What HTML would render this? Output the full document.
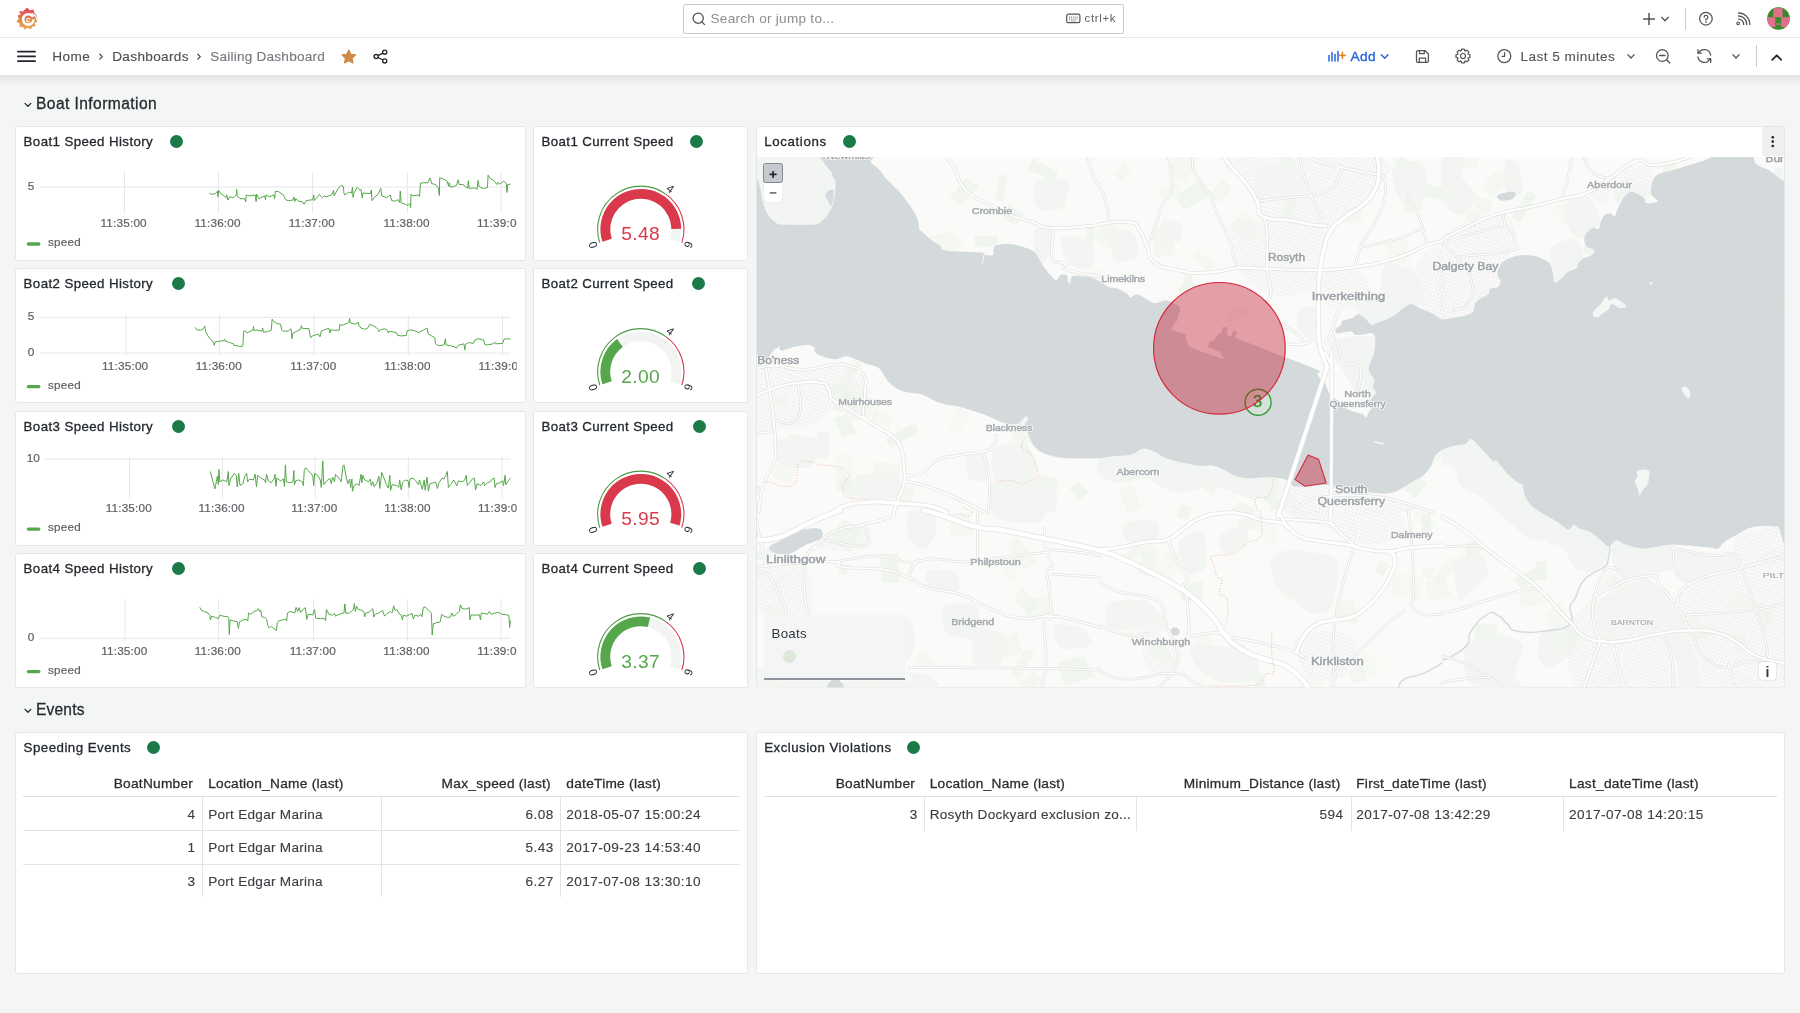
<!DOCTYPE html>
<html lang="en"><head><meta charset="utf-8"><title>Sailing Dashboard - Dashboards - Grafana</title>
<style>
*{box-sizing:border-box}
html,body{margin:0;padding:0}
body{width:1800px;height:1013px;overflow:hidden;background:#f4f5f5;font-family:"Liberation Sans",sans-serif;color:#24292e;font-size:13.5px}
#app{position:relative;width:1800px;height:1013px;overflow:hidden;will-change:transform;transform:translateZ(0)}
.abs{position:absolute}
.t{position:absolute;white-space:nowrap;line-height:1}
.topbar{position:absolute;left:0;top:0;width:1800px;height:37px;background:#fff}
.topline{position:absolute;left:0;top:36.5px;width:1800px;height:1.3px;background:#e6e7e8}
.subbar{position:absolute;left:0;top:38px;width:1800px;height:37px;background:#fff;}
.subshadow{position:absolute;left:0;top:75px;width:1800px;height:12px;background:linear-gradient(to bottom,rgba(20,20,20,.078),rgba(20,20,20,.05) 25%,rgba(20,20,20,.03) 45%,rgba(20,20,20,.012) 70%,rgba(20,20,20,0))}
.sec{color:#5d6165}
.panel{position:absolute;background:#fff;border:1px solid #e5e6e7;border-radius:2.5px}
.ptitle{position:absolute;left:7.6px;top:8.4px;font-size:13.3px;line-height:14px;white-space:nowrap;color:#24292e;letter-spacing:.4px;-webkit-text-stroke:.3px #24292e}
.dot{position:absolute;width:13px;height:13px;border-radius:50%;background:#1c7a49}
.rowt{position:absolute;font-size:15.6px;line-height:18px;white-space:nowrap;color:#24292e;-webkit-text-stroke:.28px #24292e;letter-spacing:.42px}
svg{position:absolute;overflow:visible}
svg text{font-family:"Liberation Sans",sans-serif}

</style></head>
<body>
<div id="app">
<div class="topbar"></div><div class="subbar"></div><div class="subshadow"></div><div class="topline"></div>
<svg style="left:15.5px;top:7px" width="22" height="23.5" viewBox="0 0 22 23.5">
<defs><linearGradient id="glg" x1="0" y1="0" x2="0" y2="1"><stop offset="0" stop-color="#e2405c"/><stop offset=".38" stop-color="#e0704f"/><stop offset=".6" stop-color="#dd9046"/><stop offset="1" stop-color="#eaa553"/></linearGradient></defs>
<path fill="url(#glg)" d="M11.2 0.4 L13.6 3.2 L17.4 2.6 L18.2 5.6 C20 7.4 21.2 9.4 21.4 11.6 L19.6 10 L21.2 14.6 L18.6 16.2 L19.6 19.2 L16.2 19.4 L15 22.6 L11.8 20.8 L8.6 22.8 L7 19.8 L3.4 20.2 L3.8 16.6 L0.4 14.8 L2.8 11.8 L1.6 8.4 L4.6 7.4 L3 4 L7 4.4 L8.2 3.2 Z"/>
<circle cx="12.3" cy="12.4" r="5.15" fill="none" stroke="#fff" stroke-width="2.7"/>
<path fill="none" stroke="url(#glg)" stroke-width="2.3" d="M15.6 11.9 L20.6 10.2"/>
<path fill="none" stroke="#fff" stroke-width="1.3" stroke-linecap="round" d="M15.9 6.6 C18.4 7.6 20 9.3 20.6 11.2"/>
<path fill="none" stroke="#fff" stroke-width="1.05" stroke-linecap="round" d="M13.9 12.2 A1.75 1.75 0 1 0 13.4 14.6"/>
</svg>
<div class="abs" style="left:683px;top:4px;width:441px;height:29.5px;border:1px solid #c5c7ca;border-radius:2.5px;background:#fff"></div>
<svg style="left:691px;top:11px" width="16" height="16" viewBox="0 0 16 16"><circle cx="7.2" cy="7.2" r="5.1" fill="none" stroke="#505459" stroke-width="1.3"/><path d="M10.9 10.9 L13.6 13.6" stroke="#505459" stroke-width="1.3" stroke-linecap="round"/></svg>
<div class="t" style="left:710.5px;top:11.5px;font-size:13.6px;color:#8a8d91;letter-spacing:.26px">Search or jump to...</div>
<svg style="left:1066px;top:13px" width="15" height="11" viewBox="0 0 15 11"><rect x=".7" y="1.2" width="13.2" height="8.4" rx="1.6" fill="none" stroke="#505459" stroke-width="1.2"/><path d="M3 4.1h9M3 6h9M4.6 7.9h5.8" stroke="#505459" stroke-width=".9" stroke-dasharray="1 .9"/></svg>
<div class="t" style="left:1084.5px;top:12.5px;font-size:11.4px;color:#5d6165;letter-spacing:.68px">ctrl+k</div>
<svg style="left:1642px;top:12px" width="14" height="14" viewBox="0 0 14 14"><path d="M7 1.6v10.8M1.6 7h10.8" stroke="#505459" stroke-width="1.5" stroke-linecap="round"/></svg>
<svg style="left:0;top:0" width="1800" height="80"><polyline points="1661.8,17.3 1665,20.7 1668.2,17.3" fill="none" stroke="#505459" stroke-width="1.3" stroke-linecap="round" stroke-linejoin="round"/></svg>
<div class="abs" style="left:1684.6px;top:7.5px;width:1px;height:22.5px;background:#c9ccd0"></div>
<svg style="left:1698px;top:11px" width="16" height="16" viewBox="0 0 16 16"><circle cx="7.9" cy="7.7" r="6.3" fill="none" stroke="#505459" stroke-width="1.25"/><path d="M6.1 6.2 A1.9 1.9 0 1 1 8 8.2 V9.2" fill="none" stroke="#505459" stroke-width="1.25" stroke-linecap="round"/><circle cx="8" cy="11.1" r=".85" fill="#505459"/></svg>
<svg style="left:1735px;top:11px" width="16" height="16" viewBox="0 0 16 16"><g fill="none" stroke="#505459" stroke-width="1.3" stroke-linecap="round"><path d="M3.6 8.1 A5.2 5.2 0 0 1 8.7 13.4"/><path d="M3.6 5 A8.3 8.3 0 0 1 11.8 13.4"/><path d="M3.6 2 A11.3 11.3 0 0 1 14.8 13.4"/><circle cx="3.1" cy="12.3" r="1.3" stroke-width="1.1"/></g></svg>
<svg style="left:1767px;top:7.2px" width="23" height="23" viewBox="0 0 23 23"><defs><clipPath id="avc"><circle cx="11.5" cy="11.5" r="11.3"/></clipPath><pattern id="avd" width="1.6" height="1.6" patternUnits="userSpaceOnUse"><rect width=".7" height=".7" fill="#2c6f22"/></pattern></defs><g clip-path="url(#avc)"><rect width="23" height="23" fill="#3c8f2e"/><rect width="23" height="10.2" fill="url(#avd)"/><rect x="6.3" y="1.2" width="9.3" height="9" fill="#e0708b"/><rect x="0" y="10.2" width="8.4" height="9.8" fill="#e0708b"/><rect x="14.2" y="10.2" width="9" height="9.8" fill="#e0708b"/><rect x="8.4" y="10.2" width="5.8" height="13" fill="url(#avd)"/><rect x="9.2" y="16.4" width="4.3" height="1.4" fill="#e0708b"/></g></svg>
<svg style="left:17px;top:50px" width="19" height="13" viewBox="0 0 19 13"><path d="M.9 1.5h17.2M.9 6.3h17.2M.9 11.1h17.2" stroke="#24222e" stroke-width="1.75" stroke-linecap="round"/></svg>
<div class="t sec" style="left:52.3px;top:50px;font-size:13.6px;letter-spacing:.38px;color:#4d5156;-webkit-text-stroke:.15px #4d5156">Home</div>
<svg style="left:97px;top:51px" width="8" height="10" viewBox="0 0 8 10"><polyline points="2.8,3.2 5.3,5.6 2.8,8" fill="none" stroke="#505459" stroke-width="1.3" stroke-linecap="round" stroke-linejoin="round"/></svg>
<div class="t sec" style="left:112.2px;top:50px;font-size:13.6px;letter-spacing:.34px;color:#4d5156;-webkit-text-stroke:.15px #4d5156">Dashboards</div>
<svg style="left:195px;top:51px" width="8" height="10" viewBox="0 0 8 10"><polyline points="2.8,3.2 5.3,5.6 2.8,8" fill="none" stroke="#505459" stroke-width="1.3" stroke-linecap="round" stroke-linejoin="round"/></svg>
<div class="t" style="left:210.2px;top:50px;font-size:13.6px;letter-spacing:.22px;color:#777b80;-webkit-text-stroke:.15px #777b80">Sailing Dashboard</div>
<svg style="left:0;top:0" width="400" height="76"><polygon points="348.80,49.90 350.86,54.27 355.65,54.88 352.13,58.18 353.03,62.92 348.80,60.60 344.57,62.92 345.47,58.18 341.95,54.88 346.74,54.27" fill="#cf8a49" stroke="#cf8a49" stroke-width="1.2" stroke-linejoin="round"/></svg>
<svg style="left:372px;top:48px" width="18" height="18" viewBox="0 0 18 18"><g fill="none" stroke="#24222e" stroke-width="1.35"><circle cx="12.7" cy="4.2" r="2.05"/><circle cx="4.1" cy="8.5" r="2.05"/><circle cx="12.7" cy="12.9" r="2.05"/><path d="M6 7.6 L10.8 5.1M6 9.5 L10.8 12"/></g></svg>
<svg style="left:1328px;top:50px" width="19" height="12" viewBox="0 0 19 12"><path d="M1 5.4v5.6M4 2.6v8.4M7 4.6v6.4M10 1.6v9.4" stroke="#2563d6" stroke-width="1.5" stroke-linecap="round"/><path d="M14.4 2.4v6M11.6 5.4h5.6" stroke="#e08a2c" stroke-width="1.6" stroke-linecap="round"/></svg>
<div class="t" style="left:1350.6px;top:49.9px;font-size:13.7px;color:#2563d6;letter-spacing:.3px;-webkit-text-stroke:.35px #2563d6">Add</div>
<svg style="left:0;top:0" width="1800" height="80"><polyline points="1381.4,54.7 1384.7,58.3 1388.0,54.7" fill="none" stroke="#2563d6" stroke-width="1.4" stroke-linecap="round" stroke-linejoin="round"/></svg>
<svg style="left:1415px;top:49px" width="15" height="15" viewBox="0 0 15 15"><g fill="none" stroke="#505459" stroke-width="1.25" stroke-linejoin="round"><path d="M2.9 1.5 H9.9 L13.4 5 V12 A1.4 1.4 0 0 1 12 13.4 H2.9 A1.4 1.4 0 0 1 1.5 12 V2.9 A1.4 1.4 0 0 1 2.9 1.5 Z"/><path d="M4.5 1.7 V4.6 H9.3 V1.7"/><path d="M4.3 13.2 V9.2 H10.6 V13.2"/></g></svg>
<svg style="left:1455px;top:48px" width="16" height="16" viewBox="0 0 16 16"><polygon points="14.96,6.59 14.96,9.41 13.22,9.73 12.92,10.47 13.92,11.92 11.92,13.92 10.47,12.92 9.73,13.22 9.41,14.96 6.59,14.96 6.27,13.22 5.53,12.92 4.08,13.92 2.08,11.92 3.08,10.47 2.78,9.73 1.04,9.41 1.04,6.59 2.78,6.27 3.08,5.53 2.08,4.08 4.08,2.08 5.53,3.08 6.27,2.78 6.59,1.04 9.41,1.04 9.73,2.78 10.47,3.08 11.92,2.08 13.92,4.08 12.92,5.53 13.22,6.27" fill="none" stroke="#505459" stroke-width="1.2" stroke-linejoin="round"/><circle cx="8" cy="8" r="2.5" fill="none" stroke="#505459" stroke-width="1.2"/></svg>
<svg style="left:1496px;top:48px" width="16" height="16" viewBox="0 0 16 16"><circle cx="8.3" cy="8.1" r="6.5" fill="none" stroke="#505459" stroke-width="1.25"/><path d="M8.6 4.7V8.3H6" fill="none" stroke="#505459" stroke-width="1.25" stroke-linecap="round" stroke-linejoin="round"/></svg>
<div class="t" style="left:1520.6px;top:50px;font-size:13.6px;letter-spacing:.44px;color:#55595e;-webkit-text-stroke:.15px #55595e">Last 5 minutes</div>
<svg style="left:0;top:0" width="1800" height="80"><polyline points="1627.8,54.599999999999994 1631,58.0 1634.2,54.599999999999994" fill="none" stroke="#505459" stroke-width="1.3" stroke-linecap="round" stroke-linejoin="round"/></svg>
<svg style="left:1654px;top:47px" width="18" height="18" viewBox="0 0 18 18"><circle cx="8.3" cy="8.5" r="5.8" fill="none" stroke="#505459" stroke-width="1.3"/><path d="M5.6 8.5h5.4M12.6 12.8 L15.8 16" stroke="#505459" stroke-width="1.3" stroke-linecap="round"/></svg>
<svg style="left:1696px;top:48px" width="17" height="17" viewBox="0 0 17 17"><g fill="none" stroke="#505459" stroke-width="1.3" stroke-linecap="round" stroke-linejoin="round"><path d="M2.50 5.30 A6.4 6.4 0 0 1 14.64 7.11"/><path d="M14.10 10.70 A6.4 6.4 0 0 1 1.96 8.89"/><path d="M2 1.7V5.2H5.4"/><path d="M14.7 14.4V10.9H11.3"/></g></svg>
<svg style="left:0;top:0" width="1800" height="80"><polyline points="1732.8,54.599999999999994 1736,58.0 1739.2,54.599999999999994" fill="none" stroke="#505459" stroke-width="1.3" stroke-linecap="round" stroke-linejoin="round"/></svg>
<div class="abs" style="left:1755.8px;top:45px;width:1px;height:22.2px;background:#c9ccd0"></div>
<svg style="left:0;top:0" width="1800" height="76"><polyline points="1772.2,59.8 1776.7,55.3 1781.2,59.8" fill="none" stroke="#24222e" stroke-width="1.8" stroke-linecap="round" stroke-linejoin="round"/></svg>
<svg style="left:0;top:0" width="60" height="1013"><polyline points="25,103.4 27.9,106.2 30.8,103.4" fill="none" stroke="#24292e" stroke-width="1.3" stroke-linecap="round" stroke-linejoin="round"/></svg><div class="rowt" style="left:36px;top:94.8px;letter-spacing:0.42px">Boat Information</div>
<svg style="left:0;top:0" width="60" height="1013"><polyline points="25,709.4000000000001 27.9,712.2 30.8,709.4000000000001" fill="none" stroke="#24292e" stroke-width="1.3" stroke-linecap="round" stroke-linejoin="round"/></svg><div class="rowt" style="left:36px;top:700.8000000000001px;letter-spacing:0.16px">Events</div>
<div class="panel" style="left:15px;top:125.6px;width:511px;height:135px"><div class="ptitle" style="letter-spacing:0.4px">Boat1 Speed History</div><div class="dot" style="left:153.5px;top:8.4px"></div></div>
<div class="panel" style="left:15px;top:268.1px;width:511px;height:135px"><div class="ptitle" style="letter-spacing:0.4px">Boat2 Speed History</div><div class="dot" style="left:155.5px;top:8.4px"></div></div>
<div class="panel" style="left:15px;top:410.6px;width:511px;height:135px"><div class="ptitle" style="letter-spacing:0.4px">Boat3 Speed History</div><div class="dot" style="left:155.5px;top:8.4px"></div></div>
<div class="panel" style="left:15px;top:553.1px;width:511px;height:135px"><div class="ptitle" style="letter-spacing:0.4px">Boat4 Speed History</div><div class="dot" style="left:155.5px;top:8.4px"></div></div>
<div class="panel" style="left:533px;top:125.6px;width:214.7px;height:135px"><div class="ptitle" style="letter-spacing:0.37px">Boat1 Current Speed</div><div class="dot" style="left:156.0px;top:8.4px"></div></div>
<div class="panel" style="left:533px;top:268.1px;width:214.7px;height:135px"><div class="ptitle" style="letter-spacing:0.37px">Boat2 Current Speed</div><div class="dot" style="left:158.0px;top:8.4px"></div></div>
<div class="panel" style="left:533px;top:410.6px;width:214.7px;height:135px"><div class="ptitle" style="letter-spacing:0.37px">Boat3 Current Speed</div><div class="dot" style="left:159.0px;top:8.4px"></div></div>
<div class="panel" style="left:533px;top:553.1px;width:214.7px;height:135px"><div class="ptitle" style="letter-spacing:0.37px">Boat4 Current Speed</div><div class="dot" style="left:159.0px;top:8.4px"></div></div>
<svg style="left:0;top:0" width="1800" height="1013" viewBox="0 0 1800 1013"><path d="M39.5 187H510.4" stroke="#e6e7e8" stroke-width="1"/><path d="M124.5 172V213.4" stroke="#e6e7e8" stroke-width="1"/><path d="M218.4 172V213.4" stroke="#e6e7e8" stroke-width="1"/><path d="M312.6 172V213.4" stroke="#e6e7e8" stroke-width="1"/><path d="M407.4 172V213.4" stroke="#e6e7e8" stroke-width="1"/><path d="M501 172V213.4" stroke="#e6e7e8" stroke-width="1"/><text x="34.2" y="190.1" text-anchor="end" font-size="11.8" fill="#5d6165" stroke="#5d6165" stroke-width=".2">5</text><clipPath id="cl1"><rect x="16" y="125.6" width="500.8" height="135"/></clipPath><g clip-path="url(#cl1)"><text x="123.7" y="227.29999999999998" text-anchor="middle" font-size="11.75" letter-spacing=".18" fill="#5d6165" stroke="#5d6165" stroke-width=".2">11:35:00</text><text x="217.6" y="227.29999999999998" text-anchor="middle" font-size="11.75" letter-spacing=".18" fill="#5d6165" stroke="#5d6165" stroke-width=".2">11:36:00</text><text x="311.8" y="227.29999999999998" text-anchor="middle" font-size="11.75" letter-spacing=".18" fill="#5d6165" stroke="#5d6165" stroke-width=".2">11:37:00</text><text x="406.59999999999997" y="227.29999999999998" text-anchor="middle" font-size="11.75" letter-spacing=".18" fill="#5d6165" stroke="#5d6165" stroke-width=".2">11:38:00</text><text x="500.2" y="227.29999999999998" text-anchor="middle" font-size="11.75" letter-spacing=".18" fill="#5d6165" stroke="#5d6165" stroke-width=".2">11:39:00</text></g><polyline points="209.46,193.06 211.72,194.38 215.5,193.62 217.39,191.17 217.96,196.83 218.71,190.22 220.22,193.06 223.06,194.95 225.89,197.78 226.83,194.95 227.78,200.05 229.67,196.83 233.45,197.78 236.28,194.95 236.66,189.28 237.22,195.89 240.06,198.72 244.78,198.72 245.72,201.93 246.29,194.95 249.5,195.89 255.17,194.95 256.11,201.56 256.49,194.0 258.95,198.72 264.61,195.89 265.56,199.67 266.12,194.95 269.34,196.83 274.06,194.95 274.62,198.72 275.38,191.17 278.78,191.73 283.5,194.95 285.39,199.67 288.22,200.61 292.95,200.05 293.89,196.83 294.84,201.56 295.78,198.72 298.61,201.18 302.39,201.93 304.28,204.39 306.17,200.61 312.78,199.67 313.72,194.95 314.29,200.61 318.45,195.89 319.39,194.38 322.23,197.78 324.11,195.89 326.0,196.83 331.67,194.95 333.56,190.22 334.13,195.89 338.28,188.33 341.11,185.5 343.38,186.45 343.95,193.06 344.89,194.95 348.67,192.11 351.5,193.06 352.45,187.39 353.01,197.4 353.96,193.06 357.17,187.39 360.0,190.22 360.95,189.28 362.27,197.78 362.84,193.06 370.39,193.62 371.34,189.85 371.9,200.61 374.17,197.78 377.95,194.0 380.78,188.33 381.73,195.89 384.56,196.83 386.45,197.78 390.23,194.95 391.74,200.61 394.95,201.18 397.78,199.67 399.67,202.5 400.24,191.17 401.18,202.5 405.34,204.39 408.17,205.33 410.06,203.45 410.63,207.6 411.0,194.0 412.89,195.89 418.56,194.95 419.51,196.83 420.45,183.04 428.01,182.67 429.89,177.94 431.78,183.61 435.56,184.56 438.39,188.33 439.34,195.51 439.72,177.94 443.12,178.89 446.89,180.78 448.78,186.45 449.16,182.67 450.67,187.39 456.34,185.5 458.23,179.83 459.17,184.56 462.95,184.56 467.67,188.33 468.24,180.78 469.18,188.33 475.23,187.96 477.12,189.28 478.06,180.4 479.01,186.45 483.73,188.71 487.51,187.39 488.07,175.11 490.34,178.89 493.17,179.83 496.95,184.56 497.9,182.29 499.78,184.18 503.56,181.16 506.4,183.61 506.96,192.49 507.72,184.56 510.55,184.18" fill="none" stroke="#56a64b" stroke-width="1" stroke-linejoin="round"/><path d="M28.4 244.0H38.8" stroke="#56a64b" stroke-width="3.4" stroke-linecap="round"/><text x="48" y="246.3" font-size="11.6" letter-spacing=".25" fill="#5d6165" stroke="#5d6165" stroke-width=".2">speed</text><path d="M39.5 317.3H510.4" stroke="#e6e7e8" stroke-width="1"/><path d="M39.5 353.1H510.4" stroke="#e6e7e8" stroke-width="1"/><path d="M126 314.5V355.5" stroke="#e6e7e8" stroke-width="1"/><path d="M219.6 314.5V355.5" stroke="#e6e7e8" stroke-width="1"/><path d="M314.1 314.5V355.5" stroke="#e6e7e8" stroke-width="1"/><path d="M408.3 314.5V355.5" stroke="#e6e7e8" stroke-width="1"/><path d="M502.5 314.5V355.5" stroke="#e6e7e8" stroke-width="1"/><text x="34.2" y="320.3" text-anchor="end" font-size="11.8" fill="#5d6165" stroke="#5d6165" stroke-width=".2">5</text><text x="34.2" y="356.3" text-anchor="end" font-size="11.8" fill="#5d6165" stroke="#5d6165" stroke-width=".2">0</text><clipPath id="cl2"><rect x="16" y="268.1" width="500.8" height="135"/></clipPath><g clip-path="url(#cl2)"><text x="125.2" y="369.8" text-anchor="middle" font-size="11.75" letter-spacing=".18" fill="#5d6165" stroke="#5d6165" stroke-width=".2">11:35:00</text><text x="218.79999999999998" y="369.8" text-anchor="middle" font-size="11.75" letter-spacing=".18" fill="#5d6165" stroke="#5d6165" stroke-width=".2">11:36:00</text><text x="313.3" y="369.8" text-anchor="middle" font-size="11.75" letter-spacing=".18" fill="#5d6165" stroke="#5d6165" stroke-width=".2">11:37:00</text><text x="407.5" y="369.8" text-anchor="middle" font-size="11.75" letter-spacing=".18" fill="#5d6165" stroke="#5d6165" stroke-width=".2">11:38:00</text><text x="501.7" y="369.8" text-anchor="middle" font-size="11.75" letter-spacing=".18" fill="#5d6165" stroke="#5d6165" stroke-width=".2">11:39:00</text></g><polyline points="195.1,327.39 196.61,329.85 200.39,330.22 203.6,328.71 204.73,326.07 205.49,331.17 207.94,335.89 210.78,339.67 213.61,341.93 214.18,345.33 215.5,341.56 220.22,341.18 224.0,340.61 224.57,339.29 225.13,341.18 229.67,342.5 233.45,343.82 234.01,345.71 235.33,345.33 240.06,346.47 242.89,346.09 243.65,331.17 244.78,330.6 246.67,333.06 250.45,331.17 252.9,330.22 253.47,326.45 254.03,330.6 256.11,329.85 261.78,331.17 262.72,327.96 263.29,332.11 267.45,331.73 271.22,330.22 272.17,319.27 274.06,321.72 276.89,323.61 280.67,324.18 281.61,330.22 283.5,331.17 288.22,331.17 291.06,328.71 292.0,338.72 292.95,333.06 295.78,331.73 300.5,329.28 301.45,325.5 302.2,328.33 309.0,328.71 309.95,334.95 310.89,337.78 312.78,335.51 315.61,334.95 318.45,334.0 319.96,336.83 321.28,331.17 324.11,329.85 328.84,328.33 330.16,333.06 330.73,329.85 333.56,330.22 339.23,330.22 339.79,324.18 341.11,325.5 343.95,324.56 348.67,322.67 349.61,318.51 350.56,323.04 355.28,324.18 358.11,322.29 359.06,325.5 360.95,327.96 364.73,329.28 367.56,328.33 369.45,324.56 372.28,325.12 376.06,327.39 377.95,329.28 378.89,331.73 380.78,329.85 384.56,328.71 387.39,330.22 388.34,333.06 389.28,331.17 394.0,332.11 396.84,333.06 397.78,335.51 401.56,335.89 406.28,335.51 407.23,330.6 411.0,329.85 415.73,331.17 418.56,332.49 423.28,330.22 427.06,327.96 428.01,333.62 430.84,335.51 434.62,337.4 435.56,343.82 438.39,345.71 444.06,344.96 445.38,338.72 446.14,344.96 450.67,345.71 454.45,346.85 456.34,348.17 458.23,345.33 463.89,343.82 464.84,350.06 465.41,344.39 468.62,342.5 473.34,343.45 475.23,339.67 479.01,338.72 483.73,340.05 484.67,344.39 487.51,344.96 493.17,343.82 494.5,341.93 495.63,343.82 502.62,343.45 503.94,339.29 507.34,338.72 510.55,339.1" fill="none" stroke="#56a64b" stroke-width="1" stroke-linejoin="round"/><path d="M28.4 386.6H38.8" stroke="#56a64b" stroke-width="3.4" stroke-linecap="round"/><text x="48" y="388.9" font-size="11.6" letter-spacing=".25" fill="#5d6165" stroke="#5d6165" stroke-width=".2">speed</text><path d="M45.6 459.1H510.4" stroke="#e6e7e8" stroke-width="1"/><path d="M129.6 457V498.4" stroke="#e6e7e8" stroke-width="1"/><path d="M222.4 457V498.4" stroke="#e6e7e8" stroke-width="1"/><path d="M315.2 457V498.4" stroke="#e6e7e8" stroke-width="1"/><path d="M408.3 457V498.4" stroke="#e6e7e8" stroke-width="1"/><path d="M501.9 457V498.4" stroke="#e6e7e8" stroke-width="1"/><text x="39.8" y="462.2" text-anchor="end" font-size="11.8" fill="#5d6165" stroke="#5d6165" stroke-width=".2">10</text><clipPath id="cl3"><rect x="16" y="410.6" width="500.8" height="135"/></clipPath><g clip-path="url(#cl3)"><text x="128.79999999999998" y="512.3000000000001" text-anchor="middle" font-size="11.75" letter-spacing=".18" fill="#5d6165" stroke="#5d6165" stroke-width=".2">11:35:00</text><text x="221.6" y="512.3000000000001" text-anchor="middle" font-size="11.75" letter-spacing=".18" fill="#5d6165" stroke="#5d6165" stroke-width=".2">11:36:00</text><text x="314.4" y="512.3000000000001" text-anchor="middle" font-size="11.75" letter-spacing=".18" fill="#5d6165" stroke="#5d6165" stroke-width=".2">11:37:00</text><text x="407.5" y="512.3000000000001" text-anchor="middle" font-size="11.75" letter-spacing=".18" fill="#5d6165" stroke="#5d6165" stroke-width=".2">11:38:00</text><text x="501.09999999999997" y="512.3000000000001" text-anchor="middle" font-size="11.75" letter-spacing=".18" fill="#5d6165" stroke="#5d6165" stroke-width=".2">11:39:00</text></g><polyline points="210.4,471.45 212.67,480.89 214.93,488.82 217.39,476.17 218.33,484.67 218.9,469.56 219.85,481.83 223.06,479.95 226.83,481.83 228.35,471.45 228.91,485.61 230.61,479.0 234.39,473.33 236.28,475.22 237.22,486.93 238.73,473.33 240.06,485.61 242.89,483.72 244.78,476.17 246.67,473.33 247.61,481.83 249.5,479.0 253.28,479.95 255.17,474.28 256.49,486.93 257.62,475.22 260.83,478.06 264.61,479.95 265.56,482.78 266.5,474.28 268.39,480.89 271.22,482.78 274.06,479.0 275.0,474.28 275.95,486.18 276.89,478.06 280.67,480.89 283.5,479.0 284.45,486.56 285.39,464.83 286.34,481.83 290.11,482.78 292.95,481.83 293.89,470.5 294.46,484.67 295.78,480.89 298.61,479.95 302.39,481.83 303.34,485.61 304.28,470.5 305.6,467.67 308.06,470.5 310.89,473.33 312.78,476.17 313.72,485.61 314.67,473.33 317.5,475.22 320.34,479.95 321.28,487.5 322.79,461.06 323.74,484.67 326.0,481.83 329.78,478.06 331.29,483.72 332.61,477.11 334.5,481.83 335.45,474.28 337.34,476.17 340.17,479.95 341.11,481.83 343.0,465.78 343.95,464.83 345.84,475.22 347.73,483.72 349.61,479.0 350.56,487.5 351.88,479.0 352.45,491.28 353.96,485.61 357.17,483.72 359.06,485.61 360.95,474.28 361.89,482.78 362.84,475.22 364.73,479.95 368.5,481.83 370.39,479.0 371.34,485.61 372.85,481.83 374.17,486.56 377.0,482.78 378.89,476.17 379.84,488.45 381.73,472.39 383.62,477.11 386.45,484.67 388.34,488.07 389.85,475.22 390.6,490.33 392.12,484.67 396.84,485.61 398.73,487.5 399.67,479.95 401.18,489.96 402.5,482.78 405.34,479.95 408.17,480.89 409.12,487.5 410.06,479.0 412.89,478.06 415.73,480.89 418.56,484.67 419.51,479.95 422.34,489.39 424.23,479.95 425.17,490.33 427.06,477.11 428.38,491.28 429.89,483.72 433.67,482.78 435.56,481.83 437.45,488.45 438.96,482.78 442.17,478.06 444.06,479.0 445.95,475.22 447.27,471.45 448.41,487.5 450.67,484.67 453.51,479.95 455.39,482.78 456.72,485.61 458.23,480.89 462.01,481.83 464.84,479.95 466.16,475.22 467.3,485.61 469.56,482.78 472.4,479.0 474.28,478.06 475.61,489.96 477.12,483.72 480.9,485.61 483.73,481.83 484.67,485.61 487.51,482.78 490.34,481.83 492.23,479.0 494.12,478.06 495.06,487.5 496.38,483.72 499.78,482.78 502.62,480.89 503.56,485.61 505.07,475.22 505.83,484.67 508.28,480.89 510.55,478.06" fill="none" stroke="#56a64b" stroke-width="1" stroke-linejoin="round"/><path d="M28.4 529.1H38.8" stroke="#56a64b" stroke-width="3.4" stroke-linecap="round"/><text x="48" y="531.4" font-size="11.6" letter-spacing=".25" fill="#5d6165" stroke="#5d6165" stroke-width=".2">speed</text><path d="M39.5 638.3H510.4" stroke="#e6e7e8" stroke-width="1"/><path d="M125.1 599.5V640.5" stroke="#e6e7e8" stroke-width="1"/><path d="M218.6 599.5V640.5" stroke="#e6e7e8" stroke-width="1"/><path d="M313.6 599.5V640.5" stroke="#e6e7e8" stroke-width="1"/><path d="M407.3 599.5V640.5" stroke="#e6e7e8" stroke-width="1"/><path d="M501.1 599.5V640.5" stroke="#e6e7e8" stroke-width="1"/><text x="34.2" y="641.3000000000001" text-anchor="end" font-size="11.8" fill="#5d6165" stroke="#5d6165" stroke-width=".2">0</text><clipPath id="cl4"><rect x="16" y="553.1" width="500.8" height="135"/></clipPath><g clip-path="url(#cl4)"><text x="124.3" y="654.8000000000001" text-anchor="middle" font-size="11.75" letter-spacing=".18" fill="#5d6165" stroke="#5d6165" stroke-width=".2">11:35:00</text><text x="217.79999999999998" y="654.8000000000001" text-anchor="middle" font-size="11.75" letter-spacing=".18" fill="#5d6165" stroke="#5d6165" stroke-width=".2">11:36:00</text><text x="312.8" y="654.8000000000001" text-anchor="middle" font-size="11.75" letter-spacing=".18" fill="#5d6165" stroke="#5d6165" stroke-width=".2">11:37:00</text><text x="406.5" y="654.8000000000001" text-anchor="middle" font-size="11.75" letter-spacing=".18" fill="#5d6165" stroke="#5d6165" stroke-width=".2">11:38:00</text><text x="500.3" y="654.8000000000001" text-anchor="middle" font-size="11.75" letter-spacing=".18" fill="#5d6165" stroke="#5d6165" stroke-width=".2">11:39:00</text></g><polyline points="199.82,607.29 200.96,609.93 204.17,611.45 207.94,612.96 209.83,615.22 210.4,619.95 211.72,616.17 215.5,617.49 218.33,618.62 219.85,615.22 223.06,616.17 227.78,616.73 228.72,618.62 229.29,634.49 230.05,619.95 233.45,620.89 237.22,621.83 238.36,628.45 239.49,621.83 242.89,619.95 246.67,619.38 247.8,620.89 248.56,612.96 250.45,614.28 254.22,611.45 257.06,610.5 258.38,608.61 259.51,611.45 260.83,610.5 261.78,616.73 264.61,617.49 266.5,619.0 267.82,625.61 269.34,628.07 271.22,626.18 274.06,628.82 276.51,630.33 277.27,622.78 278.78,620.89 282.56,619.95 285.39,619.0 286.71,620.89 287.47,612.96 290.11,611.45 294.84,612.96 296.16,607.29 297.67,611.45 299.18,607.67 300.5,612.39 303.34,609.18 305.22,607.67 306.17,613.33 306.74,619.38 308.06,614.28 312.78,614.85 314.67,609.56 315.61,618.06 320.34,618.62 324.49,618.62 325.63,620.51 326.38,609.56 328.84,614.28 332.61,615.22 334.5,613.33 335.45,616.17 339.23,614.28 343.95,612.96 344.89,603.89 345.84,613.33 349.61,612.96 353.39,609.56 354.34,603.51 355.28,611.45 356.6,606.16 358.11,609.18 361.89,610.5 363.78,611.45 364.73,616.73 365.67,613.33 369.45,611.82 372.85,608.61 373.79,617.11 375.12,614.28 378.89,612.96 382.67,610.5 384.56,616.17 386.45,614.28 390.23,611.45 392.12,612.96 393.63,605.78 394.95,610.5 396.84,609.56 399.67,614.28 401.56,615.22 402.32,619.95 403.45,615.22 406.28,616.17 409.12,614.85 411.95,613.33 413.27,619.0 414.78,615.22 418.56,616.17 420.83,614.28 421.96,616.73 423.28,607.67 425.17,606.72 427.63,609.56 429.89,611.45 431.41,613.33 432.16,635.06 433.29,623.72 436.51,622.78 440.28,621.83 441.61,614.28 444.06,616.17 447.84,617.49 450.67,616.73 451.81,612.96 453.51,616.17 456.34,614.28 459.17,611.45 460.49,604.83 462.01,608.61 465.78,609.18 469.18,607.67 469.94,619.95 471.07,614.85 475.23,615.22 479.38,614.85 480.52,619.95 481.27,612.96 484.67,613.71 487.51,614.28 489.4,611.45 491.28,614.28 495.06,612.96 498.84,612.39 501.67,614.28 506.4,614.85 508.85,615.22 509.61,627.5 510.55,620.51" fill="none" stroke="#56a64b" stroke-width="1" stroke-linejoin="round"/><path d="M28.4 671.6H38.8" stroke="#56a64b" stroke-width="3.4" stroke-linecap="round"/><text x="48" y="673.9" font-size="11.6" letter-spacing=".25" fill="#5d6165" stroke="#5d6165" stroke-width=".2">speed</text><path d="M602.38 241.78A40.4 40.4 0 1 1 679.22 241.78L669.90 238.76A30.6 30.6 0 1 0 611.70 238.76Z" fill="#f2f3f3"/><path d="M602.38 241.78A40.4 40.4 0 1 1 681.20 228.79L671.40 228.92A30.6 30.6 0 1 0 611.70 238.76Z" fill="#d9394b"/><path d="M599.24 242.80A43.7 43.7 0 0 1 666.49 193.95L665.84 194.84A42.6 42.6 0 0 0 600.28 242.46Z" fill="#4c9a42"/><path d="M666.49 193.95A43.7 43.7 0 0 1 682.36 242.80L681.32 242.46A42.6 42.6 0 0 0 665.84 194.84Z" fill="#d9394b"/><text x="592.96" y="244.84" font-size="11.4" fill="#24292e" text-anchor="middle" dominant-baseline="central" transform="rotate(252.0 592.96 244.84)">0</text><text x="670.37" y="188.61" font-size="11.4" fill="#24292e" text-anchor="middle" dominant-baseline="central" transform="rotate(396.0 670.37 188.61)">4</text><text x="688.64" y="244.84" font-size="11.4" fill="#24292e" text-anchor="middle" dominant-baseline="central" transform="rotate(468.0 688.64 244.84)">6</text><text x="640.5999999999999" y="240.0" font-size="19.2" letter-spacing=".35" fill="#d9394b" text-anchor="middle">5.48</text><path d="M602.38 384.28A40.4 40.4 0 1 1 679.22 384.28L669.90 381.26A30.6 30.6 0 1 0 611.70 381.26Z" fill="#f2f3f3"/><path d="M602.38 384.28A40.4 40.4 0 0 1 617.05 339.12L622.81 347.04A30.6 30.6 0 0 0 611.70 381.26Z" fill="#56a64b"/><path d="M599.24 385.30A43.7 43.7 0 0 1 666.49 336.45L665.84 337.34A42.6 42.6 0 0 0 600.28 384.96Z" fill="#4c9a42"/><path d="M666.49 336.45A43.7 43.7 0 0 1 682.36 385.30L681.32 384.96A42.6 42.6 0 0 0 665.84 337.34Z" fill="#d9394b"/><text x="592.96" y="387.34" font-size="11.4" fill="#24292e" text-anchor="middle" dominant-baseline="central" transform="rotate(252.0 592.96 387.34)">0</text><text x="670.37" y="331.11" font-size="11.4" fill="#24292e" text-anchor="middle" dominant-baseline="central" transform="rotate(396.0 670.37 331.11)">4</text><text x="688.64" y="387.34" font-size="11.4" fill="#24292e" text-anchor="middle" dominant-baseline="central" transform="rotate(468.0 688.64 387.34)">6</text><text x="640.5999999999999" y="382.5" font-size="19.2" letter-spacing=".35" fill="#56a64b" text-anchor="middle">2.00</text><path d="M602.38 526.78A40.4 40.4 0 1 1 679.22 526.78L669.90 523.76A30.6 30.6 0 1 0 611.70 523.76Z" fill="#f2f3f3"/><path d="M602.38 526.78A40.4 40.4 0 1 1 679.60 525.57L670.18 522.84A30.6 30.6 0 1 0 611.70 523.76Z" fill="#d9394b"/><path d="M599.24 527.80A43.7 43.7 0 0 1 666.49 478.95L665.84 479.84A42.6 42.6 0 0 0 600.28 527.46Z" fill="#4c9a42"/><path d="M666.49 478.95A43.7 43.7 0 0 1 682.36 527.80L681.32 527.46A42.6 42.6 0 0 0 665.84 479.84Z" fill="#d9394b"/><text x="592.96" y="529.84" font-size="11.4" fill="#24292e" text-anchor="middle" dominant-baseline="central" transform="rotate(252.0 592.96 529.84)">0</text><text x="670.37" y="473.61" font-size="11.4" fill="#24292e" text-anchor="middle" dominant-baseline="central" transform="rotate(396.0 670.37 473.61)">4</text><text x="688.64" y="529.84" font-size="11.4" fill="#24292e" text-anchor="middle" dominant-baseline="central" transform="rotate(468.0 688.64 529.84)">6</text><text x="640.5999999999999" y="525.0000000000001" font-size="19.2" letter-spacing=".35" fill="#d9394b" text-anchor="middle">5.95</text><path d="M602.38 669.28A40.4 40.4 0 1 1 679.22 669.28L669.90 666.26A30.6 30.6 0 1 0 611.70 666.26Z" fill="#f2f3f3"/><path d="M602.38 669.28A40.4 40.4 0 0 1 650.11 617.49L647.85 627.02A30.6 30.6 0 0 0 611.70 666.26Z" fill="#56a64b"/><path d="M599.24 670.30A43.7 43.7 0 0 1 666.49 621.45L665.84 622.34A42.6 42.6 0 0 0 600.28 669.96Z" fill="#4c9a42"/><path d="M666.49 621.45A43.7 43.7 0 0 1 682.36 670.30L681.32 669.96A42.6 42.6 0 0 0 665.84 622.34Z" fill="#d9394b"/><text x="592.96" y="672.34" font-size="11.4" fill="#24292e" text-anchor="middle" dominant-baseline="central" transform="rotate(252.0 592.96 672.34)">0</text><text x="670.37" y="616.11" font-size="11.4" fill="#24292e" text-anchor="middle" dominant-baseline="central" transform="rotate(396.0 670.37 616.11)">4</text><text x="688.64" y="672.34" font-size="11.4" fill="#24292e" text-anchor="middle" dominant-baseline="central" transform="rotate(468.0 688.64 672.34)">6</text><text x="640.5999999999999" y="667.5000000000001" font-size="19.2" letter-spacing=".35" fill="#56a64b" text-anchor="middle">3.37</text></svg>
<div class="panel" style="left:755.6px;top:125.6px;width:1029.4px;height:562.5px"><div class="ptitle" style="letter-spacing:.62px">Locations</div><div class="dot" style="left:86.2px;top:8.3px"></div></div>
<svg style="left:756.6px;top:156.6px" width="1027.3" height="530.6" viewBox="756.6 156.6 1027.3 530.6"><defs><clipPath id="mapc"><rect x="756.6" y="156.6" width="1027.3" height="530.6"/></clipPath><pattern id="urb" width="3.6" height="3.6" patternUnits="userSpaceOnUse" patternTransform="rotate(18)"><path d="M0 .5H3.6M.5 0V3.6" stroke="#eaebeb" stroke-width=".6"/></pattern></defs><g clip-path="url(#mapc)"><rect x="756.6" y="156.6" width="1027.3" height="530.6" fill="#fafaf8"/><path d="M756.0 362.6C765.1 351.2 785.7 367.9 801.7 368.3C817.7 368.7 823.8 363.4 836.0 364.5C848.2 365.6 857.0 363.3 862.7 374.0C868.4 384.7 870.7 410.6 864.6 417.8C858.5 425.0 842.5 409.0 832.2 410.2C821.9 411.4 824.6 419.8 813.2 423.6C801.8 427.4 786.5 428.9 775.1 429.3C763.7 429.7 759.8 438.8 756.0 425.5C752.2 412.2 746.9 374.0 756.0 362.6Z" fill="url(#urb)" opacity=".9"/><path d="M1230.5 221.8C1236.6 217.2 1244.6 218.8 1262.9 219.9C1281.2 221.0 1310.5 217.2 1321.9 227.5C1333.3 237.8 1322.7 258.7 1320.0 271.3C1317.3 283.9 1318.5 285.8 1308.6 290.4C1298.7 295.0 1285.0 298.8 1270.5 294.2C1256.0 289.6 1243.8 277.8 1236.2 267.5C1228.6 257.2 1233.5 251.8 1232.4 242.7C1231.3 233.6 1224.4 226.4 1230.5 221.8Z" fill="url(#urb)" opacity=".9"/><path d="M1232.4 157.0C1258.3 151.3 1349.0 150.1 1377.2 157.0C1405.4 163.9 1380.3 179.1 1373.4 191.3C1366.5 203.5 1352.4 211.1 1342.9 218.0C1333.4 224.9 1336.5 225.2 1325.8 225.6C1315.1 226.0 1302.1 221.8 1289.5 219.9C1276.9 218.0 1271.3 223.0 1262.9 216.1C1254.5 209.2 1253.7 197.4 1247.6 185.6C1241.5 173.8 1206.5 162.7 1232.4 157.0Z" fill="url(#urb)" opacity=".9"/><path d="M1321.9 271.3C1328.0 264.8 1344.8 265.6 1354.3 269.4C1363.8 273.2 1370.0 282.4 1369.6 290.4C1369.2 298.4 1361.6 307.1 1352.4 309.4C1343.2 311.7 1329.9 309.4 1323.8 301.8C1317.7 294.2 1315.8 277.8 1321.9 271.3Z" fill="url(#urb)" opacity=".9"/><path d="M1442.0 238.9C1454.2 217.9 1488.5 213.4 1503.0 214.2C1517.5 215.0 1514.0 233.6 1514.4 242.7C1514.8 251.8 1508.1 254.9 1504.9 259.9C1501.7 264.9 1499.2 263.3 1498.2 267.5C1497.2 271.7 1501.8 276.7 1500.1 280.9C1498.4 285.1 1493.6 285.1 1489.6 288.5C1485.6 291.9 1483.5 293.4 1480.1 298.0C1476.7 302.6 1480.1 307.1 1472.5 311.3C1464.9 315.5 1448.1 333.5 1442.0 319.0C1435.9 304.5 1429.8 259.9 1442.0 238.9Z" fill="url(#urb)" opacity=".9"/><path d="M1419.1 259.9C1424.4 253.0 1437.4 237.5 1442.0 252.3C1446.6 267.1 1445.8 322.6 1442.0 334.0C1438.2 345.4 1428.2 318.9 1422.9 309.4C1417.6 299.9 1416.1 296.5 1415.3 286.6C1414.5 276.7 1413.8 266.8 1419.1 259.9Z" fill="url(#urb)" opacity=".9"/><path d="M756.0 566.3C765.5 557.5 792.9 552.9 803.6 562.4C814.3 571.9 813.2 603.3 809.4 613.9C805.6 624.5 795.3 616.9 784.6 615.4C773.9 613.9 761.7 616.1 756.0 606.3C750.3 596.5 746.5 575.1 756.0 566.3Z" fill="url(#urb)" opacity=".9"/><path d="M820.8 539.6C828.4 534.6 853.2 523.9 862.7 524.3C872.2 524.7 868.4 536.5 868.4 541.5C868.4 546.5 871.5 547.6 862.7 549.1C853.9 550.6 833.0 551.0 824.6 549.1C816.2 547.2 813.2 544.6 820.8 539.6Z" fill="url(#urb)" opacity=".9"/><path d="M1291.5 486.4C1299.7 481.2 1314.9 485.2 1330.5 486.4C1346.1 487.6 1354.9 489.1 1369.6 492.2C1384.3 495.3 1397.0 497.7 1403.9 501.7C1410.8 505.7 1426.8 510.1 1403.9 512.2C1381.0 514.3 1312.0 517.4 1289.5 512.2C1267.0 507.0 1283.3 491.6 1291.5 486.4Z" fill="url(#urb)" opacity=".9"/><path d="M1299.1 634.9C1309.0 630.3 1335.7 628.8 1346.7 633.0C1357.7 637.2 1356.2 646.7 1354.3 655.8C1352.4 664.9 1346.3 674.9 1337.2 678.7C1328.1 682.5 1316.6 679.5 1308.6 674.9C1300.6 670.3 1299.1 663.8 1297.2 655.8C1295.3 647.8 1289.2 639.5 1299.1 634.9Z" fill="url(#urb)" opacity=".9"/><path d="M1287.6 511.0C1293.7 509.1 1316.3 508.7 1329.6 511.0C1342.9 513.3 1349.7 515.5 1354.3 522.4C1358.9 529.3 1356.6 543.8 1352.4 545.3C1348.2 546.8 1344.1 535.1 1333.4 530.1C1322.7 525.1 1308.3 524.3 1299.1 520.5C1289.9 516.7 1281.5 512.9 1287.6 511.0Z" fill="url(#urb)" opacity=".9"/><path d="M1352.4 511.0C1360.8 505.3 1386.0 507.2 1396.3 511.0C1406.6 514.8 1406.2 524.0 1403.9 530.1C1401.6 536.2 1394.7 539.6 1384.8 541.5C1374.9 543.4 1360.8 545.7 1354.3 539.6C1347.8 533.5 1344.0 516.7 1352.4 511.0Z" fill="url(#urb)" opacity=".9"/><path d="M1135.2 617.7C1138.3 612.4 1151.2 607.0 1156.2 610.1C1161.2 613.2 1163.1 627.7 1160.0 633.0C1156.9 638.3 1145.9 639.9 1140.9 636.8C1135.9 633.7 1132.1 623.0 1135.2 617.7Z" fill="url(#urb)" opacity=".9"/><path d="M1142.8 648.2C1145.8 642.1 1164.9 640.2 1171.4 644.4C1177.9 648.6 1178.2 663.1 1175.2 669.2C1172.2 675.3 1162.7 679.1 1156.2 674.9C1149.7 670.7 1139.8 654.3 1142.8 648.2Z" fill="url(#urb)" opacity=".9"/><path d="M1564.0 629.1C1569.7 616.9 1584.9 607.2 1594.4 594.8C1603.9 582.4 1604.7 570.2 1611.6 567.2C1618.5 564.2 1632.1 573.7 1628.7 579.6C1625.3 585.5 1600.1 584.5 1594.4 596.7C1588.7 608.9 1602.5 622.1 1600.2 640.6C1597.9 659.1 1588.0 679.5 1583.0 689.2C1578.0 698.9 1578.8 695.9 1575.4 689.2C1572.0 682.5 1568.2 667.8 1565.9 655.8C1563.6 643.8 1558.3 641.3 1564.0 629.1Z" fill="url(#urb)" opacity=".9"/><path d="M1600.2 640.6C1613.9 634.9 1647.0 630.0 1661.1 633.0C1675.2 636.0 1668.4 644.6 1670.7 655.8C1673.0 667.0 1690.1 682.5 1672.6 689.2C1655.1 695.9 1599.0 694.7 1583.0 689.2C1567.0 683.7 1589.1 671.2 1592.5 661.5C1595.9 651.8 1586.5 646.3 1600.2 640.6Z" fill="url(#urb)" opacity=".9"/><path d="M1676.4 606.3C1677.9 596.4 1677.1 591.0 1689.7 583.4C1702.3 575.8 1719.9 573.5 1739.3 568.2C1758.7 562.9 1777.4 532.5 1786.9 556.7C1796.4 580.9 1804.4 662.7 1786.9 689.2C1769.4 715.7 1717.5 695.9 1699.2 689.2C1680.9 682.5 1698.8 667.0 1695.4 655.8C1692.0 644.6 1685.9 642.9 1682.1 633.0C1678.3 623.1 1674.9 616.2 1676.4 606.3Z" fill="url(#urb)" opacity=".9"/><path d="M1739.3 533.9C1745.8 528.7 1756.4 529.8 1765.9 528.1C1775.4 526.4 1782.7 519.6 1786.9 525.3C1791.1 531.0 1796.0 548.1 1786.9 556.7C1777.8 565.3 1751.9 568.8 1741.2 568.2C1730.5 567.6 1733.9 560.8 1733.5 553.9C1733.1 547.0 1732.8 539.1 1739.3 533.9Z" fill="url(#urb)" opacity=".9"/><path d="M1590.6 193.2C1591.7 188.3 1602.8 183.3 1609.7 178.0C1616.6 172.7 1616.5 168.4 1624.9 166.5C1633.3 164.6 1646.6 164.2 1651.6 168.4C1656.6 172.6 1653.5 185.6 1649.7 187.5C1645.9 189.4 1639.7 179.1 1632.5 178.0C1625.3 176.9 1619.2 176.9 1613.5 181.8C1607.8 186.7 1608.6 200.4 1604.0 202.7C1599.4 205.0 1589.5 198.1 1590.6 193.2Z" fill="url(#urb)" opacity=".9"/><g fill="#eff4ee"><polygon points="1095.3,224.4 1091.5,249.8 1083.6,245.3 1087.3,224.8" opacity="0.9"/><polygon points="1193.0,273.9 1188.6,296.7 1179.5,294.2 1185.2,273.0" opacity="0.9"/><polygon points="809.6,261.3 814.9,284.1 805.2,285.7 799.9,264.7" opacity="0.35"/><polygon points="1346.5,485.0 1364.5,491.9 1359.6,505.8 1343.5,501.4" opacity="0.7"/><polygon points="1230.4,636.3 1246.1,646.4 1237.4,655.5 1225.4,647.2" opacity="0.7"/><polygon points="1506.6,291.9 1515.0,324.3 1504.3,323.0 1498.6,295.8" opacity="0.35"/><polygon points="1556.6,451.9 1538.1,476.9 1528.1,468.5 1544.1,445.4" opacity="0.7"/><polygon points="1255.4,508.5 1251.2,519.2 1231.8,509.7 1237.8,500.9" opacity="0.7"/><polygon points="773.8,395.3 787.6,398.0 784.0,407.5 773.5,404.8" opacity="0.9"/><polygon points="855.6,398.8 836.2,411.6 825.0,389.9 842.4,381.0" opacity="0.9"/><polygon points="1739.3,227.4 1749.2,237.6 1741.4,245.7 1733.4,236.0" opacity="0.9"/><polygon points="1316.0,481.0 1300.2,488.9 1295.9,479.2 1311.8,472.3" opacity="0.9"/><polygon points="1160.9,353.4 1179.1,364.9 1169.1,377.3 1154.9,367.1" opacity="0.35"/><polygon points="751.2,229.1 763.6,229.8 762.1,244.6 751.7,242.3" opacity="0.7"/><polygon points="1382.3,416.1 1369.4,415.7 1369.5,400.2 1379.6,399.5" opacity="0.7"/><polygon points="1260.2,527.9 1237.9,530.0 1236.6,519.7 1259.2,516.2" opacity="0.7"/><polygon points="1762.2,599.9 1771.2,625.1 1761.5,629.6 1751.0,606.2" opacity="0.7"/><polygon points="1404.8,464.8 1426.7,483.9 1414.4,498.0 1393.5,480.4" opacity="0.9"/><polygon points="1122.9,163.6 1130.0,171.6 1121.1,180.6 1113.6,173.4" opacity="0.7"/><polygon points="1734.9,340.7 1746.4,351.0 1740.1,359.2 1727.4,350.5" opacity="0.9"/><polygon points="1683.0,323.7 1705.8,335.3 1698.0,354.4 1676.9,346.8" opacity="0.9"/><polygon points="1574.7,315.1 1581.6,343.6 1560.3,352.1 1553.4,322.5" opacity="0.5"/><polygon points="797.8,463.5 789.6,483.1 772.4,475.5 781.7,456.8" opacity="0.5"/><polygon points="791.8,574.5 771.2,592.8 764.5,587.9 782.5,569.5" opacity="0.35"/><polygon points="1016.7,299.9 1026.2,312.6 1012.6,322.7 1003.9,311.3" opacity="0.9"/><polygon points="1451.8,595.5 1429.6,600.3 1425.0,581.6 1442.1,574.1" opacity="0.5"/><polygon points="1389.2,564.0 1382.5,576.0 1375.1,571.0 1379.7,560.5" opacity="0.9"/><polygon points="1559.5,199.9 1574.5,217.9 1564.3,225.0 1550.5,208.7" opacity="0.35"/><polygon points="1225.3,477.4 1211.5,494.8 1199.1,485.0 1209.9,468.2" opacity="0.7"/><polygon points="1710.4,621.0 1712.7,635.8 1698.4,638.3 1696.0,625.2" opacity="0.5"/><polygon points="1458.4,563.7 1438.4,588.0 1432.7,578.5 1450.2,556.0" opacity="0.5"/><polygon points="1536.2,195.8 1519.2,222.0 1511.2,217.1 1528.2,189.4" opacity="0.9"/><polygon points="964.1,312.8 958.8,339.7 951.9,334.4 955.7,313.7" opacity="0.35"/><polygon points="868.2,630.5 882.3,637.6 877.4,657.6 863.6,653.9" opacity="0.9"/><polygon points="1638.9,499.9 1634.0,532.3 1620.1,529.0 1624.8,501.1" opacity="0.5"/><polygon points="1212.4,193.4 1184.0,209.6 1174.1,197.0 1197.2,179.9" opacity="0.9"/><polygon points="783.6,679.5 771.8,696.3 753.4,688.8 760.1,669.2" opacity="0.7"/><polygon points="819.3,262.6 805.4,273.3 798.0,264.1 809.4,254.9" opacity="0.35"/><polygon points="1784.0,184.4 1773.5,183.9 1773.5,168.0 1782.3,167.7" opacity="0.9"/><polygon points="1432.6,426.1 1447.3,454.0 1427.6,463.7 1413.1,443.8" opacity="0.5"/><polygon points="1168.0,334.7 1179.0,337.4 1175.6,347.1 1167.3,343.8" opacity="0.9"/><polygon points="1650.7,502.0 1660.1,516.0 1649.9,521.2 1642.5,509.5" opacity="0.7"/><polygon points="1761.8,433.2 1768.4,447.9 1748.4,458.6 1742.6,447.6" opacity="0.5"/><polygon points="1011.0,555.6 1021.5,562.0 1011.3,581.0 1002.3,576.0" opacity="0.35"/><polygon points="1374.7,432.7 1357.4,454.8 1342.9,440.5 1357.0,421.5" opacity="0.5"/><polygon points="1061.7,486.8 1052.0,496.3 1035.9,482.3 1044.6,473.3" opacity="0.35"/><polygon points="1622.9,459.4 1602.6,483.5 1590.8,469.9 1605.3,451.9" opacity="0.35"/><polygon points="1148.2,390.9 1145.9,402.0 1138.9,400.2 1141.0,390.9" opacity="0.35"/><polygon points="1421.9,182.3 1448.4,190.4 1445.8,200.9 1421.9,195.2" opacity="0.9"/><polygon points="1278.8,360.0 1262.2,373.6 1249.6,358.9 1264.7,348.6" opacity="0.7"/><polygon points="1430.4,511.5 1431.0,536.4 1421.5,538.1 1421.3,515.3" opacity="0.9"/><polygon points="1048.5,419.2 1068.4,426.5 1060.1,441.3 1041.4,434.7" opacity="0.35"/><polygon points="1065.4,209.9 1043.2,207.7 1042.0,184.4 1065.8,187.5" opacity="0.35"/><polygon points="918.9,430.3 890.7,447.2 884.8,439.6 913.6,422.6" opacity="0.9"/><polygon points="1166.3,222.4 1175.6,253.8 1155.9,257.6 1150.1,229.9" opacity="0.7"/><polygon points="774.2,556.4 744.8,563.1 741.7,553.7 769.4,547.9" opacity="0.9"/><polygon points="1170.2,623.0 1161.9,631.4 1145.4,612.7 1152.2,606.7" opacity="0.5"/><polygon points="1013.7,285.1 1022.7,305.5 1012.0,310.6 1003.3,289.2" opacity="0.5"/><polygon points="1511.3,178.9 1491.2,197.8 1482.2,185.0 1496.8,169.7" opacity="0.5"/><polygon points="942.3,374.9 930.6,386.8 922.5,377.7 932.5,368.0" opacity="0.9"/><polygon points="889.3,501.7 878.9,507.4 870.6,493.7 878.9,488.1" opacity="0.9"/><polygon points="896.2,250.2 907.3,255.5 902.7,266.9 892.5,264.3" opacity="0.9"/><polygon points="1159.8,551.6 1148.4,561.5 1140.4,552.7 1150.0,543.4" opacity="0.5"/><polygon points="859.3,621.0 861.0,640.3 844.2,644.2 842.3,623.8" opacity="0.9"/><polygon points="1474.8,622.6 1496.2,624.5 1496.9,641.1 1474.5,641.5" opacity="0.9"/><polygon points="1022.9,213.4 1016.0,225.3 1000.9,215.4 1008.0,204.2" opacity="0.9"/><polygon points="850.0,565.0 845.9,574.4 837.8,572.5 840.3,562.4" opacity="0.9"/><polygon points="1484.2,212.7 1479.4,223.5 1464.6,218.3 1469.7,209.2" opacity="0.7"/><polygon points="1781.8,290.0 1793.4,303.3 1778.1,318.4 1768.7,307.3" opacity="0.7"/><polygon points="800.8,246.2 830.3,256.7 824.1,272.5 798.4,264.8" opacity="0.7"/><polygon points="1491.8,338.6 1503.8,354.1 1495.6,356.9 1486.7,343.8" opacity="0.5"/><polygon points="1008.7,278.6 980.6,281.8 981.9,269.2 1003.9,266.7" opacity="0.35"/><polygon points="1741.4,239.4 1721.9,239.0 1723.8,228.9 1737.9,228.6" opacity="0.7"/><polygon points="1499.7,671.2 1526.9,688.6 1519.0,700.6 1496.0,685.2" opacity="0.9"/><polygon points="1609.8,671.9 1629.4,678.6 1626.1,686.2 1607.0,681.1" opacity="0.5"/><polygon points="1141.8,551.3 1158.4,556.6 1150.6,577.1 1136.7,571.8" opacity="0.7"/><polygon points="1139.5,635.9 1130.6,641.8 1123.3,628.3 1130.9,625.8" opacity="0.35"/><polygon points="1015.6,536.6 1036.7,560.0 1025.1,569.0 1007.0,548.1" opacity="0.7"/><polygon points="1722.6,314.2 1700.6,330.5 1692.6,312.4 1713.6,300.6" opacity="0.9"/><polygon points="1744.3,353.5 1745.1,369.5 1728.8,368.0 1728.6,353.7" opacity="0.5"/><polygon points="1391.9,330.6 1376.5,339.7 1370.5,329.3 1383.6,320.4" opacity="0.35"/><polygon points="1426.5,399.7 1430.0,422.6 1420.5,421.6 1417.2,402.5" opacity="0.9"/><polygon points="1271.9,521.6 1276.7,541.8 1265.4,544.5 1259.9,524.8" opacity="0.35"/><polygon points="1556.4,302.1 1566.8,315.3 1558.2,322.3 1549.5,311.5" opacity="0.7"/><polygon points="1674.0,470.8 1656.1,470.1 1657.7,456.0 1673.9,455.9" opacity="0.35"/><polygon points="879.1,415.7 849.3,419.4 847.0,400.6 870.0,396.9" opacity="0.5"/><polygon points="1707.5,337.4 1728.5,359.9 1717.7,371.7 1698.8,350.9" opacity="0.7"/><polygon points="979.7,343.4 988.6,353.4 980.5,360.9 973.6,351.3" opacity="0.7"/><polygon points="1164.8,348.0 1189.5,351.1 1187.4,359.7 1165.6,357.6" opacity="0.5"/><polygon points="1421.1,195.4 1422.5,209.5 1405.0,213.3 1403.0,200.1" opacity="0.7"/><polygon points="1198.3,158.4 1183.8,182.9 1166.5,172.3 1179.9,148.2" opacity="0.5"/><polygon points="1202.6,580.6 1201.2,600.7 1180.9,600.3 1179.5,584.3" opacity="0.9"/><polygon points="843.4,474.9 859.3,485.2 852.0,498.2 836.2,488.0" opacity="0.9"/><polygon points="1546.8,575.6 1520.0,587.7 1513.8,578.7 1538.2,565.5" opacity="0.9"/><polygon points="861.8,527.7 850.8,551.8 829.0,540.8 842.1,519.2" opacity="0.9"/><polygon points="949.1,260.1 953.4,279.4 939.3,282.7 932.5,266.6" opacity="0.35"/><polygon points="1666.3,587.2 1678.2,610.6 1662.1,618.7 1648.8,597.4" opacity="0.9"/><polygon points="1080.6,279.3 1078.2,298.6 1065.8,295.6 1066.9,278.2" opacity="0.9"/><polygon points="1545.7,559.5 1545.6,580.6 1536.1,578.8 1536.1,561.7" opacity="0.9"/><polygon points="1281.3,508.9 1270.3,510.4 1268.2,501.6 1277.4,499.3" opacity="0.9"/><polygon points="1433.3,569.4 1429.4,579.2 1421.5,574.8 1424.0,567.3" opacity="0.7"/><polygon points="1748.6,652.0 1734.1,651.0 1731.2,633.1 1744.4,632.9" opacity="0.7"/><polygon points="1698.5,389.9 1698.2,406.1 1674.2,407.2 1675.2,393.1" opacity="0.5"/><polygon points="962.3,246.5 930.5,253.9 924.8,237.9 952.2,229.5" opacity="0.7"/><polygon points="1763.1,403.0 1740.8,407.6 1736.1,390.6 1757.0,383.6" opacity="0.7"/><polygon points="1042.3,679.5 1023.8,694.6 1016.9,683.0 1033.9,670.3" opacity="0.7"/><polygon points="1093.7,675.9 1064.4,685.4 1056.6,662.4 1083.4,655.7" opacity="0.9"/><polygon points="1195.5,347.5 1188.7,356.8 1176.4,350.7 1181.0,342.6" opacity="0.7"/><polygon points="1306.5,365.9 1313.6,381.6 1303.2,384.0 1298.0,372.5" opacity="0.5"/><polygon points="1222.8,178.7 1231.8,188.8 1217.1,202.5 1208.8,193.5" opacity="0.7"/><polygon points="1375.9,451.1 1373.7,475.6 1359.1,472.3 1361.2,454.8" opacity="0.5"/><polygon points="1007.1,174.1 1002.8,202.4 995.0,197.6 998.7,175.9" opacity="0.9"/><polygon points="1584.6,241.3 1601.9,243.7 1599.9,257.2 1583.0,252.6" opacity="0.9"/><polygon points="1516.8,388.3 1536.1,408.5 1525.2,416.8 1510.2,402.1" opacity="0.7"/><polygon points="1501.8,296.8 1482.8,310.3 1475.4,297.3 1491.2,284.1" opacity="0.5"/><polygon points="856.3,433.2 842.2,436.7 833.8,417.7 846.4,414.0" opacity="0.9"/><polygon points="1111.1,275.9 1092.5,301.7 1076.3,292.3 1093.9,266.2" opacity="0.35"/><polygon points="1637.3,372.1 1650.6,396.2 1637.4,404.5 1623.8,385.9" opacity="0.5"/><polygon points="803.2,220.5 778.3,222.0 781.2,211.2 799.4,210.1" opacity="0.35"/><polygon points="1478.7,538.4 1483.6,548.9 1466.6,556.8 1463.9,544.8" opacity="0.9"/><polygon points="874.3,266.7 863.0,272.5 859.3,264.7 870.6,259.1" opacity="0.7"/><polygon points="1245.9,209.5 1261.5,234.0 1245.9,242.2 1231.0,223.6" opacity="0.35"/><polygon points="1504.7,343.2 1504.8,360.9 1479.1,360.1 1481.0,345.4" opacity="0.9"/><polygon points="1295.9,199.3 1291.3,220.0 1282.8,218.6 1287.9,198.3" opacity="0.9"/><polygon points="744.0,250.8 772.2,253.2 770.4,276.8 743.4,273.5" opacity="0.9"/><polygon points="1359.9,651.1 1379.6,661.7 1371.5,678.3 1354.2,666.4" opacity="0.35"/><polygon points="1258.4,669.9 1269.1,690.9 1262.6,695.8 1249.6,674.4" opacity="0.9"/><polygon points="1678.4,173.7 1663.8,177.4 1661.3,165.8 1675.3,162.7" opacity="0.9"/><polygon points="874.8,461.0 901.0,464.9 897.9,482.5 872.2,478.6" opacity="0.7"/><polygon points="921.2,375.4 946.9,387.9 941.1,403.7 917.5,391.6" opacity="0.7"/><polygon points="1545.1,604.6 1520.4,606.2 1519.5,585.6 1541.7,586.0" opacity="0.5"/><polygon points="1035.2,651.0 1017.7,680.0 1011.4,672.0 1024.5,649.9" opacity="0.7"/><polygon points="1196.3,249.1 1215.9,265.2 1207.6,270.1 1191.7,258.1" opacity="0.5"/><polygon points="1279.1,483.8 1271.4,503.5 1262.4,500.4 1270.0,480.0" opacity="0.9"/><polygon points="1642.0,504.5 1629.7,527.1 1610.6,515.0 1621.9,498.2" opacity="0.9"/><polygon points="1087.9,492.1 1078.1,499.6 1068.7,487.6 1077.7,481.6" opacity="0.9"/><polygon points="791.0,616.9 770.5,626.1 764.3,606.6 780.1,599.6" opacity="0.35"/><polygon points="804.6,454.5 790.7,455.5 788.7,435.0 800.2,433.8" opacity="0.9"/><polygon points="1287.0,479.0 1295.9,507.6 1277.7,509.5 1271.6,483.9" opacity="0.35"/><polygon points="1506.9,468.3 1513.9,492.7 1503.1,493.3 1495.2,472.0" opacity="0.7"/><polygon points="1362.3,220.8 1345.3,224.0 1342.1,208.4 1360.9,206.6" opacity="0.5"/><polygon points="897.7,553.1 899.4,582.5 880.9,581.2 879.8,553.6" opacity="0.9"/><polygon points="1250.1,311.4 1229.4,322.0 1224.5,314.3 1243.4,304.3" opacity="0.7"/><polygon points="1781.7,519.5 1762.8,530.2 1751.3,513.8 1767.6,503.4" opacity="0.35"/><polygon points="1420.1,334.5 1451.9,340.1 1448.7,363.5 1416.2,354.7" opacity="0.7"/><polygon points="1420.6,165.9 1412.7,173.4 1394.2,162.0 1400.1,156.4" opacity="0.9"/><polygon points="1104.4,220.0 1132.1,235.5 1119.8,254.7 1093.2,238.8" opacity="0.7"/><polygon points="967.7,511.0 972.5,533.2 950.9,536.5 949.3,516.8" opacity="0.5"/><polygon points="1258.9,450.7 1243.5,466.2 1228.1,451.8 1239.0,436.9" opacity="0.5"/><polygon points="1635.4,408.0 1613.8,417.4 1606.6,401.0 1628.0,392.4" opacity="0.7"/><polygon points="1424.3,179.0 1399.7,182.0 1394.8,164.7 1419.0,160.5" opacity="0.5"/><polygon points="805.7,538.8 782.4,547.9 778.4,536.0 798.8,526.4" opacity="0.5"/><polygon points="1047.1,329.0 1056.2,342.2 1049.4,346.5 1040.5,335.8" opacity="0.7"/><polygon points="1756.2,487.9 1770.5,513.2 1759.7,519.1 1744.8,496.1" opacity="0.35"/><polygon points="1172.0,438.5 1175.2,458.2 1159.9,460.3 1155.4,443.6" opacity="0.35"/><polygon points="1580.8,631.7 1570.7,654.2 1553.9,646.3 1564.9,625.4" opacity="0.9"/><polygon points="1407.3,233.4 1409.6,259.6 1390.9,265.2 1384.7,243.0" opacity="0.5"/><polygon points="1569.2,445.4 1571.5,461.5 1559.8,463.3 1555.7,449.1" opacity="0.35"/><polygon points="1274.9,416.5 1281.7,445.5 1260.5,448.8 1255.0,425.8" opacity="0.5"/><polygon points="1246.2,363.9 1254.0,374.1 1242.4,385.8 1235.7,380.2" opacity="0.35"/><polygon points="1774.6,604.1 1774.6,619.4 1765.7,619.6 1764.5,605.9" opacity="0.35"/><polygon points="1145.8,547.8 1125.5,565.1 1119.9,557.7 1137.7,541.1" opacity="0.7"/><polygon points="1701.7,186.9 1691.6,190.5 1688.7,182.1 1698.0,179.4" opacity="0.5"/><polygon points="1753.7,604.4 1729.4,608.1 1728.6,594.6 1748.6,590.8" opacity="0.35"/><polygon points="1132.6,484.3 1141.4,507.8 1127.3,514.2 1118.6,489.4" opacity="0.7"/><polygon points="1058.8,477.8 1051.2,502.3 1029.6,495.2 1038.8,475.3" opacity="0.7"/><polygon points="1361.1,664.5 1367.1,679.2 1352.7,683.4 1347.8,671.0" opacity="0.7"/><polygon points="1042.0,387.3 1018.0,391.6 1011.2,374.4 1034.3,365.4" opacity="0.5"/><polygon points="1054.8,614.1 1025.9,619.7 1024.8,601.3 1048.2,594.6" opacity="0.5"/><polygon points="1550.5,530.1 1583.3,537.5 1580.8,549.4 1547.0,542.8" opacity="0.35"/><polygon points="1581.8,405.1 1570.6,410.6 1558.2,395.7 1566.9,387.4" opacity="0.7"/><polygon points="1243.1,460.6 1255.3,468.6 1248.3,477.4 1237.9,469.8" opacity="0.5"/><polygon points="1016.2,631.5 1022.9,652.3 1001.9,658.1 998.4,641.1" opacity="0.7"/><polygon points="1300.4,177.1 1289.8,179.7 1280.4,157.8 1288.9,153.8" opacity="0.9"/><polygon points="849.0,380.2 871.3,389.7 861.9,406.4 840.9,395.8" opacity="0.35"/><polygon points="825.6,457.8 795.2,463.3 796.6,446.2 822.1,443.1" opacity="0.35"/><polygon points="1475.5,196.0 1492.5,200.6 1488.2,212.4 1473.9,208.5" opacity="0.7"/><polygon points="1746.5,674.3 1756.5,686.0 1751.2,691.7 1739.8,680.1" opacity="0.35"/><polygon points="1031.7,414.6 1029.3,442.5 1011.3,441.0 1012.6,419.7" opacity="0.7"/><polygon points="1365.0,375.7 1373.5,400.0 1359.2,404.0 1351.6,383.5" opacity="0.5"/><polygon points="1711.6,633.6 1692.2,642.9 1679.8,626.6 1695.3,616.1" opacity="0.7"/><polygon points="1680.8,233.2 1660.6,237.9 1658.9,228.2 1677.6,224.8" opacity="0.5"/><polygon points="1241.6,482.8 1254.8,485.5 1252.2,496.9 1241.1,495.2" opacity="0.7"/><polygon points="1190.5,277.8 1196.8,286.3 1181.5,296.4 1177.5,289.2" opacity="0.9"/><polygon points="887.2,677.0 878.4,685.1 860.9,674.1 867.9,667.0" opacity="0.5"/><polygon points="1752.0,375.8 1763.1,387.8 1754.8,395.2 1744.9,386.3" opacity="0.7"/><polygon points="913.8,486.1 911.6,506.6 896.0,506.3 898.3,484.7" opacity="0.7"/><polygon points="1200.7,629.0 1213.3,638.0 1206.9,652.0 1193.9,643.8" opacity="0.35"/><polygon points="1602.1,612.0 1623.7,629.5 1613.9,644.7 1592.6,628.8" opacity="0.7"/><polygon points="979.1,185.8 959.3,205.1 949.5,197.4 965.7,177.5" opacity="0.9"/><polygon points="860.9,364.2 845.6,388.0 838.4,382.7 853.9,358.6" opacity="0.7"/><polygon points="1357.7,623.3 1338.8,620.6 1338.2,600.3 1353.3,598.4" opacity="0.7"/><polygon points="1559.3,600.4 1570.5,621.8 1554.6,633.9 1543.8,614.1" opacity="0.5"/><polygon points="772.4,662.1 786.4,668.5 783.5,677.8 771.3,672.1" opacity="0.5"/><polygon points="1021.5,586.3 1039.0,604.6 1027.4,614.1 1014.0,599.2" opacity="0.7"/><polygon points="875.2,408.3 895.2,417.8 888.3,427.7 870.9,421.0" opacity="0.5"/><polygon points="1434.6,388.7 1454.0,390.9 1452.4,414.8 1433.8,413.0" opacity="0.35"/><polygon points="1157.4,641.1 1177.2,661.9 1167.3,669.8 1146.7,650.6" opacity="0.7"/><polygon points="1600.6,614.2 1589.5,616.3 1588.3,598.4 1597.7,597.5" opacity="0.7"/><polygon points="878.1,251.4 867.7,265.8 859.7,259.8 867.0,246.3" opacity="0.9"/><polygon points="1392.9,572.4 1423.8,576.7 1418.3,599.2 1391.0,594.0" opacity="0.35"/><polygon points="1407.1,295.6 1384.6,297.1 1384.5,283.2 1404.6,282.1" opacity="0.7"/><polygon points="851.9,453.9 851.1,486.3 834.8,486.7 837.5,454.5" opacity="0.35"/><polygon points="1515.8,294.4 1530.5,309.4 1518.0,323.0 1503.5,311.6" opacity="0.7"/><polygon points="1383.4,395.1 1396.2,407.0 1387.9,414.9 1377.1,403.5" opacity="0.7"/><polygon points="922.6,650.5 934.6,663.7 922.8,671.6 915.4,660.2" opacity="0.35"/><polygon points="1394.6,342.3 1371.2,353.5 1363.5,340.2 1384.5,327.2" opacity="0.5"/><polygon points="1192.5,506.9 1186.5,518.9 1176.9,515.7 1180.7,504.5" opacity="0.9"/><polygon points="1039.2,476.3 1042.5,501.5 1025.6,504.5 1022.1,482.2" opacity="0.9"/><polygon points="1759.2,466.4 1740.3,473.2 1733.5,453.2 1750.0,447.7" opacity="0.7"/><polygon points="1057.7,350.1 1070.0,369.9 1057.6,378.1 1046.4,358.5" opacity="0.5"/><polygon points="1305.4,570.3 1320.7,583.9 1309.6,593.8 1295.2,580.4" opacity="0.5"/><polygon points="1731.8,252.5 1751.9,257.7 1750.5,277.5 1732.0,277.7" opacity="0.7"/><polygon points="1323.2,681.7 1309.4,699.5 1297.4,689.5 1309.5,673.5" opacity="0.35"/><polygon points="1456.7,427.1 1459.6,439.2 1446.3,443.0 1441.9,431.6" opacity="0.9"/><polygon points="1185.8,556.0 1167.7,581.9 1155.0,568.1 1170.3,548.3" opacity="0.35"/><polygon points="1618.7,430.1 1611.7,440.7 1591.3,427.5 1600.3,417.2" opacity="0.5"/><polygon points="1304.5,579.2 1304.3,594.8 1285.3,599.6 1282.7,587.3" opacity="0.35"/><polygon points="1478.3,159.1 1477.2,169.1 1456.3,164.8 1460.6,157.4" opacity="0.35"/><polygon points="969.5,413.2 958.4,433.7 947.2,429.4 958.5,408.6" opacity="0.35"/><polygon points="896.1,424.9 917.8,429.9 914.6,438.2 895.5,433.0" opacity="0.35"/><polygon points="1419.3,507.8 1435.9,525.1 1427.1,529.5 1412.4,516.1" opacity="0.35"/><polygon points="1125.6,396.3 1107.3,402.3 1103.7,394.6 1121.5,388.4" opacity="0.5"/><polygon points="973.7,235.4 997.7,235.7 996.1,246.9 975.1,245.4" opacity="0.9"/><polygon points="1776.1,182.4 1767.3,207.2 1750.2,200.7 1759.4,178.1" opacity="0.5"/><polygon points="856.8,247.1 838.7,253.2 837.5,245.9 852.3,239.9" opacity="0.7"/><polygon points="1178.1,180.4 1181.1,193.4 1162.9,201.0 1160.3,190.7" opacity="0.35"/><polygon points="1032.3,158.5 1058.5,171.9 1053.3,181.0 1027.4,169.3" opacity="0.9"/><polygon points="1625.7,583.0 1615.6,592.6 1605.4,584.8 1613.3,574.6" opacity="0.5"/><polygon points="993.2,384.9 1002.5,394.2 986.7,408.4 980.2,398.4" opacity="0.5"/></g><path d="M756 668C756.9 665.5 763.1 666.6 764 668C764.9 669.4 747.5 678.6 764 680C780.5 681.4 888.5 680.9 905 680C921.5 679.1 902.1 672.5 905 672C907.9 671.5 927.3 674.0 930 676C932.7 678.0 948.3 687.5 928 689C907.7 690.5 776.1 691.5 756 689C735.9 686.5 755.1 670.5 756 668Z" fill="#f2f5f1"/><path d="M756.0 157.0C763.8 154.6 815.2 156.4 823.1 157.0C831.0 157.6 823.2 160.7 823.6 161.8C824.0 162.9 825.6 165.3 826.5 166.5C827.4 167.7 830.6 171.1 831.3 172.2C832.0 173.3 831.8 175.0 832.2 176.1C832.6 177.2 834.8 179.8 835.1 181.8C835.4 183.8 834.8 190.5 834.5 193.2C834.2 195.9 833.0 202.2 832.2 204.6C831.4 207.0 828.8 212.3 827.5 214.2C826.2 216.1 822.5 219.6 820.8 220.8C819.1 222.0 817.6 223.7 813.2 224.1C808.8 224.5 787.1 224.4 782.7 224.1C778.3 223.8 776.9 223.0 775.1 221.8C773.3 220.6 768.8 216.4 767.4 214.2C766.0 212.0 763.6 205.8 762.7 202.7C761.8 199.6 760.6 190.4 759.8 187.5C759.0 184.6 756.4 181.6 756.0 178.0C755.6 174.4 748.2 159.4 756.0 157.0Z" fill="#f2f5f1"/><path d="M1442.0 449.3C1443.3 447.2 1450.7 446.2 1453.4 445.5C1456.1 444.8 1462.9 444.4 1464.9 443.6C1466.9 442.8 1468.8 438.4 1470.6 438.8C1472.4 439.2 1477.5 444.8 1480.1 447.4C1482.7 450.0 1490.6 459.1 1492.5 460.7C1494.4 462.3 1494.6 459.3 1496.3 460.7C1498.0 462.1 1504.2 470.5 1506.8 473.1C1509.4 475.7 1516.4 481.3 1518.2 482.6C1520.0 483.9 1521.2 482.9 1522.0 484.5C1522.8 486.1 1523.8 493.6 1524.9 496.0C1526.0 498.4 1529.9 503.8 1531.6 505.5C1533.3 507.2 1543.0 510.4 1539.2 511.0C1535.4 511.6 1506.1 512.8 1499.2 511.0C1492.3 509.2 1484.5 498.9 1480.1 496.0C1475.7 493.1 1464.2 489.7 1461.1 486.4C1458.0 483.1 1455.6 470.1 1453.4 467.4C1451.2 464.7 1443.3 465.7 1442.0 463.6C1440.7 461.5 1440.7 451.4 1442.0 449.3Z" fill="#f2f5f1"/><path d="M1499.2 511.0C1502.1 509.2 1533.4 510.3 1539.2 511.0C1545.0 511.7 1546.5 515.4 1548.7 516.7C1550.9 518.0 1556.0 521.0 1558.2 522.4C1560.4 523.8 1566.0 528.9 1567.8 529.1C1569.6 529.3 1572.2 524.4 1573.5 524.3C1574.8 524.2 1577.2 527.2 1579.2 528.1C1581.2 529.0 1588.1 530.7 1590.6 532.0C1593.0 533.3 1598.2 537.9 1600.2 539.6C1602.2 541.3 1607.1 543.9 1607.8 546.3C1608.5 548.7 1607.9 557.5 1605.9 560.5C1603.9 563.5 1594.2 571.1 1590.6 572.0C1587.0 572.9 1578.5 570.9 1575.4 568.2C1572.3 565.5 1567.1 552.2 1564.0 549.1C1560.9 546.0 1552.9 542.8 1548.7 541.5C1544.5 540.2 1531.7 539.5 1527.7 537.7C1523.7 535.9 1517.7 529.3 1514.4 526.2C1511.1 523.1 1496.3 512.8 1499.2 511.0Z" fill="#f2f5f1"/><path d="M1614.4 591.0C1619.5 588.5 1638.8 577.9 1644.0 577.7C1649.2 577.5 1655.4 585.5 1659.2 589.1C1663.0 592.7 1673.5 604.0 1676.4 608.2C1679.3 612.4 1686.2 622.6 1684.0 625.3C1681.8 628.0 1664.4 629.7 1657.3 631.0C1650.2 632.3 1629.7 636.1 1623.0 636.8C1616.3 637.5 1603.3 639.0 1600.2 636.8C1597.1 634.6 1596.3 622.1 1596.3 617.7C1596.3 613.3 1598.1 601.8 1600.2 598.7C1602.3 595.6 1609.3 593.5 1614.4 591.0Z" fill="#f2f5f1"/><path d="M1676.4 549.1C1680.0 547.2 1702.4 555.1 1708.8 555.8C1715.2 556.5 1728.0 553.6 1731.6 554.8C1735.2 556.0 1744.2 563.2 1739.3 566.3C1734.4 569.4 1696.8 580.8 1689.7 581.5C1682.6 582.2 1679.9 575.8 1678.3 572.0C1676.7 568.2 1672.8 551.0 1676.4 549.1Z" fill="#f2f5f1"/><path d="M1611.6 543.4C1611.9 540.3 1615.1 539.6 1616.4 539.6C1617.7 539.6 1621.1 542.6 1623.0 543.4C1624.9 544.2 1630.0 545.7 1632.5 546.3C1635.0 546.9 1641.3 548.2 1644.0 548.2C1646.7 548.2 1652.3 546.8 1655.4 546.3C1658.5 545.8 1668.7 541.7 1670.7 544.3C1672.7 546.9 1675.7 564.7 1672.6 568.2C1669.5 571.7 1649.1 572.8 1644.0 573.9C1638.9 575.0 1632.3 578.6 1628.7 577.7C1625.1 576.8 1615.5 570.3 1613.5 566.3C1611.5 562.3 1611.3 546.5 1611.6 543.4Z" fill="#f2f5f1"/><path d="M1453.4 560.5C1456.3 556.9 1476.1 551.3 1480.1 552.9C1484.1 554.5 1488.8 569.5 1487.7 573.9C1486.6 578.3 1473.9 587.9 1470.6 591.0C1467.3 594.1 1460.9 601.5 1459.1 600.6C1457.3 599.7 1456.0 588.1 1455.3 583.4C1454.6 578.7 1450.5 564.1 1453.4 560.5Z" fill="#f2f5f1"/><path d="M1541.1 633.0C1543.8 629.9 1557.2 626.4 1560.1 629.1C1563.0 631.8 1567.2 651.4 1565.9 655.8C1564.6 660.2 1552.0 667.2 1548.7 667.2C1545.4 667.2 1538.2 659.8 1537.3 655.8C1536.4 651.8 1538.4 636.1 1541.1 633.0Z" fill="#f2f5f1"/><path d="M1666.8 634.9C1667.5 631.4 1678.8 630.6 1682.1 633.0C1685.4 635.4 1693.4 649.2 1695.4 655.8C1697.4 662.4 1701.0 685.3 1699.2 689.2C1697.4 693.1 1682.9 692.2 1680.2 689.2C1677.5 686.2 1678.0 669.7 1676.4 663.4C1674.8 657.1 1666.1 638.4 1666.8 634.9Z" fill="#f2f5f1"/><path d="M1466.8 644.4C1470.8 640.0 1492.8 634.9 1499.2 634.9C1505.6 634.9 1520.2 640.0 1522.0 644.4C1523.8 648.8 1514.4 667.8 1514.4 673.0C1514.4 678.2 1526.0 687.3 1522.0 689.2C1518.0 691.1 1486.8 691.1 1480.1 689.2C1473.4 687.3 1466.5 678.2 1464.9 673.0C1463.3 667.8 1462.8 648.8 1466.8 644.4Z" fill="#f2f5f1"/><path d="M1270.5 558.6C1272.3 554.6 1283.9 549.8 1289.5 549.1C1295.1 548.4 1312.5 551.6 1318.1 552.9C1323.7 554.2 1335.2 556.1 1337.2 560.5C1339.2 564.9 1336.4 585.2 1335.3 591.0C1334.2 596.8 1330.8 607.6 1327.7 610.1C1324.6 612.6 1313.1 613.6 1308.6 612.0C1304.1 610.4 1293.5 600.0 1289.5 596.7C1285.5 593.4 1276.5 587.8 1274.3 583.4C1272.1 579.0 1268.7 562.6 1270.5 558.6Z" fill="#f2f5f1"/><path d="M1221.0 533.9C1223.7 531.2 1240.7 525.3 1243.8 526.2C1246.9 527.1 1248.9 538.4 1247.6 541.5C1246.3 544.6 1235.5 552.0 1232.4 552.9C1229.3 553.8 1222.3 551.3 1221.0 549.1C1219.7 546.9 1218.3 536.6 1221.0 533.9Z" fill="#f2f5f1"/><path d="M1179.0 541.5C1181.5 538.0 1198.8 527.4 1201.9 530.1C1205.0 532.8 1207.0 559.3 1205.7 564.4C1204.4 569.5 1193.4 574.4 1190.5 573.9C1187.6 573.4 1182.2 564.3 1180.9 560.5C1179.6 556.7 1176.5 545.0 1179.0 541.5Z" fill="#f2f5f1"/><path d="M1123.8 522.4C1127.6 520.6 1152.4 518.5 1156.2 520.5C1160.0 522.5 1158.9 536.7 1156.2 539.6C1153.5 542.5 1137.1 545.7 1133.3 545.3C1129.5 544.9 1124.9 538.5 1123.8 535.8C1122.7 533.1 1120.0 524.2 1123.8 522.4Z" fill="#f2f5f1"/><path d="M1190.5 644.4C1194.5 641.9 1224.9 646.9 1232.4 648.2C1239.9 649.5 1252.3 652.2 1255.2 655.8C1258.1 659.4 1261.0 675.6 1257.2 678.7C1253.4 681.8 1229.8 683.6 1222.9 682.5C1216.0 681.4 1201.9 673.6 1198.1 669.2C1194.3 664.8 1186.5 646.9 1190.5 644.4Z" fill="#f2f5f1"/><path d="M1108.5 602.5C1113.2 599.6 1141.0 598.8 1146.6 600.6C1152.2 602.4 1158.4 614.4 1156.2 617.7C1154.0 621.0 1133.4 628.2 1127.6 629.1C1121.8 630.0 1108.8 628.4 1106.6 625.3C1104.4 622.2 1103.8 605.4 1108.5 602.5Z" fill="#f2f5f1"/><path d="M927.5 570.1C930.7 568.3 952.7 569.6 956.1 572.0C959.5 574.4 960.2 589.2 957.0 591.0C953.8 592.8 931.8 589.6 928.4 587.2C925.0 584.8 924.3 571.9 927.5 570.1Z" fill="#f2f5f1"/><path d="M942.7 606.3C946.0 603.0 970.7 602.2 975.1 604.4C979.5 606.6 977.5 621.7 980.8 625.3C984.1 628.9 1001.5 630.5 1003.7 634.9C1005.9 639.3 1003.5 660.1 999.9 663.4C996.3 666.7 976.5 666.1 973.2 663.4C969.9 660.7 974.4 644.1 971.3 640.6C968.2 637.1 949.8 637.0 946.5 633.0C943.2 629.0 939.4 609.6 942.7 606.3Z" fill="#f2f5f1"/><path d="M908.4 511.0C911.3 507.9 930.1 508.3 933.2 511.0C936.3 513.7 936.2 529.5 935.1 533.9C934.0 538.3 926.8 548.7 923.7 549.1C920.6 549.5 910.2 542.1 908.4 537.7C906.6 533.3 905.5 514.1 908.4 511.0Z" fill="#f2f5f1"/><path d="M992.3 511.0C996.7 509.9 1036.5 509.7 1041.8 511.0C1047.1 512.3 1042.4 521.3 1038.0 522.4C1033.6 523.5 1009.0 521.8 1003.7 520.5C998.4 519.2 987.9 512.1 992.3 511.0Z" fill="#f2f5f1"/><path d="M1053.3 625.3C1055.5 622.8 1075.5 625.0 1079.9 627.2C1084.3 629.4 1093.6 641.9 1091.4 644.4C1089.2 646.9 1065.3 650.4 1060.9 648.2C1056.5 646.0 1051.1 627.8 1053.3 625.3Z" fill="#f2f5f1"/><path d="M870.3 621.5C873.8 617.9 903.3 615.0 908.4 617.7C913.5 620.4 914.6 639.3 914.2 644.4C913.8 649.5 908.8 661.1 904.6 661.5C900.4 661.9 882.0 652.9 878.0 648.2C874.0 643.5 866.8 625.1 870.3 621.5Z" fill="#f2f5f1"/><path d="M775.1 440.7C779.1 437.6 808.3 435.1 813.2 436.9C818.1 438.7 817.9 452.4 817.0 456.0C816.1 459.6 809.9 466.5 805.5 467.4C801.1 468.3 782.4 466.7 778.9 463.6C775.4 460.5 771.1 443.8 775.1 440.7Z" fill="#f2f5f1"/><path d="M857.0 475.0C861.4 472.6 892.3 472.3 897.0 475.0C901.7 477.7 901.4 495.4 897.0 497.9C892.6 500.3 863.6 498.7 858.9 496.0C854.2 493.3 852.6 477.4 857.0 475.0Z" fill="#f2f5f1"/><path d="M965.6 456.0C967.4 452.9 982.0 449.4 984.7 452.1C987.4 454.8 990.3 475.7 988.5 478.8C986.7 481.9 972.1 481.5 969.4 478.8C966.7 476.1 963.8 459.1 965.6 456.0Z" fill="#f2f5f1"/><path d="M992.3 484.5C997.6 480.7 1030.9 478.6 1038.0 478.8C1045.1 479.0 1051.5 482.6 1053.3 486.4C1055.1 490.2 1060.4 508.1 1053.3 511.0C1046.2 513.9 999.4 514.1 992.3 511.0C985.2 507.9 987.0 488.3 992.3 484.5Z" fill="#f2f5f1"/><path d="M817.0 433.1C818.3 430.4 827.1 430.4 828.4 433.1C829.7 435.8 829.7 453.3 828.4 456.0C827.1 458.7 818.3 458.7 817.0 456.0C815.7 453.3 815.7 435.8 817.0 433.1Z" fill="#f2f5f1"/><path d="M994.2 448.3C997.5 444.1 1018.1 441.5 1022.8 442.6C1027.5 443.7 1032.6 454.1 1034.2 457.9C1035.8 461.7 1037.9 472.1 1036.1 475.0C1034.3 477.9 1023.9 482.2 1019.0 482.6C1014.1 483.0 997.1 482.8 994.2 478.8C991.3 474.8 990.9 452.5 994.2 448.3Z" fill="#f2f5f1"/><path d="M1099.0 457.9C1102.8 455.4 1126.3 455.1 1131.4 454.0C1136.5 452.9 1139.9 448.5 1142.8 448.3C1145.7 448.1 1152.4 450.7 1156.2 452.1C1160.0 453.5 1169.9 459.1 1175.2 460.7C1180.5 462.3 1196.1 464.4 1201.9 465.5C1207.7 466.6 1219.0 468.8 1224.8 470.2C1230.6 471.6 1245.2 477.0 1251.4 477.9C1257.6 478.8 1275.2 476.2 1278.1 477.9C1281.0 479.6 1279.3 489.9 1276.2 492.2C1273.1 494.5 1258.7 498.6 1251.4 497.9C1244.1 497.2 1222.2 487.1 1213.3 486.4C1204.4 485.7 1183.0 493.1 1175.2 492.2C1167.4 491.3 1153.3 479.9 1146.6 478.8C1139.9 477.7 1123.7 483.0 1118.1 482.6C1112.5 482.2 1101.2 477.9 1099.0 475.0C1096.8 472.1 1095.2 460.3 1099.0 457.9Z" fill="#f2f5f1"/><path d="M1255.2 168.4C1259.6 164.4 1291.9 161.5 1297.2 164.6C1302.5 167.7 1305.4 191.1 1301.0 195.1C1296.6 199.1 1264.4 202.0 1259.1 198.9C1253.8 195.8 1250.8 172.4 1255.2 168.4Z" fill="#f2f5f1"/><path d="M1384.8 263.7C1388.6 261.5 1409.0 266.9 1413.4 271.3C1417.8 275.7 1424.9 297.4 1422.9 301.8C1420.9 306.2 1401.2 310.7 1396.3 309.4C1391.4 308.1 1382.3 295.7 1381.0 290.4C1379.7 285.1 1381.0 265.9 1384.8 263.7Z" fill="#f2f5f1"/><path d="M1110.4 229.4C1112.6 226.3 1130.2 230.1 1133.3 233.2C1136.4 236.3 1139.3 253.0 1137.1 256.1C1134.9 259.2 1117.3 263.0 1114.2 259.9C1111.1 256.8 1108.2 232.5 1110.4 229.4Z" fill="#f2f5f1"/><path d="M1161.9 219.9C1163.9 218.1 1178.9 221.3 1180.9 223.7C1182.9 226.1 1181.0 239.0 1179.0 240.8C1177.0 242.6 1165.8 241.3 1163.8 238.9C1161.8 236.5 1159.9 221.7 1161.9 219.9Z" fill="#f2f5f1"/><path d="M1392.4 168.4C1395.5 165.3 1418.9 161.5 1422.9 164.6C1426.9 167.7 1428.5 190.2 1426.7 195.1C1424.9 200.0 1411.2 206.9 1407.7 206.5C1404.2 206.1 1398.1 195.7 1396.3 191.3C1394.5 186.9 1389.3 171.5 1392.4 168.4Z" fill="#f2f5f1"/><path d="M1036.1 179.9C1040.1 177.7 1065.6 178.7 1068.5 181.8C1071.4 184.9 1064.0 203.2 1060.9 206.5C1057.8 209.8 1044.9 211.1 1041.8 210.4C1038.7 209.7 1034.9 204.4 1034.2 200.8C1033.5 197.2 1032.1 182.1 1036.1 179.9Z" fill="#f2f5f1"/><path d="M1034.2 229.4C1036.4 227.2 1051.3 227.2 1053.3 229.4C1055.3 231.6 1052.7 244.5 1051.4 248.5C1050.1 252.5 1043.8 263.7 1041.8 263.7C1039.8 263.7 1035.1 252.5 1034.2 248.5C1033.3 244.5 1032.0 231.6 1034.2 229.4Z" fill="#f2f5f1"/><path d="M1060.9 237.0C1063.6 234.3 1087.8 237.2 1091.4 240.8C1095.0 244.4 1094.1 264.8 1091.4 267.5C1088.7 270.2 1072.1 267.3 1068.5 263.7C1064.9 260.1 1058.2 239.7 1060.9 237.0Z" fill="#f2f5f1"/><path d="M1442.0 157.0C1444.7 152.6 1462.7 154.8 1464.9 157.0C1467.1 159.2 1459.8 171.7 1461.1 176.1C1462.4 180.5 1475.9 190.7 1476.3 195.1C1476.7 199.5 1468.0 212.4 1464.9 214.2C1461.8 216.0 1452.3 212.6 1449.6 210.4C1446.9 208.2 1442.9 201.3 1442.0 195.1C1441.1 188.9 1439.3 161.4 1442.0 157.0Z" fill="#f2f5f1"/><path d="M1504.9 160.8C1506.2 157.2 1516.2 161.0 1518.2 164.6C1520.2 168.2 1523.3 187.7 1522.0 191.3C1520.7 194.9 1508.8 198.7 1506.8 195.1C1504.8 191.5 1503.6 164.4 1504.9 160.8Z" fill="#f2f5f1"/><path d="M1564.0 204.6C1565.8 200.2 1582.6 193.3 1586.8 195.1C1591.0 196.9 1600.2 215.0 1600.2 219.9C1600.2 224.8 1590.1 235.4 1586.8 237.0C1583.5 238.6 1574.3 237.0 1571.6 233.2C1568.9 229.4 1562.2 209.0 1564.0 204.6Z" fill="#f2f5f1"/><path d="M1550.6 246.6C1553.4 243.7 1571.6 237.6 1575.4 238.9C1579.2 240.2 1583.9 254.2 1583.0 258.0C1582.1 261.8 1571.1 268.6 1567.8 271.3C1564.5 274.0 1556.3 281.8 1554.4 280.9C1552.5 280.0 1552.0 267.7 1551.6 263.7C1551.2 259.7 1547.8 249.5 1550.6 246.6Z" fill="#f2f5f1"/><path d="M1613.5 181.8C1615.7 179.8 1628.3 177.3 1632.5 178.0C1636.7 178.7 1647.5 185.5 1649.7 187.5C1651.9 189.5 1652.3 193.9 1651.6 195.1C1650.9 196.3 1646.5 198.4 1644.0 198.0C1641.5 197.6 1633.5 190.5 1630.6 191.3C1627.7 192.1 1621.2 204.2 1619.2 204.6C1617.2 205.0 1614.2 197.8 1613.5 195.1C1612.8 192.4 1611.3 183.8 1613.5 181.8Z" fill="#f2f5f1"/><path d="M1328.4 342.5C1330.0 340.2 1341.0 337.6 1346.3 337.0C1351.6 336.4 1371.1 335.1 1374.0 337.7C1376.9 340.3 1371.9 355.6 1371.2 359.1C1370.5 362.6 1368.1 365.0 1368.4 367.4C1368.7 369.8 1373.2 376.9 1374.0 379.8C1374.8 382.7 1375.9 389.9 1375.4 392.3C1374.9 394.7 1371.9 400.3 1369.8 400.6C1367.7 400.9 1360.8 398.9 1357.4 395.0C1354.0 391.1 1343.7 371.9 1340.8 367.4C1337.9 362.9 1333.9 359.2 1332.5 356.3C1331.1 353.4 1326.8 344.8 1328.4 342.5Z" fill="#f2f5f1"/><path d="M1298.0 310.7C1300.1 308.4 1312.4 304.2 1314.5 306.6C1316.6 309.0 1317.0 328.0 1315.9 331.5C1314.8 335.0 1307.2 337.7 1304.9 337.0C1302.6 336.3 1297.4 329.0 1296.6 325.9C1295.8 322.8 1295.9 313.0 1298.0 310.7Z" fill="#f2f5f1"/><path d="M1357.4 302.4C1360.3 300.5 1379.5 298.1 1385.0 298.3C1390.5 298.5 1402.9 302.2 1404.4 303.8C1405.9 305.4 1400.1 310.2 1397.5 312.1C1394.9 314.0 1385.4 319.0 1382.3 320.4C1379.2 321.8 1373.8 325.1 1371.2 324.5C1368.6 323.9 1361.8 317.5 1360.2 314.9C1358.6 312.3 1354.5 304.3 1357.4 302.4Z" fill="#f2f5f1"/><path d="M756.0 178.0C757.8 179.7 758.6 183.0 759.8 187.5C761.0 192.0 761.3 197.8 762.7 202.7C764.1 207.6 765.1 210.7 767.4 214.2C769.7 217.7 772.3 220.0 775.1 221.8C777.9 223.6 775.7 223.7 782.7 224.1C789.7 224.5 806.2 224.7 813.2 224.1C820.2 223.5 818.2 222.6 820.8 220.8C823.4 219.0 825.4 217.2 827.5 214.2C829.6 211.2 830.9 208.4 832.2 204.6C833.5 200.8 834.0 197.4 834.5 193.2C835.0 189.0 835.5 184.9 835.1 181.8C834.7 178.7 832.9 177.9 832.2 176.1C831.5 174.3 832.3 174.0 831.3 172.2C830.3 170.4 827.9 168.4 826.5 166.5C825.1 164.6 824.2 163.8 823.6 161.8C823.0 159.8 814.8 156.7 823.1 155.5C831.4 154.3 860.1 154.3 868.8 155.5C877.5 156.7 868.6 159.4 870.3 161.8C872.0 164.2 875.2 165.4 878.0 168.4C880.8 171.4 882.1 174.2 885.6 178.0C889.1 181.8 893.2 185.2 897.0 189.4C900.8 193.6 903.3 196.6 906.5 200.8C909.7 205.0 912.1 208.5 914.2 212.3C916.3 216.2 917.1 218.8 918.0 221.8C918.9 224.8 917.9 226.4 918.9 228.5C919.9 230.6 921.4 231.1 923.7 233.2C926.0 235.3 928.3 237.6 931.3 239.9C934.3 242.2 937.6 243.7 939.9 245.6C942.2 247.5 939.0 249.0 943.7 250.0C948.4 251.0 958.4 250.9 965.6 251.3C972.8 251.7 979.5 251.8 982.8 252.3C986.1 252.8 982.0 253.8 983.7 254.2C985.4 254.6 990.6 255.6 992.3 254.6C994.0 253.6 992.3 250.3 993.2 248.5C994.1 246.7 994.0 245.6 997.0 244.7C1000.0 243.8 1004.7 243.4 1009.4 243.7C1014.1 244.0 1018.6 245.4 1022.8 246.6C1027.0 247.8 1029.9 249.0 1032.3 250.4C1034.7 251.8 1034.7 252.3 1036.1 254.2C1037.5 256.1 1038.2 258.0 1039.9 260.8C1041.6 263.6 1043.3 266.4 1045.6 269.4C1047.9 272.4 1050.4 275.1 1052.3 277.0C1054.2 278.9 1054.9 280.1 1056.1 279.9C1057.3 279.7 1058.1 277.1 1059.0 276.1C1059.9 275.1 1059.5 274.4 1060.9 274.2C1062.3 274.0 1065.4 273.7 1066.6 275.1C1067.8 276.5 1066.8 280.4 1067.5 281.8C1068.2 283.2 1069.7 283.8 1070.4 282.8C1071.1 281.8 1069.7 277.4 1071.4 276.1C1073.1 274.8 1076.2 275.3 1079.9 275.5C1083.6 275.7 1087.9 276.0 1091.4 277.0C1094.9 278.0 1095.9 279.1 1099.0 280.9C1102.1 282.7 1105.0 285.2 1108.5 286.6C1112.0 288.0 1114.6 287.1 1118.1 288.5C1121.6 289.9 1125.5 292.6 1127.6 294.2C1129.7 295.8 1127.8 297.1 1129.5 297.1C1131.2 297.1 1134.0 293.9 1137.1 294.2C1140.2 294.5 1143.4 297.4 1146.6 299.0C1149.8 300.6 1150.8 302.6 1154.3 302.8C1157.8 303.0 1162.2 299.9 1165.7 299.9C1169.2 299.9 1172.0 302.3 1173.3 302.8C1174.6 303.3 1172.6 302.6 1172.6 302.6C1172.6 302.6 1179.4 305.8 1179.4 305.8C1179.4 305.8 1179.7 311.3 1179.7 311.3C1179.7 311.3 1177.8 313.7 1177.8 313.7C1177.8 313.7 1177.0 320.0 1177.0 320.0C1177.0 320.0 1173.8 323.2 1173.8 323.2C1173.8 323.2 1171.5 327.9 1171.5 327.9C1171.5 327.9 1171.8 329.5 1171.8 329.5C1171.8 329.5 1185.3 333.8 1185.3 333.8C1185.3 333.8 1185.7 339.0 1185.7 339.0C1185.7 339.0 1188.0 344.5 1188.0 344.5C1188.0 344.5 1189.6 346.9 1189.6 346.9C1189.6 346.9 1204.2 352.4 1204.2 352.4C1204.2 352.4 1224.8 359.1 1224.8 359.1C1224.8 359.1 1218.8 351.2 1218.8 351.2C1218.8 351.2 1207.4 346.5 1207.4 346.5C1207.4 346.5 1209.4 341.3 1209.4 341.3C1209.4 341.3 1214.5 339.4 1214.5 339.4C1214.5 339.4 1215.3 337.4 1215.3 337.4C1215.3 337.4 1218.1 334.2 1218.1 334.2C1218.1 334.2 1220.8 332.7 1220.8 332.7C1220.8 332.7 1222.4 326.3 1222.4 326.3C1222.4 326.3 1227.1 327.1 1227.1 327.1C1227.1 327.1 1226.4 334.2 1226.4 334.2C1226.4 334.2 1230.3 336.6 1230.3 336.6C1230.3 336.6 1232.7 330.3 1232.7 330.3C1232.7 330.3 1236.6 331.1 1236.6 331.1C1236.6 331.1 1234.6 337.4 1234.6 337.4C1234.6 337.4 1283.2 356.4 1283.2 356.4C1283.2 356.4 1311.2 366.5 1317.3 369.5C1323.4 372.5 1316.1 371.3 1316.6 372.9C1317.1 374.5 1318.7 376.9 1320.1 378.4C1321.5 379.9 1322.8 378.9 1324.2 381.2C1325.6 383.5 1326.3 388.1 1327.7 390.9C1329.1 393.7 1329.9 394.6 1331.8 396.4C1333.7 398.2 1335.6 398.6 1338.0 400.6C1340.4 402.6 1342.0 405.5 1345.0 407.5C1348.0 409.5 1351.3 410.3 1354.6 411.6C1357.9 412.9 1360.9 413.4 1362.9 414.4C1364.9 415.4 1364.7 417.6 1365.7 417.1C1366.7 416.6 1367.4 413.4 1368.4 411.6C1369.4 409.8 1370.9 409.5 1371.2 407.5C1371.5 405.5 1369.0 403.4 1369.8 400.6C1370.6 397.8 1374.9 394.8 1375.4 392.3C1375.9 389.8 1372.9 389.0 1372.6 386.7C1372.3 384.4 1374.5 382.3 1374.0 379.8C1373.5 377.3 1370.8 375.2 1369.8 372.9C1368.8 370.6 1368.1 369.9 1368.4 367.4C1368.7 364.9 1370.2 362.1 1371.2 359.1C1372.2 356.1 1373.4 354.9 1374.0 350.8C1374.6 346.7 1375.2 340.3 1374.7 337.0C1374.2 333.7 1373.4 333.3 1371.2 332.8C1369.0 332.3 1365.9 333.9 1362.9 334.2C1359.9 334.5 1356.6 334.7 1354.6 334.2C1352.6 333.7 1353.7 332.0 1351.9 331.5C1350.1 331.0 1347.8 331.3 1345.0 331.5C1342.2 331.7 1338.5 333.3 1336.7 332.8C1334.9 332.3 1334.5 330.2 1335.3 328.7C1336.1 327.2 1339.5 326.0 1340.8 324.5C1342.1 323.0 1340.2 321.7 1342.2 320.4C1344.2 319.1 1349.1 318.9 1351.9 317.6C1354.7 316.3 1355.9 314.0 1357.4 313.5C1358.9 313.0 1358.7 313.9 1360.2 314.9C1361.7 315.9 1363.7 317.2 1365.7 319.0C1367.7 320.8 1369.4 323.7 1371.2 324.5C1373.0 325.3 1373.4 324.0 1375.4 323.2C1377.4 322.4 1379.8 321.4 1382.3 320.4C1384.8 319.4 1386.4 319.1 1389.2 317.6C1392.0 316.1 1394.7 314.1 1397.5 312.1C1400.3 310.1 1401.9 308.1 1404.4 306.6C1406.9 305.1 1408.4 303.5 1411.3 303.8C1414.2 304.1 1416.1 306.3 1420.0 308.0C1423.9 309.7 1428.5 311.2 1432.5 313.2C1436.5 315.2 1438.2 318.3 1442.0 319.0C1445.8 319.7 1449.2 317.8 1453.4 317.1C1457.6 316.4 1461.4 316.3 1464.9 315.2C1468.4 314.1 1470.8 313.4 1472.5 311.3C1474.2 309.2 1473.0 306.1 1474.4 303.7C1475.8 301.3 1477.7 299.7 1480.1 298.0C1482.5 296.3 1486.0 295.9 1487.7 294.2C1489.4 292.5 1487.8 289.9 1489.6 288.5C1491.4 287.1 1495.4 288.0 1497.3 286.6C1499.2 285.2 1500.1 283.0 1500.1 280.9C1500.1 278.8 1497.6 277.6 1497.3 275.1C1497.0 272.6 1496.8 270.3 1498.2 267.5C1499.6 264.7 1501.2 262.2 1504.9 259.9C1508.6 257.6 1513.3 256.0 1518.2 255.1C1523.1 254.2 1527.1 254.4 1531.6 255.1C1536.1 255.8 1539.7 257.3 1543.0 258.9C1546.3 260.5 1548.0 261.1 1549.7 263.7C1551.4 266.3 1551.6 269.9 1552.5 273.2C1553.4 276.5 1552.7 281.1 1554.4 281.8C1556.1 282.5 1559.5 278.9 1562.0 277.0C1564.5 275.1 1565.2 273.0 1567.8 271.3C1570.4 269.6 1574.6 268.9 1576.3 267.5C1578.0 266.1 1576.1 265.4 1577.3 263.7C1578.5 262.0 1580.6 259.6 1583.0 258.0C1585.4 256.4 1588.5 256.3 1590.6 255.1C1592.7 253.9 1594.1 252.5 1594.4 251.3C1594.7 250.1 1593.9 249.4 1592.5 248.5C1591.1 247.6 1588.4 248.0 1586.8 246.6C1585.2 245.2 1584.2 243.3 1584.0 240.8C1583.8 238.3 1584.3 235.6 1585.9 233.2C1587.5 230.8 1590.2 228.4 1592.5 227.5C1594.8 226.6 1596.8 229.5 1598.2 228.5C1599.6 227.5 1599.1 224.3 1600.2 221.8C1601.3 219.3 1602.3 216.7 1604.0 215.1C1605.7 213.5 1607.8 213.0 1609.7 213.2C1611.6 213.4 1613.2 216.6 1614.4 216.1C1615.6 215.6 1615.5 212.5 1616.4 210.4C1617.3 208.3 1617.6 207.4 1619.2 204.6C1620.8 201.8 1622.8 197.5 1624.9 195.1C1627.0 192.7 1628.5 191.6 1630.6 191.3C1632.7 191.0 1633.9 192.0 1636.4 193.2C1638.9 194.4 1642.3 196.3 1644.0 198.0C1645.7 199.7 1643.5 202.2 1645.9 202.7C1648.3 203.2 1656.3 202.2 1657.3 200.8C1658.3 199.4 1652.8 197.5 1651.6 195.1C1650.4 192.7 1650.4 190.6 1650.7 187.5C1651.0 184.4 1651.9 180.6 1653.5 178.0C1655.1 175.4 1656.0 174.6 1659.2 173.2C1662.4 171.8 1665.8 171.7 1670.7 170.3C1675.6 168.9 1678.9 167.9 1685.9 165.6C1692.9 163.3 1703.9 159.9 1708.8 158.0C1713.7 156.1 1704.6 157.0 1712.6 155.5C1720.6 154.0 1749.2 149.9 1752.6 150C1756.0 150.1 1753.0 155.9 1753.2 157C1753.4 158.1 1754.8 162.4 1755.5 163.2C1756.2 164.0 1760.4 166.3 1761.4 166.8C1762.4 167.3 1766.4 168.6 1767.4 169.1C1768.4 169.6 1772.3 172.6 1773.3 173.3C1774.3 174.0 1778.3 177.3 1779.2 178C1780.1 178.7 1783.4 180.9 1784.5 181.6C1785.6 182.3 1791.4 176.1 1792 186C1792.6 195.9 1792.4 271.8 1792 300C1791.6 328.2 1789.6 482.5 1786.9 524.0C1784.2 565.5 1781.2 526.0 1777.4 526.2C1773.6 526.4 1770.8 525.1 1765.9 525.3C1761.0 525.5 1755.9 525.6 1750.7 527.2C1745.5 528.8 1742.3 531.3 1737.4 533.9C1732.5 536.5 1727.7 538.9 1724.0 541.5C1720.3 544.1 1720.1 547.2 1717.3 548.2C1714.5 549.2 1713.9 547.7 1708.8 547.2C1703.7 546.7 1696.7 545.8 1689.7 545.3C1682.7 544.8 1677.0 544.1 1670.7 544.3C1664.4 544.5 1660.3 545.6 1655.4 546.3C1650.5 547.0 1648.2 548.2 1644.0 548.2C1639.8 548.2 1636.3 547.2 1632.5 546.3C1628.7 545.4 1626.0 544.6 1623.0 543.4C1620.0 542.2 1618.5 539.6 1616.4 539.6C1614.3 539.6 1613.2 542.2 1611.6 543.4C1610.0 544.6 1609.9 547.0 1607.8 546.3C1605.7 545.6 1603.4 542.2 1600.2 539.6C1597.0 537.0 1594.4 534.1 1590.6 532.0C1586.8 529.9 1582.3 529.5 1579.2 528.1C1576.1 526.7 1575.6 524.1 1573.5 524.3C1571.4 524.5 1570.6 529.4 1567.8 529.1C1565.0 528.8 1561.7 524.7 1558.2 522.4C1554.7 520.1 1552.2 518.8 1548.7 516.7C1545.2 514.6 1542.3 513.1 1539.2 511.0C1536.1 508.9 1534.2 508.2 1531.6 505.5C1529.0 502.8 1526.7 499.9 1524.9 496.0C1523.1 492.1 1523.2 487.0 1522.0 484.5C1520.8 482.0 1521.0 484.7 1518.2 482.6C1515.4 480.5 1510.8 477.1 1506.8 473.1C1502.8 469.1 1498.9 463.0 1496.3 460.7C1493.7 458.4 1495.5 463.1 1492.5 460.7C1489.5 458.3 1484.1 451.4 1480.1 447.4C1476.1 443.4 1473.4 439.5 1470.6 438.8C1467.8 438.1 1468.1 442.4 1464.9 443.6C1461.7 444.8 1457.6 444.5 1453.4 445.5C1449.2 446.5 1445.5 447.4 1442.0 449.3C1438.5 451.2 1436.5 453.0 1434.4 456.0C1432.3 459.0 1432.7 462.0 1430.6 465.5C1428.5 469.0 1426.1 472.2 1422.9 475.0C1419.7 477.8 1416.9 478.6 1413.4 480.7C1409.9 482.8 1407.8 484.3 1403.9 486.4C1400.1 488.5 1396.6 491.0 1392.4 492.2C1388.2 493.4 1385.2 493.1 1381.0 493.1C1376.8 493.1 1375.9 493.0 1369.6 492.2C1363.3 491.4 1353.9 489.8 1346.7 488.7C1339.5 487.6 1334.3 487.2 1330.5 486.4C1326.7 485.6 1331.9 484.5 1325.8 484.5C1319.7 484.5 1303.5 486.4 1297.2 486.4C1290.9 486.4 1293.3 485.5 1291.5 484.5C1289.7 483.5 1289.7 481.9 1287.6 480.7C1285.5 479.5 1284.2 478.6 1280.0 477.9C1275.8 477.2 1270.0 476.9 1264.8 476.9C1259.6 476.9 1256.6 478.1 1251.4 477.9C1246.2 477.7 1241.1 477.4 1236.2 476.0C1231.3 474.6 1229.0 472.1 1224.8 470.2C1220.6 468.3 1217.5 466.4 1213.3 465.5C1209.1 464.6 1206.4 465.8 1201.9 465.5C1197.4 465.2 1193.5 464.5 1188.6 463.6C1183.7 462.7 1180.1 462.1 1175.2 460.7C1170.3 459.3 1165.4 457.6 1161.9 456.0C1158.4 454.4 1159.7 453.5 1156.2 452.1C1152.7 450.7 1147.3 448.0 1142.8 448.3C1138.3 448.6 1137.3 452.6 1131.4 454.0C1125.5 455.4 1116.3 455.3 1110.4 456.0C1104.5 456.7 1103.9 457.6 1099.0 457.9C1094.1 458.2 1089.3 457.9 1083.7 457.9C1078.1 457.9 1074.1 458.2 1068.5 457.9C1062.9 457.6 1058.2 457.1 1053.3 456.0C1048.4 454.9 1045.3 453.9 1041.8 452.1C1038.3 450.3 1036.5 449.0 1034.2 446.4C1031.9 443.8 1030.8 440.9 1029.4 437.8C1028.0 434.7 1027.5 431.9 1026.6 429.3C1025.7 426.7 1024.5 425.5 1024.7 423.6C1024.9 421.7 1027.3 420.2 1027.5 418.8C1027.7 417.4 1026.6 415.7 1025.6 415.9C1024.6 416.1 1023.4 418.3 1021.8 419.7C1020.2 421.1 1020.4 423.1 1017.1 423.6C1013.8 424.1 1008.2 423.7 1003.7 422.6C999.2 421.5 996.5 419.5 992.3 417.8C988.1 416.1 985.7 414.8 980.8 413.1C975.9 411.4 970.1 409.7 965.6 408.3C961.1 406.9 959.6 406.2 956.1 405.5C952.6 404.8 950.4 405.4 946.5 404.5C942.6 403.6 939.6 402.6 935.1 400.7C930.6 398.8 926.7 395.6 921.8 394.0C916.9 392.4 912.6 393.0 908.4 392.1C904.2 391.2 902.4 391.0 898.9 389.3C895.4 387.6 892.2 385.2 889.4 382.6C886.6 380.0 885.8 377.8 883.7 375.0C881.6 372.2 881.2 369.4 878.0 367.3C874.8 365.2 870.7 365.1 866.5 363.5C862.3 361.9 858.9 360.2 855.1 358.8C851.3 357.4 849.1 355.9 845.6 355.9C842.1 355.9 839.9 358.6 836.0 358.8C832.1 359.0 828.4 358.1 824.6 356.9C820.8 355.7 817.2 354.0 815.1 352.1C813.0 350.2 815.0 347.8 813.2 346.4C811.4 345.0 809.0 344.5 805.5 344.5C802.0 344.5 798.6 345.4 794.1 346.4C789.6 347.4 783.6 350.4 780.8 350.2C778.0 350.0 779.9 345.7 778.9 345.4C777.9 345.1 779.6 347.3 775.1 348.3C770.6 349.3 758.7 382.3 754.1 351.1C749.5 319.9 750.0 178.0 750 178C750.0 178.0 754.2 176.3 756.0 178.0Z" fill="#d4dadc"/><path d="M1592.5 312.3C1593.3 309.6 1597.5 306.9 1600.2 303.7C1602.9 300.5 1604.2 296.9 1605.9 296.1C1607.6 295.3 1606.8 299.5 1608.7 299.9C1610.6 300.3 1612.0 296.9 1615.4 298.0C1618.8 299.1 1625.1 303.7 1625.9 305.6C1626.7 307.5 1622.1 307.9 1619.2 307.5C1616.3 307.1 1613.9 303.3 1611.6 303.7C1609.3 304.1 1609.7 307.5 1607.8 309.4C1605.9 311.3 1604.4 311.7 1602.1 313.2C1599.8 314.7 1598.2 317.3 1596.3 317.1C1594.4 316.9 1591.7 315.0 1592.5 312.3Z" fill="#f3f6f2"/><path d="M1649.3 281.8C1649.7 281.4 1651.1 281.4 1651.6 281.8C1652.1 282.2 1652.4 283.5 1652.0 283.9C1651.6 284.3 1650.2 284.3 1649.7 283.9C1649.2 283.5 1648.9 282.2 1649.3 281.8Z" fill="#f3f6f2"/><path d="M1681.7 387.4C1682.4 386.3 1684.4 385.6 1685.9 386.4C1687.4 387.2 1688.5 389.1 1689.3 391.2C1690.1 393.3 1690.2 395.7 1689.7 396.9C1689.2 398.1 1688.3 398.3 1686.9 397.3C1685.5 396.3 1683.5 394.1 1682.5 392.1C1681.5 390.1 1681.0 388.5 1681.7 387.4Z" fill="#f3f6f2"/><path d="M1638.3 470.2C1640.6 469.7 1645.7 468.4 1647.8 469.7C1649.9 471.0 1648.9 473.9 1648.7 476.9C1648.5 479.9 1648.1 481.8 1646.8 484.5C1645.5 487.2 1643.6 488.1 1642.1 490.2C1640.6 492.3 1640.2 495.4 1639.2 495.0C1638.2 494.6 1638.2 491.2 1637.3 488.3C1636.4 485.4 1634.5 483.2 1634.5 480.7C1634.5 478.2 1636.9 477.7 1637.3 476.0C1637.7 474.3 1636.2 473.3 1636.4 472.1C1636.6 470.9 1636.0 470.7 1638.3 470.2Z" fill="#f3f6f2"/><path d="M1373.4 440.3C1374.5 440.3 1377.0 441.2 1379.1 441.7C1381.2 442.2 1383.3 442.5 1384.1 443.0C1384.9 443.5 1384.3 444.1 1382.9 444.1C1381.5 444.1 1379.0 443.5 1377.2 443.0C1375.4 442.5 1374.6 442.0 1373.8 441.5C1373.0 441.0 1372.3 440.3 1373.4 440.3Z" fill="#f3f6f2"/><path d="M828 688C824.7 686.1 828.4 683.3 830 681C831.6 678.7 831.6 679.8 834 679.5C836.4 679.2 836.7 677.7 839 680C841.3 682.3 845.4 685.9 842.5 688C839.6 690.1 831.3 689.9 828 688Z" fill="#d4dadc"/><path d="M770.3 545.3C773.4 543.0 775.5 543.1 780.8 539.6C786.1 536.1 784.2 534.8 790.3 532.0C796.4 529.2 796.5 530.1 803.6 529.1C810.7 528.1 812.2 527.6 817.0 528.1C821.8 528.6 820.7 528.4 821.7 531.0C822.7 533.6 823.1 534.9 820.8 537.7C818.5 540.5 817.3 539.7 813.2 541.5C809.1 543.3 810.6 541.8 805.5 544.3C800.4 546.8 799.7 548.4 794.1 551.0C788.5 553.6 790.2 553.6 784.6 553.9C779.0 554.2 777.2 553.5 773.1 552.0C769.0 550.5 770.0 550.0 769.3 548.2C768.6 546.4 767.2 547.6 770.3 545.3Z" fill="#d4dadc"/><path d="M825.0 194.2C826.0 191.4 829.1 189.7 831.3 189.4C833.5 189.1 833.0 189.9 833.2 193.2C833.4 196.5 833.1 198.8 832.2 201.8C831.3 204.8 831.2 205.1 829.9 204.6C828.6 204.1 828.8 202.7 827.5 199.9C826.2 197.1 824.0 197.0 825.0 194.2Z" fill="#d4dadc"/><path d="M1497.3 195.1C1498.8 193.2 1500.4 193.2 1504.9 192.3C1509.4 191.4 1511.7 190.4 1514.0 191.7C1516.3 193.0 1515.4 194.8 1513.5 197.0C1511.6 199.2 1510.6 199.3 1506.8 199.9C1503.0 200.5 1501.7 200.6 1499.2 199.3C1496.7 198.0 1495.8 197.0 1497.3 195.1Z" fill="#d4dadc"/><path d="M1171.4 628.2C1173.0 627.0 1175.1 626.3 1177.1 627.6C1179.1 628.9 1179.7 631.1 1179.0 633.0C1178.3 634.9 1176.4 635.2 1174.3 634.9C1172.2 634.6 1171.8 633.8 1171.0 632.0C1170.2 630.2 1169.8 629.4 1171.4 628.2Z" fill="#d4dadc"/><path d="M1609.7 546.3C1609.1 550.0 1609.5 552.6 1607.8 558.6C1606.1 564.6 1609.2 561.7 1604.0 566.3C1598.8 570.9 1597.5 568.8 1590.6 573.9C1583.7 579.0 1585.7 576.6 1581.1 583.4C1576.5 590.2 1578.8 589.8 1575.4 596.7C1572.0 603.6 1570.8 600.0 1569.7 606.3C1568.6 612.6 1572.2 612.0 1571.6 617.7C1571.0 623.4 1574.7 621.6 1567.8 625.3C1560.9 629.0 1563.6 628.4 1548.7 630.1C1533.8 631.8 1530.8 633.0 1518.2 631.0C1505.6 629.0 1513.1 628.3 1506.8 623.4C1500.5 618.5 1503.6 617.4 1497.3 614.8C1491.0 612.2 1493.8 609.9 1485.8 614.8C1477.8 619.7 1476.3 622.1 1470.6 631.0C1464.9 639.9 1472.5 637.0 1466.8 644.4C1461.1 651.8 1458.9 651.2 1451.5 655.8C1444.1 660.4 1444.8 658.5 1442.0 659.6" fill="none" stroke="#d6dbde" stroke-width="1.5"/><path d="M1442.0 662.5C1436.3 665.6 1434.3 668.1 1422.9 673.0C1411.5 677.9 1411.3 674.2 1403.9 678.7C1396.5 683.2 1399.9 685.2 1398.2 688.0" fill="none" stroke="#d6dbde" stroke-width="1.5"/><path d="M983.7 254.2 L981.8 263.7" fill="none" stroke="#fafaf8" stroke-width="0.9"/><g fill="none" stroke="#e3e3e1" stroke-linecap="round" stroke-linejoin="round"><path d="M1362.0 246.6C1371.7 244.3 1377.3 244.1 1394.4 238.9C1411.5 233.7 1411.7 232.2 1419.1 229.4" stroke-width="2.6"/><path d="M1407.7 195.1C1411.1 202.0 1413.4 203.1 1419.1 218.0C1424.8 232.9 1424.4 236.7 1426.7 244.7" stroke-width="2.6"/><path d="M1447.7 240.8C1457.4 238.0 1462.9 235.3 1480.1 231.3C1497.3 227.3 1494.6 224.1 1504.9 227.5C1515.2 230.9 1513.3 235.8 1514.4 242.7C1515.5 249.6 1524.7 246.4 1508.7 250.4C1492.7 254.4 1475.4 254.4 1461.1 256.1" stroke-width="2.6"/><path d="M1503.0 214.2 L1504.9 227.5" stroke-width="2.6"/><path d="M797.9 382.6C797.6 393.2 804.4 406.7 797.0 417.8C789.6 428.9 780.3 419.1 773.1 419.7" stroke-width="2.6"/><path d="M824.6 539.6C836.0 541.3 850.1 547.0 862.7 545.3C875.3 543.6 866.5 540.2 866.5 533.9C866.5 527.6 863.8 527.2 862.7 524.3" stroke-width="2.6"/><path d="M1045.6 549.1C1055.9 550.0 1063.9 550.0 1079.9 552.0C1095.9 554.0 1093.3 554.7 1099.0 555.8" stroke-width="2.6"/><path d="M1052.3 573.9 L1099.0 576.7" stroke-width="2.6"/><path d="M1099.0 625.3C1107.6 628.2 1113.3 632.6 1127.6 634.9C1141.9 637.2 1140.9 633.6 1146.6 633.0" stroke-width="2.6"/><path d="M1099.0 671.1C1107.6 673.4 1105.9 678.1 1127.6 678.7C1149.3 679.3 1151.4 671.9 1171.4 673.0C1191.4 674.1 1184.0 677.6 1194.3 682.5C1204.6 687.4 1202.3 687.2 1205.7 689.2" stroke-width="2.6"/><path d="M1442.0 655.8C1448.9 658.1 1450.6 657.1 1464.9 663.4C1479.2 669.7 1477.6 669.1 1489.6 676.8C1501.6 684.5 1500.3 685.5 1504.9 689.2" stroke-width="2.6"/><path d="M1442.0 682.5C1447.7 681.4 1446.8 680.4 1461.1 678.7C1475.4 677.0 1481.0 677.4 1489.6 676.8" stroke-width="2.6"/><path d="M1167.6 156.0C1168.7 164.9 1173.1 171.0 1171.4 185.6C1169.7 200.2 1167.0 192.0 1161.9 204.6C1156.8 217.2 1158.9 214.9 1154.3 227.5C1149.7 240.1 1148.9 240.9 1146.6 246.6" stroke-width="2.7"/><path d="M1192.4 156.0C1193.0 160.9 1189.7 161.6 1194.3 172.2C1198.9 182.8 1200.8 178.7 1207.6 191.3C1214.4 203.9 1210.8 199.9 1217.1 214.2C1223.4 228.5 1223.4 225.2 1228.6 238.9C1233.8 252.6 1230.9 251.3 1234.3 259.9C1237.7 268.5 1238.3 265.2 1240.0 267.5" stroke-width="2.7"/><path d="M1099.0 185.6C1100.7 189.6 1101.9 188.6 1104.7 198.9C1107.5 209.2 1107.4 213.6 1108.5 219.9" stroke-width="2.7"/><path d="M1299.1 157.0C1300.8 163.9 1301.4 168.5 1304.8 179.9C1308.2 191.3 1305.4 183.7 1310.5 195.1C1315.6 206.5 1318.5 211.1 1321.9 218.0" stroke-width="2.7"/><path d="M1257.2 200.8C1266.9 199.7 1273.5 198.7 1289.5 197.0C1305.5 195.3 1299.0 197.4 1310.5 195.1C1322.0 192.8 1319.1 195.1 1327.7 189.4C1336.3 183.7 1335.1 183.5 1339.1 176.1C1343.1 168.7 1340.4 168.0 1341.0 164.6" stroke-width="2.7"/><path d="M1354.3 266.6C1356.6 259.4 1355.7 256.7 1362.0 242.7C1368.3 228.7 1368.5 234.2 1375.3 219.9C1382.1 205.6 1382.5 208.8 1384.8 195.1C1387.1 181.4 1383.5 180.4 1382.9 174.1" stroke-width="2.7"/><path d="M1442.0 242.7C1446.6 247.3 1448.6 247.1 1457.2 258.0C1465.8 268.9 1467.1 265.9 1470.6 279.0C1474.0 292.1 1473.9 292.7 1468.7 301.8C1463.5 310.9 1458.0 307.1 1453.4 309.4" stroke-width="2.7"/><path d="M756.0 433.1 L771.2 431.2" stroke-width="2.7"/><path d="M1280.0 324.5C1284.1 326.6 1286.3 325.9 1293.8 331.5C1301.3 337.1 1301.6 339.7 1304.9 343.2" stroke-width="2.7"/><path d="M1331.1 331.5C1333.2 335.6 1334.2 336.2 1338.0 345.3C1341.8 354.4 1337.8 356.1 1343.6 361.9C1349.4 367.7 1352.4 360.5 1357.4 364.6C1362.4 368.7 1360.2 368.2 1360.2 375.7C1360.2 383.2 1358.2 385.4 1357.4 389.5" stroke-width="2.7"/><path d="M836.0 561.5C840.6 560.6 838.1 560.3 851.3 558.6C864.5 556.9 862.8 554.7 879.9 555.8C897.0 556.9 897.0 561.0 908.4 562.4C919.8 563.8 909.4 561.6 918.0 560.5C926.6 559.4 922.7 558.3 937.0 558.6C951.3 558.9 945.6 562.1 965.6 561.5C985.6 560.9 979.7 559.6 1003.7 556.7C1027.7 553.9 1033.0 553.4 1045.6 552.0" stroke-width="2.7"/><path d="M908.4 577.7C909.5 574.3 909.3 571.5 912.2 566.3C915.1 561.1 916.3 562.2 918.0 560.5" stroke-width="2.7"/><path d="M977.0 510.0 L977.0 556.7" stroke-width="2.7"/><path d="M908.4 667.2C937.0 667.3 946.5 666.9 1003.7 667.6C1060.9 668.3 1070.4 668.9 1099.0 669.5" stroke-width="2.7"/><path d="M1354.3 545.3C1352.0 552.2 1351.3 552.8 1346.7 568.2C1342.1 583.6 1342.5 581.9 1339.1 596.7C1335.7 611.6 1337.3 603.4 1335.3 617.7C1333.3 632.0 1333.0 630.7 1332.4 644.4C1331.8 658.1 1334.0 650.0 1333.4 663.4C1332.8 676.8 1331.4 681.5 1330.5 689.2" stroke-width="2.7"/><path d="M1407.7 510.0C1408.8 520.6 1409.8 522.1 1411.5 545.3C1413.2 568.5 1412.3 567.8 1413.4 587.2C1414.5 606.6 1406.7 602.1 1415.3 610.1C1423.9 618.1 1434.0 612.8 1442.0 613.9" stroke-width="2.7"/><path d="M1403.9 610.1C1398.2 614.7 1396.2 615.0 1384.8 625.3C1373.4 635.6 1375.5 635.2 1365.8 644.4C1356.1 653.5 1356.4 652.4 1352.4 655.8" stroke-width="2.7"/><path d="M1099.0 581.5C1104.7 584.4 1103.8 586.4 1118.1 591.0C1132.4 595.6 1133.5 592.1 1146.6 596.7C1159.7 601.3 1156.2 597.7 1161.9 606.3C1167.6 614.9 1161.7 613.9 1165.7 625.3C1169.7 636.7 1172.4 631.8 1175.2 644.4C1178.0 657.0 1180.9 653.8 1175.2 667.2C1169.5 680.6 1161.9 682.6 1156.2 689.2" stroke-width="2.7"/><path d="M1352.4 655.8C1347.8 659.8 1342.9 659.2 1337.2 669.2C1331.5 679.2 1334.5 683.2 1333.4 689.2" stroke-width="2.7"/><path d="M1442.0 612.0C1447.7 610.9 1446.8 612.2 1461.1 608.2C1475.4 604.2 1467.9 605.0 1489.6 598.7C1511.3 592.4 1520.3 590.7 1533.5 587.2" stroke-width="2.7"/><path d="M1594.4 594.8C1596.1 589.7 1595.0 586.0 1600.2 577.7C1605.4 569.4 1603.0 566.6 1611.6 567.2C1620.1 567.8 1623.6 575.9 1628.7 579.6" stroke-width="2.7"/><path d="M1672.6 547.2C1673.7 554.6 1671.3 561.1 1676.4 572.0C1681.5 582.9 1685.7 580.0 1689.7 583.4" stroke-width="2.7"/><path d="M1672.6 547.2C1683.5 549.5 1690.5 552.8 1708.8 554.8C1727.1 556.8 1723.8 549.9 1733.5 553.9C1743.2 557.9 1734.9 552.5 1741.2 568.2C1747.5 583.9 1747.1 583.4 1754.5 606.3C1761.9 629.2 1763.1 628.4 1765.9 644.4C1768.8 660.4 1764.6 655.0 1764.0 659.6" stroke-width="2.7"/><path d="M1685.9 614.8C1704.2 613.4 1716.6 613.8 1746.9 610.1C1777.2 606.4 1774.9 604.8 1786.9 602.5" stroke-width="2.7"/><path d="M1661.1 633.0C1664.0 639.3 1667.2 637.0 1670.7 653.9C1674.2 670.8 1672.0 678.6 1672.6 689.2" stroke-width="2.7"/><path d="M1689.7 630.1C1696.6 640.1 1695.4 654.0 1712.6 663.4C1729.8 672.8 1731.5 662.6 1746.9 661.5C1762.3 660.4 1758.9 660.2 1764.0 659.6" stroke-width="2.7"/><path d="M1727.8 663.4 L1735.4 689.2" stroke-width="2.7"/><path d="M1571.6 156.0C1570.5 162.0 1570.7 163.5 1567.8 176.1C1564.9 188.7 1563.7 191.4 1562.0 198.0" stroke-width="2.8"/><path d="M1583.0 156.0C1585.8 160.9 1584.5 165.6 1592.5 172.2C1600.5 178.8 1604.5 176.3 1609.7 178.0" stroke-width="2.8"/><path d="M982.8 451.2C984.2 457.2 985.5 460.6 987.5 471.2C989.5 481.8 989.4 474.1 989.4 486.4C989.4 498.7 988.1 504.5 987.5 512.2" stroke-width="2.8"/><path d="M1043.7 528.1C1044.3 534.4 1043.0 537.6 1045.6 549.1C1048.2 560.6 1052.0 560.0 1052.3 566.3C1052.6 572.6 1047.7 563.8 1046.6 570.1C1045.5 576.4 1047.4 573.5 1048.5 587.2C1049.6 600.9 1051.8 606.1 1050.4 615.8C1049.0 625.5 1045.1 605.3 1043.7 619.6C1042.3 633.9 1046.7 642.5 1045.6 663.4C1044.5 684.3 1041.6 681.5 1039.9 689.2" stroke-width="2.8"/><path d="M815.1 545.3C812.2 549.9 808.6 545.1 805.5 560.5C802.4 575.9 803.4 580.7 804.6 596.7C805.8 612.7 808.0 608.7 809.4 613.9" stroke-width="2.8"/><path d="M756.0 575.8C759.4 575.2 761.1 569.3 767.4 573.9C773.7 578.5 771.8 581.3 777.0 591.0C782.2 600.7 782.3 599.0 784.6 606.3C786.9 613.6 784.6 612.7 784.6 615.4" stroke-width="2.8"/><path d="M1442.0 546.3 L1482.0 545.3" stroke-width="2.8"/><path d="M1053.3 227.5C1052.7 233.8 1051.4 238.8 1051.4 248.5C1051.4 258.2 1049.3 255.3 1053.3 259.9C1057.3 264.5 1060.7 260.8 1064.7 263.7C1068.7 266.6 1056.3 265.7 1066.6 269.4C1076.9 273.1 1089.3 274.1 1099.0 276.1" stroke-width="3.0"/><path d="M1087.6 157.0C1089.3 162.7 1089.9 167.5 1093.3 176.1C1096.7 184.7 1097.3 182.8 1099.0 185.6" stroke-width="3.0"/><path d="M1377.2 174.1C1368.0 172.4 1364.4 172.4 1346.7 168.4C1329.0 164.4 1329.5 164.5 1318.1 160.8C1306.7 157.1 1311.4 157.4 1308.6 156.0" stroke-width="3.0"/><path d="M903.7 475.0C908.6 474.4 909.9 477.7 919.9 473.1C929.9 468.5 925.6 465.2 937.0 459.8C948.4 454.4 944.3 457.6 958.0 455.0C971.7 452.4 972.5 453.8 982.8 451.2C993.1 448.6 988.3 451.3 992.3 446.4C996.3 441.5 995.0 438.4 996.1 435.0" stroke-width="3.0"/><path d="M1286.9 343.9C1292.3 343.7 1297.4 344.8 1304.9 343.2C1312.4 341.6 1307.2 338.6 1311.8 338.4C1316.4 338.2 1317.6 341.3 1320.1 342.5" stroke-width="3.0"/><path d="M1291.5 512.2C1295.5 509.1 1293.9 506.6 1304.8 501.7C1315.7 496.8 1312.3 498.0 1327.7 496.0C1343.1 494.0 1339.1 494.4 1356.2 495.0C1373.3 495.6 1367.6 494.8 1384.8 497.9C1402.0 501.0 1399.1 501.2 1413.4 505.5C1427.7 509.8 1426.8 510.2 1432.5 512.2" stroke-width="3.0"/><path d="M756.0 566.3C759.4 566.0 753.1 566.5 767.4 565.3C781.7 564.1 783.0 563.5 803.6 562.4C824.2 561.3 825.1 560.3 836.0 561.5C846.9 562.7 829.5 564.3 839.8 566.3C850.1 568.3 855.4 567.1 870.3 568.2C885.2 569.3 878.0 567.2 889.4 570.1C900.8 573.0 897.0 572.6 908.4 577.7C919.8 582.8 913.2 582.6 927.5 587.2C941.8 591.8 941.8 588.9 956.1 592.9C970.4 596.9 963.7 595.4 975.1 600.6C986.5 605.8 979.9 605.0 994.2 610.1C1008.5 615.2 1005.6 616.0 1022.8 617.7C1040.0 619.4 1034.3 614.7 1051.4 615.8C1068.5 616.9 1065.6 618.1 1079.9 621.5C1094.2 624.9 1093.3 625.5 1099.0 627.2" stroke-width="3.0"/><path d="M756.0 518.6C757.1 524.9 756.9 525.3 759.8 539.6C762.6 553.9 763.8 558.3 765.5 566.3" stroke-width="3.0"/><path d="M1167.6 539.6C1169.9 545.3 1169.5 547.7 1175.2 558.6C1180.9 569.5 1184.4 567.2 1186.7 575.8C1189.0 584.4 1182.8 580.3 1182.8 587.2C1182.8 594.1 1185.0 587.3 1186.7 598.7C1188.4 610.1 1187.5 614.4 1188.6 625.3C1189.7 636.2 1185.4 632.6 1190.5 634.9C1195.6 637.2 1196.5 633.6 1205.7 633.0C1214.9 632.4 1213.0 631.9 1221.0 633.0C1229.0 634.1 1220.4 633.9 1232.4 636.8C1244.4 639.6 1243.9 638.5 1261.0 642.5C1278.1 646.5 1276.4 645.5 1289.5 650.1C1302.6 654.7 1300.2 655.4 1304.8 657.7" stroke-width="3.0"/><path d="M1611.6 640.6C1613.3 647.4 1613.3 648.8 1617.3 663.4C1621.3 678.0 1622.6 681.5 1624.9 689.2" stroke-width="3.0"/><path d="M1594.4 594.8C1609.3 589.1 1624.0 578.1 1644.0 575.8C1664.0 573.5 1651.4 578.1 1661.1 587.2C1670.8 596.4 1667.8 593.4 1676.4 606.3C1685.0 619.2 1685.7 623.0 1689.7 630.1" stroke-width="3.0"/><path d="M1594.4 594.8C1593.8 601.7 1590.8 604.0 1592.5 617.7C1594.2 631.4 1597.9 633.7 1600.2 640.6" stroke-width="3.0"/><path d="M1676.4 606.3C1680.4 599.4 1670.8 594.8 1689.7 583.4C1708.6 572.0 1716.4 575.1 1739.3 568.2C1762.2 561.3 1751.6 564.2 1765.9 560.5C1780.2 556.8 1780.6 557.2 1786.9 555.8" stroke-width="3.0"/><path d="M813.2 549.1C818.9 544.0 817.4 539.4 832.2 532.0C847.1 524.6 845.5 528.9 862.7 524.3C879.9 519.7 880.2 521.0 889.4 516.7C898.5 512.4 892.1 512.0 893.2 510.0" stroke-width="3.1"/><path d="M1262.9 216.1C1264.0 221.2 1265.6 217.8 1266.7 233.2C1267.8 248.6 1265.6 250.3 1266.7 267.5C1267.8 284.7 1270.5 280.1 1270.5 290.4C1270.5 300.7 1267.8 298.4 1266.7 301.8" stroke-width="3.2"/><path d="M756.0 368.3C761.7 367.4 760.8 365.1 775.1 365.4C789.4 365.7 786.5 369.6 803.6 369.3C820.7 369.0 819.0 365.7 832.2 364.5C845.4 363.3 838.4 362.5 847.5 365.4C856.6 368.2 857.6 366.3 862.7 374.0C867.8 381.7 864.6 380.3 864.6 391.2C864.6 402.1 862.7 402.2 862.7 410.2C862.7 418.2 864.0 415.5 864.6 417.8" stroke-width="3.2"/><path d="M1340.8 303.8C1339.1 307.9 1338.2 309.3 1335.3 317.6C1332.4 325.9 1334.0 324.0 1331.1 331.5C1328.2 339.0 1327.2 339.2 1325.6 342.5" stroke-width="3.2"/><path d="M1329.6 510.0C1329.9 513.7 1328.8 517.0 1330.5 522.4C1332.2 527.8 1333.9 526.4 1335.3 528.1" stroke-width="3.2"/><path d="M946.5 157.0C948.8 160.4 949.9 160.4 954.2 168.4C958.5 176.4 955.7 175.7 960.8 183.7C965.9 191.7 962.4 188.8 971.3 195.1C980.2 201.4 979.0 198.9 990.4 204.6C1001.8 210.3 996.8 209.0 1009.4 214.2C1022.0 219.4 1019.1 217.8 1032.3 221.8C1045.5 225.8 1033.3 226.7 1053.3 227.5C1073.3 228.3 1085.3 225.5 1099.0 224.6" stroke-width="3.3"/><path d="M903.7 480.7C910.8 482.4 911.8 481.2 927.5 486.4C943.2 491.6 938.9 490.2 956.1 497.9C973.3 505.6 976.1 507.9 984.7 512.2" stroke-width="3.3"/><path d="M765.5 368.3C766.6 375.2 767.0 375.8 769.3 391.2C771.6 406.6 771.4 402.6 773.1 419.7C774.8 436.8 775.1 435.1 775.1 448.3C775.1 461.5 776.6 453.3 773.1 463.6C769.6 473.9 768.2 468.0 763.6 482.6C759.0 497.2 759.6 503.3 757.9 512.2" stroke-width="3.3"/><path d="M1600.2 640.6C1597.9 646.9 1597.7 646.9 1592.5 661.5C1587.3 676.1 1585.8 680.9 1583.0 689.2" stroke-width="3.3"/><path d="M1281.9 518.6C1287.1 518.9 1285.4 518.5 1299.1 519.6C1312.8 520.7 1316.8 519.9 1327.7 522.4C1338.6 524.9 1330.7 524.1 1335.3 528.1C1339.9 532.1 1337.2 530.6 1342.9 535.8C1348.6 541.0 1350.9 542.4 1354.3 545.3" stroke-width="3.5"/><path d="M1442.0 238.9C1448.9 235.5 1448.9 234.9 1464.9 227.5C1480.9 220.1 1476.0 220.5 1495.4 214.2C1514.8 207.9 1510.3 211.1 1529.7 206.5C1549.1 201.9 1543.0 203.2 1560.1 198.9C1577.2 194.6 1571.9 198.6 1586.8 192.3C1601.7 186.0 1598.3 185.7 1609.7 178.0C1621.1 170.3 1615.8 171.9 1624.9 166.5C1634.1 161.1 1632.2 160.5 1640.2 159.9C1648.2 159.3 1640.7 164.3 1651.6 164.6C1662.5 164.9 1665.0 163.4 1676.4 160.8C1687.8 158.2 1685.7 157.4 1689.7 156.0" stroke-width="3.6"/><path d="M1099.0 223.7C1107.6 223.1 1115.6 220.1 1127.6 221.8C1139.6 223.5 1133.3 222.0 1139.0 229.4C1144.7 236.8 1142.0 236.9 1146.6 246.6C1151.2 256.3 1145.7 255.0 1154.3 261.8C1162.9 268.6 1159.8 266.2 1175.2 269.4C1190.6 272.5 1186.3 272.9 1205.7 272.3C1225.1 271.7 1221.7 268.6 1240.0 267.5C1258.3 266.4 1243.3 267.9 1266.7 268.5C1290.1 269.1 1291.8 270.0 1318.1 269.4C1344.4 268.8 1331.4 270.0 1354.3 266.6C1377.2 263.2 1372.7 264.6 1394.4 258.0C1416.1 251.4 1412.4 249.9 1426.7 244.7C1441.0 239.5 1437.4 242.0 1442.0 240.8" stroke-width="3.7"/><path d="M756.0 395.0C761.7 392.7 762.5 391.1 775.1 387.4C787.7 383.7 784.2 384.0 797.9 382.6C811.6 381.2 811.6 380.6 820.8 382.6C829.9 384.6 825.0 384.4 828.4 389.3C831.8 394.2 826.5 393.1 832.2 398.8C837.9 404.5 838.4 402.6 847.5 408.3C856.6 414.0 853.6 412.1 862.7 417.8C871.9 423.5 868.9 421.7 878.0 427.4C887.1 433.1 886.4 430.6 893.2 436.9C900.0 443.2 897.6 439.2 900.8 448.3C903.9 457.4 902.8 457.1 903.7 467.4C904.6 477.7 905.1 474.0 903.7 482.6C902.3 491.2 902.0 487.1 898.9 496.0C895.8 504.9 894.9 507.3 893.2 512.2" stroke-width="3.7"/><path d="M1442.0 516.7C1447.7 520.1 1449.1 519.5 1461.1 528.1C1473.1 536.7 1470.6 536.1 1482.0 545.3C1493.4 554.4 1488.3 550.6 1499.2 558.6C1510.1 566.6 1506.8 563.4 1518.2 572.0C1529.6 580.6 1528.1 579.2 1537.3 587.2C1546.5 595.2 1541.9 591.3 1548.7 598.7C1555.5 606.1 1553.2 604.6 1560.1 612.0C1567.0 619.4 1565.9 617.1 1571.6 623.4C1577.3 629.7 1573.5 628.4 1579.2 633.0C1584.9 637.6 1584.3 636.4 1590.6 638.7C1596.9 641.0 1590.5 640.0 1600.2 640.6C1609.9 641.2 1604.7 642.9 1623.0 640.6C1641.3 638.3 1641.1 636.1 1661.1 633.0C1681.1 629.9 1672.5 630.1 1689.7 630.1C1706.9 630.1 1704.0 629.3 1718.3 633.0C1732.6 636.7 1726.0 635.7 1737.4 642.5C1748.8 649.3 1741.6 649.5 1756.4 655.8C1771.2 662.1 1777.8 661.1 1786.9 663.4" stroke-width="3.8"/><path d="M1278.1 510.0C1279.2 512.6 1279.3 513.7 1281.9 518.6C1284.5 523.5 1285.3 523.9 1286.7 526.2" stroke-width="3.9"/><path d="M1324 352C1325.7 355.0 1327.3 356.0 1329.5 362C1331.7 368.0 1330.9 325.8 1331.2 372C1331.5 418.2 1330.8 472.8 1330.6 516" stroke-width="4.1"/><path d="M1222.9 156.0C1225.8 159.7 1225.0 159.5 1232.4 168.4C1239.8 177.3 1240.2 175.3 1247.6 185.6C1255.0 195.9 1252.6 193.5 1257.2 202.7C1261.8 211.8 1253.2 210.9 1262.9 216.1C1272.6 221.3 1275.8 217.6 1289.5 219.9C1303.2 222.2 1297.7 222.0 1308.6 223.7C1319.5 225.4 1320.6 225.0 1325.8 225.6" stroke-width="4.3"/><path d="M1099.0 549.1C1104.7 548.5 1103.8 549.5 1118.1 547.2C1132.4 544.9 1132.3 543.8 1146.6 541.5C1160.9 539.2 1155.4 543.0 1165.7 539.6C1176.0 536.2 1171.2 536.4 1180.9 530.1C1190.6 523.8 1186.1 523.8 1198.1 518.6C1210.1 513.4 1207.3 514.3 1221.0 512.9C1234.7 511.5 1231.8 511.9 1243.8 513.9C1255.8 515.9 1250.1 517.1 1261.0 519.6C1271.9 522.1 1272.3 520.4 1280.0 522.4C1287.7 524.4 1281.0 522.2 1286.7 526.2C1292.4 530.2 1289.7 531.5 1299.1 535.8C1308.5 540.1 1303.8 538.0 1318.1 540.5C1332.4 543.0 1332.4 541.7 1346.7 544.3C1361.0 546.9 1353.2 547.1 1365.8 549.1C1378.4 551.1 1377.2 551.3 1388.6 551.0C1400.0 550.7 1393.6 549.6 1403.9 548.2C1414.2 546.8 1411.5 547.2 1422.9 546.3C1434.3 545.4 1436.3 545.6 1442.0 545.3" stroke-width="4.3"/><path d="M1388.6 551.0C1390.3 553.3 1393.8 551.7 1394.4 558.6C1395.0 565.5 1395.1 563.6 1390.5 573.9C1385.9 584.2 1387.6 582.0 1379.1 592.9C1370.5 603.8 1371.7 602.7 1362.0 610.1C1352.3 617.5 1357.0 614.6 1346.7 617.7C1336.4 620.9 1337.4 618.3 1327.7 620.6C1318.0 622.9 1321.7 620.4 1314.3 625.3C1306.9 630.2 1308.3 628.8 1302.9 636.8C1297.5 644.8 1298.2 647.4 1296.2 652.0" stroke-width="4.7"/><path d="M832.2 512.2C836.8 509.9 836.1 507.7 847.5 504.5C858.9 501.3 856.6 502.3 870.3 501.7C884.0 501.1 876.0 501.5 893.2 502.6C910.4 503.7 911.5 502.6 927.5 505.5C943.5 508.4 940.8 510.2 946.5 512.2" stroke-width="4.9"/><path d="M1377.2 156.0C1377.5 162.0 1379.3 165.5 1378.2 176.1C1377.1 186.7 1378.3 182.8 1373.4 191.3C1368.5 199.9 1371.2 196.6 1362.0 204.6C1352.8 212.6 1352.6 210.0 1342.9 218.0C1333.2 226.0 1335.3 222.2 1329.6 231.3C1323.9 240.5 1326.7 237.6 1323.8 248.5C1320.9 259.4 1321.7 254.9 1320.0 267.5C1318.3 280.1 1318.7 270.4 1318.1 290.4C1317.5 310.3 1318.1 320.9 1318.1 334.0" stroke-width="5.0"/><path d="M1318.1 330C1318.4 334.2 1317.9 336.2 1319.2 344C1320.5 351.8 1320.3 349.3 1322.6 356C1324.9 362.7 1325.6 363.3 1326.9 366.4" stroke-width="5.0"/><path d="M1326.9 366.4 L1277.6 516" stroke-width="5.2"/><path d="M755.0 539.6C761.0 539.0 763.4 540.6 775.1 537.7C786.8 534.9 782.7 535.3 794.1 530.1C805.5 524.9 801.8 525.7 813.2 520.5C824.6 515.3 824.2 516.1 832.2 512.9C840.2 509.7 837.5 510.8 839.8 509.9" stroke-width="5.9"/><path d="M923.7 509.9C930.5 511.9 931.1 511.8 946.5 516.7C961.9 521.6 957.9 522.2 975.1 526.2C992.3 530.2 983.7 526.6 1003.7 530.1C1023.7 533.6 1021.8 533.7 1041.8 537.7C1061.8 541.7 1053.2 539.7 1070.4 543.4C1087.6 547.1 1090.4 548.1 1099.0 550.1" stroke-width="5.9"/><path d="M1098.0 549.7C1104.0 551.8 1103.5 550.6 1118.1 556.7C1132.7 562.8 1129.5 561.5 1146.6 570.1C1163.7 578.7 1160.9 576.7 1175.2 585.3C1189.5 593.9 1182.9 589.0 1194.3 598.7C1205.7 608.4 1204.1 606.8 1213.3 617.7C1222.5 628.6 1216.8 625.8 1224.8 634.9C1232.8 644.0 1229.1 641.4 1240.0 648.2C1250.9 655.0 1249.0 653.1 1261.0 657.7C1273.0 662.3 1270.3 659.4 1280.0 663.4C1289.7 667.4 1286.5 665.9 1293.4 671.1C1300.3 676.3 1298.0 675.2 1302.9 680.6C1307.8 686.0 1307.6 686.6 1309.6 689.2" stroke-width="5.9"/></g><g fill="none" stroke="#fff" stroke-linecap="round" stroke-linejoin="round"><path d="M1362.0 246.6C1371.7 244.3 1377.3 244.1 1394.4 238.9C1411.5 233.7 1411.7 232.2 1419.1 229.4" stroke-width="1.1"/><path d="M1407.7 195.1C1411.1 202.0 1413.4 203.1 1419.1 218.0C1424.8 232.9 1424.4 236.7 1426.7 244.7" stroke-width="1.1"/><path d="M1447.7 240.8C1457.4 238.0 1462.9 235.3 1480.1 231.3C1497.3 227.3 1494.6 224.1 1504.9 227.5C1515.2 230.9 1513.3 235.8 1514.4 242.7C1515.5 249.6 1524.7 246.4 1508.7 250.4C1492.7 254.4 1475.4 254.4 1461.1 256.1" stroke-width="1.1"/><path d="M1503.0 214.2 L1504.9 227.5" stroke-width="1.1"/><path d="M797.9 382.6C797.6 393.2 804.4 406.7 797.0 417.8C789.6 428.9 780.3 419.1 773.1 419.7" stroke-width="1.1"/><path d="M824.6 539.6C836.0 541.3 850.1 547.0 862.7 545.3C875.3 543.6 866.5 540.2 866.5 533.9C866.5 527.6 863.8 527.2 862.7 524.3" stroke-width="1.1"/><path d="M1045.6 549.1C1055.9 550.0 1063.9 550.0 1079.9 552.0C1095.9 554.0 1093.3 554.7 1099.0 555.8" stroke-width="1.1"/><path d="M1052.3 573.9 L1099.0 576.7" stroke-width="1.1"/><path d="M1099.0 625.3C1107.6 628.2 1113.3 632.6 1127.6 634.9C1141.9 637.2 1140.9 633.6 1146.6 633.0" stroke-width="1.1"/><path d="M1099.0 671.1C1107.6 673.4 1105.9 678.1 1127.6 678.7C1149.3 679.3 1151.4 671.9 1171.4 673.0C1191.4 674.1 1184.0 677.6 1194.3 682.5C1204.6 687.4 1202.3 687.2 1205.7 689.2" stroke-width="1.1"/><path d="M1442.0 655.8C1448.9 658.1 1450.6 657.1 1464.9 663.4C1479.2 669.7 1477.6 669.1 1489.6 676.8C1501.6 684.5 1500.3 685.5 1504.9 689.2" stroke-width="1.1"/><path d="M1442.0 682.5C1447.7 681.4 1446.8 680.4 1461.1 678.7C1475.4 677.0 1481.0 677.4 1489.6 676.8" stroke-width="1.1"/><path d="M1167.6 156.0C1168.7 164.9 1173.1 171.0 1171.4 185.6C1169.7 200.2 1167.0 192.0 1161.9 204.6C1156.8 217.2 1158.9 214.9 1154.3 227.5C1149.7 240.1 1148.9 240.9 1146.6 246.6" stroke-width="1.2"/><path d="M1192.4 156.0C1193.0 160.9 1189.7 161.6 1194.3 172.2C1198.9 182.8 1200.8 178.7 1207.6 191.3C1214.4 203.9 1210.8 199.9 1217.1 214.2C1223.4 228.5 1223.4 225.2 1228.6 238.9C1233.8 252.6 1230.9 251.3 1234.3 259.9C1237.7 268.5 1238.3 265.2 1240.0 267.5" stroke-width="1.2"/><path d="M1099.0 185.6C1100.7 189.6 1101.9 188.6 1104.7 198.9C1107.5 209.2 1107.4 213.6 1108.5 219.9" stroke-width="1.2"/><path d="M1299.1 157.0C1300.8 163.9 1301.4 168.5 1304.8 179.9C1308.2 191.3 1305.4 183.7 1310.5 195.1C1315.6 206.5 1318.5 211.1 1321.9 218.0" stroke-width="1.2"/><path d="M1257.2 200.8C1266.9 199.7 1273.5 198.7 1289.5 197.0C1305.5 195.3 1299.0 197.4 1310.5 195.1C1322.0 192.8 1319.1 195.1 1327.7 189.4C1336.3 183.7 1335.1 183.5 1339.1 176.1C1343.1 168.7 1340.4 168.0 1341.0 164.6" stroke-width="1.2"/><path d="M1354.3 266.6C1356.6 259.4 1355.7 256.7 1362.0 242.7C1368.3 228.7 1368.5 234.2 1375.3 219.9C1382.1 205.6 1382.5 208.8 1384.8 195.1C1387.1 181.4 1383.5 180.4 1382.9 174.1" stroke-width="1.2"/><path d="M1442.0 242.7C1446.6 247.3 1448.6 247.1 1457.2 258.0C1465.8 268.9 1467.1 265.9 1470.6 279.0C1474.0 292.1 1473.9 292.7 1468.7 301.8C1463.5 310.9 1458.0 307.1 1453.4 309.4" stroke-width="1.2"/><path d="M756.0 433.1 L771.2 431.2" stroke-width="1.2"/><path d="M1280.0 324.5C1284.1 326.6 1286.3 325.9 1293.8 331.5C1301.3 337.1 1301.6 339.7 1304.9 343.2" stroke-width="1.2"/><path d="M1331.1 331.5C1333.2 335.6 1334.2 336.2 1338.0 345.3C1341.8 354.4 1337.8 356.1 1343.6 361.9C1349.4 367.7 1352.4 360.5 1357.4 364.6C1362.4 368.7 1360.2 368.2 1360.2 375.7C1360.2 383.2 1358.2 385.4 1357.4 389.5" stroke-width="1.2"/><path d="M836.0 561.5C840.6 560.6 838.1 560.3 851.3 558.6C864.5 556.9 862.8 554.7 879.9 555.8C897.0 556.9 897.0 561.0 908.4 562.4C919.8 563.8 909.4 561.6 918.0 560.5C926.6 559.4 922.7 558.3 937.0 558.6C951.3 558.9 945.6 562.1 965.6 561.5C985.6 560.9 979.7 559.6 1003.7 556.7C1027.7 553.9 1033.0 553.4 1045.6 552.0" stroke-width="1.2"/><path d="M908.4 577.7C909.5 574.3 909.3 571.5 912.2 566.3C915.1 561.1 916.3 562.2 918.0 560.5" stroke-width="1.2"/><path d="M977.0 510.0 L977.0 556.7" stroke-width="1.2"/><path d="M908.4 667.2C937.0 667.3 946.5 666.9 1003.7 667.6C1060.9 668.3 1070.4 668.9 1099.0 669.5" stroke-width="1.2"/><path d="M1354.3 545.3C1352.0 552.2 1351.3 552.8 1346.7 568.2C1342.1 583.6 1342.5 581.9 1339.1 596.7C1335.7 611.6 1337.3 603.4 1335.3 617.7C1333.3 632.0 1333.0 630.7 1332.4 644.4C1331.8 658.1 1334.0 650.0 1333.4 663.4C1332.8 676.8 1331.4 681.5 1330.5 689.2" stroke-width="1.2"/><path d="M1407.7 510.0C1408.8 520.6 1409.8 522.1 1411.5 545.3C1413.2 568.5 1412.3 567.8 1413.4 587.2C1414.5 606.6 1406.7 602.1 1415.3 610.1C1423.9 618.1 1434.0 612.8 1442.0 613.9" stroke-width="1.2"/><path d="M1403.9 610.1C1398.2 614.7 1396.2 615.0 1384.8 625.3C1373.4 635.6 1375.5 635.2 1365.8 644.4C1356.1 653.5 1356.4 652.4 1352.4 655.8" stroke-width="1.2"/><path d="M1099.0 581.5C1104.7 584.4 1103.8 586.4 1118.1 591.0C1132.4 595.6 1133.5 592.1 1146.6 596.7C1159.7 601.3 1156.2 597.7 1161.9 606.3C1167.6 614.9 1161.7 613.9 1165.7 625.3C1169.7 636.7 1172.4 631.8 1175.2 644.4C1178.0 657.0 1180.9 653.8 1175.2 667.2C1169.5 680.6 1161.9 682.6 1156.2 689.2" stroke-width="1.2"/><path d="M1352.4 655.8C1347.8 659.8 1342.9 659.2 1337.2 669.2C1331.5 679.2 1334.5 683.2 1333.4 689.2" stroke-width="1.2"/><path d="M1442.0 612.0C1447.7 610.9 1446.8 612.2 1461.1 608.2C1475.4 604.2 1467.9 605.0 1489.6 598.7C1511.3 592.4 1520.3 590.7 1533.5 587.2" stroke-width="1.2"/><path d="M1594.4 594.8C1596.1 589.7 1595.0 586.0 1600.2 577.7C1605.4 569.4 1603.0 566.6 1611.6 567.2C1620.1 567.8 1623.6 575.9 1628.7 579.6" stroke-width="1.2"/><path d="M1672.6 547.2C1673.7 554.6 1671.3 561.1 1676.4 572.0C1681.5 582.9 1685.7 580.0 1689.7 583.4" stroke-width="1.2"/><path d="M1672.6 547.2C1683.5 549.5 1690.5 552.8 1708.8 554.8C1727.1 556.8 1723.8 549.9 1733.5 553.9C1743.2 557.9 1734.9 552.5 1741.2 568.2C1747.5 583.9 1747.1 583.4 1754.5 606.3C1761.9 629.2 1763.1 628.4 1765.9 644.4C1768.8 660.4 1764.6 655.0 1764.0 659.6" stroke-width="1.2"/><path d="M1685.9 614.8C1704.2 613.4 1716.6 613.8 1746.9 610.1C1777.2 606.4 1774.9 604.8 1786.9 602.5" stroke-width="1.2"/><path d="M1661.1 633.0C1664.0 639.3 1667.2 637.0 1670.7 653.9C1674.2 670.8 1672.0 678.6 1672.6 689.2" stroke-width="1.2"/><path d="M1689.7 630.1C1696.6 640.1 1695.4 654.0 1712.6 663.4C1729.8 672.8 1731.5 662.6 1746.9 661.5C1762.3 660.4 1758.9 660.2 1764.0 659.6" stroke-width="1.2"/><path d="M1727.8 663.4 L1735.4 689.2" stroke-width="1.2"/><path d="M1571.6 156.0C1570.5 162.0 1570.7 163.5 1567.8 176.1C1564.9 188.7 1563.7 191.4 1562.0 198.0" stroke-width="1.3"/><path d="M1583.0 156.0C1585.8 160.9 1584.5 165.6 1592.5 172.2C1600.5 178.8 1604.5 176.3 1609.7 178.0" stroke-width="1.3"/><path d="M982.8 451.2C984.2 457.2 985.5 460.6 987.5 471.2C989.5 481.8 989.4 474.1 989.4 486.4C989.4 498.7 988.1 504.5 987.5 512.2" stroke-width="1.3"/><path d="M1043.7 528.1C1044.3 534.4 1043.0 537.6 1045.6 549.1C1048.2 560.6 1052.0 560.0 1052.3 566.3C1052.6 572.6 1047.7 563.8 1046.6 570.1C1045.5 576.4 1047.4 573.5 1048.5 587.2C1049.6 600.9 1051.8 606.1 1050.4 615.8C1049.0 625.5 1045.1 605.3 1043.7 619.6C1042.3 633.9 1046.7 642.5 1045.6 663.4C1044.5 684.3 1041.6 681.5 1039.9 689.2" stroke-width="1.3"/><path d="M815.1 545.3C812.2 549.9 808.6 545.1 805.5 560.5C802.4 575.9 803.4 580.7 804.6 596.7C805.8 612.7 808.0 608.7 809.4 613.9" stroke-width="1.3"/><path d="M756.0 575.8C759.4 575.2 761.1 569.3 767.4 573.9C773.7 578.5 771.8 581.3 777.0 591.0C782.2 600.7 782.3 599.0 784.6 606.3C786.9 613.6 784.6 612.7 784.6 615.4" stroke-width="1.3"/><path d="M1442.0 546.3 L1482.0 545.3" stroke-width="1.3"/><path d="M1053.3 227.5C1052.7 233.8 1051.4 238.8 1051.4 248.5C1051.4 258.2 1049.3 255.3 1053.3 259.9C1057.3 264.5 1060.7 260.8 1064.7 263.7C1068.7 266.6 1056.3 265.7 1066.6 269.4C1076.9 273.1 1089.3 274.1 1099.0 276.1" stroke-width="1.5"/><path d="M1087.6 157.0C1089.3 162.7 1089.9 167.5 1093.3 176.1C1096.7 184.7 1097.3 182.8 1099.0 185.6" stroke-width="1.5"/><path d="M1377.2 174.1C1368.0 172.4 1364.4 172.4 1346.7 168.4C1329.0 164.4 1329.5 164.5 1318.1 160.8C1306.7 157.1 1311.4 157.4 1308.6 156.0" stroke-width="1.5"/><path d="M903.7 475.0C908.6 474.4 909.9 477.7 919.9 473.1C929.9 468.5 925.6 465.2 937.0 459.8C948.4 454.4 944.3 457.6 958.0 455.0C971.7 452.4 972.5 453.8 982.8 451.2C993.1 448.6 988.3 451.3 992.3 446.4C996.3 441.5 995.0 438.4 996.1 435.0" stroke-width="1.5"/><path d="M1286.9 343.9C1292.3 343.7 1297.4 344.8 1304.9 343.2C1312.4 341.6 1307.2 338.6 1311.8 338.4C1316.4 338.2 1317.6 341.3 1320.1 342.5" stroke-width="1.5"/><path d="M1291.5 512.2C1295.5 509.1 1293.9 506.6 1304.8 501.7C1315.7 496.8 1312.3 498.0 1327.7 496.0C1343.1 494.0 1339.1 494.4 1356.2 495.0C1373.3 495.6 1367.6 494.8 1384.8 497.9C1402.0 501.0 1399.1 501.2 1413.4 505.5C1427.7 509.8 1426.8 510.2 1432.5 512.2" stroke-width="1.5"/><path d="M756.0 566.3C759.4 566.0 753.1 566.5 767.4 565.3C781.7 564.1 783.0 563.5 803.6 562.4C824.2 561.3 825.1 560.3 836.0 561.5C846.9 562.7 829.5 564.3 839.8 566.3C850.1 568.3 855.4 567.1 870.3 568.2C885.2 569.3 878.0 567.2 889.4 570.1C900.8 573.0 897.0 572.6 908.4 577.7C919.8 582.8 913.2 582.6 927.5 587.2C941.8 591.8 941.8 588.9 956.1 592.9C970.4 596.9 963.7 595.4 975.1 600.6C986.5 605.8 979.9 605.0 994.2 610.1C1008.5 615.2 1005.6 616.0 1022.8 617.7C1040.0 619.4 1034.3 614.7 1051.4 615.8C1068.5 616.9 1065.6 618.1 1079.9 621.5C1094.2 624.9 1093.3 625.5 1099.0 627.2" stroke-width="1.5"/><path d="M756.0 518.6C757.1 524.9 756.9 525.3 759.8 539.6C762.6 553.9 763.8 558.3 765.5 566.3" stroke-width="1.5"/><path d="M1167.6 539.6C1169.9 545.3 1169.5 547.7 1175.2 558.6C1180.9 569.5 1184.4 567.2 1186.7 575.8C1189.0 584.4 1182.8 580.3 1182.8 587.2C1182.8 594.1 1185.0 587.3 1186.7 598.7C1188.4 610.1 1187.5 614.4 1188.6 625.3C1189.7 636.2 1185.4 632.6 1190.5 634.9C1195.6 637.2 1196.5 633.6 1205.7 633.0C1214.9 632.4 1213.0 631.9 1221.0 633.0C1229.0 634.1 1220.4 633.9 1232.4 636.8C1244.4 639.6 1243.9 638.5 1261.0 642.5C1278.1 646.5 1276.4 645.5 1289.5 650.1C1302.6 654.7 1300.2 655.4 1304.8 657.7" stroke-width="1.5"/><path d="M1611.6 640.6C1613.3 647.4 1613.3 648.8 1617.3 663.4C1621.3 678.0 1622.6 681.5 1624.9 689.2" stroke-width="1.5"/><path d="M1594.4 594.8C1609.3 589.1 1624.0 578.1 1644.0 575.8C1664.0 573.5 1651.4 578.1 1661.1 587.2C1670.8 596.4 1667.8 593.4 1676.4 606.3C1685.0 619.2 1685.7 623.0 1689.7 630.1" stroke-width="1.5"/><path d="M1594.4 594.8C1593.8 601.7 1590.8 604.0 1592.5 617.7C1594.2 631.4 1597.9 633.7 1600.2 640.6" stroke-width="1.5"/><path d="M1676.4 606.3C1680.4 599.4 1670.8 594.8 1689.7 583.4C1708.6 572.0 1716.4 575.1 1739.3 568.2C1762.2 561.3 1751.6 564.2 1765.9 560.5C1780.2 556.8 1780.6 557.2 1786.9 555.8" stroke-width="1.5"/><path d="M813.2 549.1C818.9 544.0 817.4 539.4 832.2 532.0C847.1 524.6 845.5 528.9 862.7 524.3C879.9 519.7 880.2 521.0 889.4 516.7C898.5 512.4 892.1 512.0 893.2 510.0" stroke-width="1.6"/><path d="M1262.9 216.1C1264.0 221.2 1265.6 217.8 1266.7 233.2C1267.8 248.6 1265.6 250.3 1266.7 267.5C1267.8 284.7 1270.5 280.1 1270.5 290.4C1270.5 300.7 1267.8 298.4 1266.7 301.8" stroke-width="1.7"/><path d="M756.0 368.3C761.7 367.4 760.8 365.1 775.1 365.4C789.4 365.7 786.5 369.6 803.6 369.3C820.7 369.0 819.0 365.7 832.2 364.5C845.4 363.3 838.4 362.5 847.5 365.4C856.6 368.2 857.6 366.3 862.7 374.0C867.8 381.7 864.6 380.3 864.6 391.2C864.6 402.1 862.7 402.2 862.7 410.2C862.7 418.2 864.0 415.5 864.6 417.8" stroke-width="1.7"/><path d="M1340.8 303.8C1339.1 307.9 1338.2 309.3 1335.3 317.6C1332.4 325.9 1334.0 324.0 1331.1 331.5C1328.2 339.0 1327.2 339.2 1325.6 342.5" stroke-width="1.7"/><path d="M1329.6 510.0C1329.9 513.7 1328.8 517.0 1330.5 522.4C1332.2 527.8 1333.9 526.4 1335.3 528.1" stroke-width="1.7"/><path d="M946.5 157.0C948.8 160.4 949.9 160.4 954.2 168.4C958.5 176.4 955.7 175.7 960.8 183.7C965.9 191.7 962.4 188.8 971.3 195.1C980.2 201.4 979.0 198.9 990.4 204.6C1001.8 210.3 996.8 209.0 1009.4 214.2C1022.0 219.4 1019.1 217.8 1032.3 221.8C1045.5 225.8 1033.3 226.7 1053.3 227.5C1073.3 228.3 1085.3 225.5 1099.0 224.6" stroke-width="1.8"/><path d="M903.7 480.7C910.8 482.4 911.8 481.2 927.5 486.4C943.2 491.6 938.9 490.2 956.1 497.9C973.3 505.6 976.1 507.9 984.7 512.2" stroke-width="1.8"/><path d="M765.5 368.3C766.6 375.2 767.0 375.8 769.3 391.2C771.6 406.6 771.4 402.6 773.1 419.7C774.8 436.8 775.1 435.1 775.1 448.3C775.1 461.5 776.6 453.3 773.1 463.6C769.6 473.9 768.2 468.0 763.6 482.6C759.0 497.2 759.6 503.3 757.9 512.2" stroke-width="1.8"/><path d="M1600.2 640.6C1597.9 646.9 1597.7 646.9 1592.5 661.5C1587.3 676.1 1585.8 680.9 1583.0 689.2" stroke-width="1.8"/><path d="M1281.9 518.6C1287.1 518.9 1285.4 518.5 1299.1 519.6C1312.8 520.7 1316.8 519.9 1327.7 522.4C1338.6 524.9 1330.7 524.1 1335.3 528.1C1339.9 532.1 1337.2 530.6 1342.9 535.8C1348.6 541.0 1350.9 542.4 1354.3 545.3" stroke-width="2.0"/><path d="M1442.0 238.9C1448.9 235.5 1448.9 234.9 1464.9 227.5C1480.9 220.1 1476.0 220.5 1495.4 214.2C1514.8 207.9 1510.3 211.1 1529.7 206.5C1549.1 201.9 1543.0 203.2 1560.1 198.9C1577.2 194.6 1571.9 198.6 1586.8 192.3C1601.7 186.0 1598.3 185.7 1609.7 178.0C1621.1 170.3 1615.8 171.9 1624.9 166.5C1634.1 161.1 1632.2 160.5 1640.2 159.9C1648.2 159.3 1640.7 164.3 1651.6 164.6C1662.5 164.9 1665.0 163.4 1676.4 160.8C1687.8 158.2 1685.7 157.4 1689.7 156.0" stroke-width="2.1"/><path d="M1099.0 223.7C1107.6 223.1 1115.6 220.1 1127.6 221.8C1139.6 223.5 1133.3 222.0 1139.0 229.4C1144.7 236.8 1142.0 236.9 1146.6 246.6C1151.2 256.3 1145.7 255.0 1154.3 261.8C1162.9 268.6 1159.8 266.2 1175.2 269.4C1190.6 272.5 1186.3 272.9 1205.7 272.3C1225.1 271.7 1221.7 268.6 1240.0 267.5C1258.3 266.4 1243.3 267.9 1266.7 268.5C1290.1 269.1 1291.8 270.0 1318.1 269.4C1344.4 268.8 1331.4 270.0 1354.3 266.6C1377.2 263.2 1372.7 264.6 1394.4 258.0C1416.1 251.4 1412.4 249.9 1426.7 244.7C1441.0 239.5 1437.4 242.0 1442.0 240.8" stroke-width="2.2"/><path d="M756.0 395.0C761.7 392.7 762.5 391.1 775.1 387.4C787.7 383.7 784.2 384.0 797.9 382.6C811.6 381.2 811.6 380.6 820.8 382.6C829.9 384.6 825.0 384.4 828.4 389.3C831.8 394.2 826.5 393.1 832.2 398.8C837.9 404.5 838.4 402.6 847.5 408.3C856.6 414.0 853.6 412.1 862.7 417.8C871.9 423.5 868.9 421.7 878.0 427.4C887.1 433.1 886.4 430.6 893.2 436.9C900.0 443.2 897.6 439.2 900.8 448.3C903.9 457.4 902.8 457.1 903.7 467.4C904.6 477.7 905.1 474.0 903.7 482.6C902.3 491.2 902.0 487.1 898.9 496.0C895.8 504.9 894.9 507.3 893.2 512.2" stroke-width="2.2"/><path d="M1442.0 516.7C1447.7 520.1 1449.1 519.5 1461.1 528.1C1473.1 536.7 1470.6 536.1 1482.0 545.3C1493.4 554.4 1488.3 550.6 1499.2 558.6C1510.1 566.6 1506.8 563.4 1518.2 572.0C1529.6 580.6 1528.1 579.2 1537.3 587.2C1546.5 595.2 1541.9 591.3 1548.7 598.7C1555.5 606.1 1553.2 604.6 1560.1 612.0C1567.0 619.4 1565.9 617.1 1571.6 623.4C1577.3 629.7 1573.5 628.4 1579.2 633.0C1584.9 637.6 1584.3 636.4 1590.6 638.7C1596.9 641.0 1590.5 640.0 1600.2 640.6C1609.9 641.2 1604.7 642.9 1623.0 640.6C1641.3 638.3 1641.1 636.1 1661.1 633.0C1681.1 629.9 1672.5 630.1 1689.7 630.1C1706.9 630.1 1704.0 629.3 1718.3 633.0C1732.6 636.7 1726.0 635.7 1737.4 642.5C1748.8 649.3 1741.6 649.5 1756.4 655.8C1771.2 662.1 1777.8 661.1 1786.9 663.4" stroke-width="2.3"/><path d="M1278.1 510.0C1279.2 512.6 1279.3 513.7 1281.9 518.6C1284.5 523.5 1285.3 523.9 1286.7 526.2" stroke-width="2.4"/><path d="M1324 352C1325.7 355.0 1327.3 356.0 1329.5 362C1331.7 368.0 1330.9 325.8 1331.2 372C1331.5 418.2 1330.8 472.8 1330.6 516" stroke-width="2.6"/><path d="M1222.9 156.0C1225.8 159.7 1225.0 159.5 1232.4 168.4C1239.8 177.3 1240.2 175.3 1247.6 185.6C1255.0 195.9 1252.6 193.5 1257.2 202.7C1261.8 211.8 1253.2 210.9 1262.9 216.1C1272.6 221.3 1275.8 217.6 1289.5 219.9C1303.2 222.2 1297.7 222.0 1308.6 223.7C1319.5 225.4 1320.6 225.0 1325.8 225.6" stroke-width="2.8"/><path d="M1099.0 549.1C1104.7 548.5 1103.8 549.5 1118.1 547.2C1132.4 544.9 1132.3 543.8 1146.6 541.5C1160.9 539.2 1155.4 543.0 1165.7 539.6C1176.0 536.2 1171.2 536.4 1180.9 530.1C1190.6 523.8 1186.1 523.8 1198.1 518.6C1210.1 513.4 1207.3 514.3 1221.0 512.9C1234.7 511.5 1231.8 511.9 1243.8 513.9C1255.8 515.9 1250.1 517.1 1261.0 519.6C1271.9 522.1 1272.3 520.4 1280.0 522.4C1287.7 524.4 1281.0 522.2 1286.7 526.2C1292.4 530.2 1289.7 531.5 1299.1 535.8C1308.5 540.1 1303.8 538.0 1318.1 540.5C1332.4 543.0 1332.4 541.7 1346.7 544.3C1361.0 546.9 1353.2 547.1 1365.8 549.1C1378.4 551.1 1377.2 551.3 1388.6 551.0C1400.0 550.7 1393.6 549.6 1403.9 548.2C1414.2 546.8 1411.5 547.2 1422.9 546.3C1434.3 545.4 1436.3 545.6 1442.0 545.3" stroke-width="2.8"/><path d="M1388.6 551.0C1390.3 553.3 1393.8 551.7 1394.4 558.6C1395.0 565.5 1395.1 563.6 1390.5 573.9C1385.9 584.2 1387.6 582.0 1379.1 592.9C1370.5 603.8 1371.7 602.7 1362.0 610.1C1352.3 617.5 1357.0 614.6 1346.7 617.7C1336.4 620.9 1337.4 618.3 1327.7 620.6C1318.0 622.9 1321.7 620.4 1314.3 625.3C1306.9 630.2 1308.3 628.8 1302.9 636.8C1297.5 644.8 1298.2 647.4 1296.2 652.0" stroke-width="3.2"/><path d="M832.2 512.2C836.8 509.9 836.1 507.7 847.5 504.5C858.9 501.3 856.6 502.3 870.3 501.7C884.0 501.1 876.0 501.5 893.2 502.6C910.4 503.7 911.5 502.6 927.5 505.5C943.5 508.4 940.8 510.2 946.5 512.2" stroke-width="3.4"/><path d="M1377.2 156.0C1377.5 162.0 1379.3 165.5 1378.2 176.1C1377.1 186.7 1378.3 182.8 1373.4 191.3C1368.5 199.9 1371.2 196.6 1362.0 204.6C1352.8 212.6 1352.6 210.0 1342.9 218.0C1333.2 226.0 1335.3 222.2 1329.6 231.3C1323.9 240.5 1326.7 237.6 1323.8 248.5C1320.9 259.4 1321.7 254.9 1320.0 267.5C1318.3 280.1 1318.7 270.4 1318.1 290.4C1317.5 310.3 1318.1 320.9 1318.1 334.0" stroke-width="3.5"/><path d="M1318.1 330C1318.4 334.2 1317.9 336.2 1319.2 344C1320.5 351.8 1320.3 349.3 1322.6 356C1324.9 362.7 1325.6 363.3 1326.9 366.4" stroke-width="3.5"/><path d="M1326.9 366.4 L1277.6 516" stroke-width="3.7"/><path d="M755.0 539.6C761.0 539.0 763.4 540.6 775.1 537.7C786.8 534.9 782.7 535.3 794.1 530.1C805.5 524.9 801.8 525.7 813.2 520.5C824.6 515.3 824.2 516.1 832.2 512.9C840.2 509.7 837.5 510.8 839.8 509.9" stroke-width="4.4"/><path d="M923.7 509.9C930.5 511.9 931.1 511.8 946.5 516.7C961.9 521.6 957.9 522.2 975.1 526.2C992.3 530.2 983.7 526.6 1003.7 530.1C1023.7 533.6 1021.8 533.7 1041.8 537.7C1061.8 541.7 1053.2 539.7 1070.4 543.4C1087.6 547.1 1090.4 548.1 1099.0 550.1" stroke-width="4.4"/><path d="M1098.0 549.7C1104.0 551.8 1103.5 550.6 1118.1 556.7C1132.7 562.8 1129.5 561.5 1146.6 570.1C1163.7 578.7 1160.9 576.7 1175.2 585.3C1189.5 593.9 1182.9 589.0 1194.3 598.7C1205.7 608.4 1204.1 606.8 1213.3 617.7C1222.5 628.6 1216.8 625.8 1224.8 634.9C1232.8 644.0 1229.1 641.4 1240.0 648.2C1250.9 655.0 1249.0 653.1 1261.0 657.7C1273.0 662.3 1270.3 659.4 1280.0 663.4C1289.7 667.4 1286.5 665.9 1293.4 671.1C1300.3 676.3 1298.0 675.2 1302.9 680.6C1307.8 686.0 1307.6 686.6 1309.6 689.2" stroke-width="4.4"/></g><path d="M763.6 481.7C764.9 481.7 768.7 481.1 771.2 481.7C773.8 482.3 775.2 485.0 778.9 485.5C782.6 486.0 790.2 486.9 793.2 484.5C796.2 482.1 796.2 475.0 797.0 471.2C797.8 467.4 795.8 463.3 797.9 461.7C800.0 460.1 805.9 460.8 809.4 461.3C812.9 461.8 815.1 463.8 818.9 464.5C822.7 465.2 828.4 464.9 832.2 465.5C836.0 466.1 839.0 466.9 841.7 468.3C844.4 469.7 847.8 472.0 848.4 474.1C849.0 476.2 846.5 478.6 845.6 480.7C844.7 482.8 842.6 483.7 842.7 486.4C842.9 489.1 841.9 494.9 846.5 496.9C851.1 498.9 866.3 498.1 870.3 498.3" fill="none" stroke="#edb0b8" stroke-width=".9" stroke-dasharray="1 1.7"/><path d="M1024.7 436.9C1024.1 438.5 1020.3 443.9 1020.9 446.4C1021.5 448.9 1026.5 450.2 1028.5 452.1C1030.5 454.0 1031.9 455.3 1033.2 457.9C1034.5 460.4 1035.3 464.4 1036.1 467.4C1036.9 470.4 1039.3 473.8 1038.0 476.0C1036.7 478.2 1031.3 479.4 1028.5 480.7C1025.7 482.0 1024.1 483.8 1020.9 483.6C1017.7 483.5 1013.8 480.1 1009.4 479.8C1005.0 479.5 996.7 481.4 994.2 481.7" fill="none" stroke="#edb0b8" stroke-width=".9" stroke-dasharray="1 1.7"/><path d="M961.8 506.4C962.8 506.9 965.6 508.5 967.5 509.3C969.4 510.1 972.2 510.7 973.2 511.0" fill="none" stroke="#edb0b8" stroke-width=".9" stroke-dasharray="1 1.7"/><path d="M952.3 514.8C953.2 514.5 955.8 513.1 958.0 513.3C960.2 513.5 963.5 515.5 965.6 515.8C967.8 516.1 970.0 516.0 970.9 515.2C971.8 514.4 971.2 511.7 971.3 511.0" fill="none" stroke="#edb0b8" stroke-width=".9" stroke-dasharray="1 1.7"/><path d="M1260.0 511.0C1260.1 515.1 1262.7 530.7 1260.6 535.8C1258.5 540.9 1251.0 539.3 1247.6 541.5C1244.2 543.7 1242.8 547.0 1240.0 549.1C1237.2 551.2 1235.3 552.8 1230.5 553.9C1225.7 555.0 1214.3 554.0 1211.4 555.8C1208.5 557.5 1212.3 560.8 1213.3 564.4C1214.2 568.0 1215.7 575.3 1217.1 577.7C1218.5 580.1 1221.6 575.9 1221.9 578.6C1222.2 581.3 1218.4 590.9 1219.0 593.9C1219.6 596.9 1224.3 593.7 1225.7 596.7C1227.1 599.7 1227.8 606.9 1227.6 612.0C1227.4 617.1 1225.3 624.7 1224.8 627.2" fill="none" stroke="#edb0b8" stroke-width=".9" stroke-dasharray="1 1.7"/><path d="M1271.4 633.0C1271.4 636.8 1271.1 649.3 1271.4 655.8C1271.7 662.3 1274.5 669.0 1273.4 672.0C1272.3 675.0 1266.9 672.1 1264.8 673.9C1262.7 675.6 1263.9 680.6 1261.0 682.5C1258.1 684.4 1256.8 684.9 1247.6 685.4C1238.4 685.9 1212.7 685.4 1205.7 685.4" fill="none" stroke="#edb0b8" stroke-width=".9" stroke-dasharray="1 1.7"/><path d="M1273.4 478.8C1273.1 480.4 1272.5 485.3 1271.4 488.3C1270.3 491.3 1269.4 495.3 1266.7 496.9C1264.0 498.5 1256.8 495.5 1255.2 497.9C1253.6 500.2 1256.9 508.8 1257.2 511.0" fill="none" stroke="#edb0b8" stroke-width=".9" stroke-dasharray="1 1.7"/><path d="M757.9 486.4 L758.9 494.1" fill="none" stroke="#edb0b8" stroke-width=".9" stroke-dasharray="1 1.7"/><text x="847.8" y="158.8" font-size="8.6" font-weight="400" text-anchor="middle" textLength="43" lengthAdjust="spacingAndGlyphs" fill="#fbfbfa" stroke="#fbfbfa" stroke-width="2.2" stroke-linejoin="round" opacity=".9">Newmills</text><text x="847.8" y="158.8" font-size="8.6" font-weight="400" text-anchor="middle" textLength="43" lengthAdjust="spacingAndGlyphs" fill="#a4a9ae" stroke="#a4a9ae" stroke-width="0.42">Newmills</text><text x="991.5" y="213.3" font-size="8.6" font-weight="400" text-anchor="middle" textLength="40.4" lengthAdjust="spacingAndGlyphs" fill="#fbfbfa" stroke="#fbfbfa" stroke-width="2.2" stroke-linejoin="round" opacity=".9">Crombie</text><text x="991.5" y="213.3" font-size="8.6" font-weight="400" text-anchor="middle" textLength="40.4" lengthAdjust="spacingAndGlyphs" fill="#a4a9ae" stroke="#a4a9ae" stroke-width="0.42">Crombie</text><text x="1122.8" y="281.5" font-size="8.6" font-weight="400" text-anchor="middle" textLength="43.8" lengthAdjust="spacingAndGlyphs" fill="#fbfbfa" stroke="#fbfbfa" stroke-width="2.2" stroke-linejoin="round" opacity=".9">Limekilns</text><text x="1122.8" y="281.5" font-size="8.6" font-weight="400" text-anchor="middle" textLength="43.8" lengthAdjust="spacingAndGlyphs" fill="#a4a9ae" stroke="#a4a9ae" stroke-width="0.42">Limekilns</text><text x="1286.1" y="260.6" font-size="10.2" font-weight="400" text-anchor="middle" textLength="37.2" lengthAdjust="spacingAndGlyphs" fill="#fbfbfa" stroke="#fbfbfa" stroke-width="2.2" stroke-linejoin="round" opacity=".9">Rosyth</text><text x="1286.1" y="260.6" font-size="10.2" font-weight="400" text-anchor="middle" textLength="37.2" lengthAdjust="spacingAndGlyphs" fill="#9aa0a6" stroke="#9aa0a6" stroke-width="0.42">Rosyth</text><text x="1348" y="300.0" font-size="10.2" font-weight="400" text-anchor="middle" textLength="73.4" lengthAdjust="spacingAndGlyphs" fill="#fbfbfa" stroke="#fbfbfa" stroke-width="2.2" stroke-linejoin="round" opacity=".9">Inverkeithing</text><text x="1348" y="300.0" font-size="10.2" font-weight="400" text-anchor="middle" textLength="73.4" lengthAdjust="spacingAndGlyphs" fill="#9aa0a6" stroke="#9aa0a6" stroke-width="0.42">Inverkeithing</text><text x="1465" y="270.1" font-size="10.2" font-weight="400" text-anchor="middle" textLength="66" lengthAdjust="spacingAndGlyphs" fill="#fbfbfa" stroke="#fbfbfa" stroke-width="2.2" stroke-linejoin="round" opacity=".9">Dalgety Bay</text><text x="1465" y="270.1" font-size="10.2" font-weight="400" text-anchor="middle" textLength="66" lengthAdjust="spacingAndGlyphs" fill="#9aa0a6" stroke="#9aa0a6" stroke-width="0.42">Dalgety Bay</text><text x="1609.1" y="188.0" font-size="8.6" font-weight="400" text-anchor="middle" textLength="44.8" lengthAdjust="spacingAndGlyphs" fill="#fbfbfa" stroke="#fbfbfa" stroke-width="2.2" stroke-linejoin="round" opacity=".9">Aberdour</text><text x="1609.1" y="188.0" font-size="8.6" font-weight="400" text-anchor="middle" textLength="44.8" lengthAdjust="spacingAndGlyphs" fill="#a4a9ae" stroke="#a4a9ae" stroke-width="0.42">Aberdour</text><text x="1795" y="161.2" font-size="10.2" font-weight="400" text-anchor="middle" textLength="60" lengthAdjust="spacingAndGlyphs" fill="#fbfbfa" stroke="#fbfbfa" stroke-width="2.2" stroke-linejoin="round" opacity=".9">Burntisland</text><text x="1795" y="161.2" font-size="10.2" font-weight="400" text-anchor="middle" textLength="60" lengthAdjust="spacingAndGlyphs" fill="#9aa0a6" stroke="#9aa0a6" stroke-width="0.42">Burntisland</text><text x="777.8" y="363.5" font-size="10.8" font-weight="400" text-anchor="middle" textLength="42" lengthAdjust="spacingAndGlyphs" fill="#fbfbfa" stroke="#fbfbfa" stroke-width="2.2" stroke-linejoin="round" opacity=".9">Bo&#39;ness</text><text x="777.8" y="363.5" font-size="10.8" font-weight="400" text-anchor="middle" textLength="42" lengthAdjust="spacingAndGlyphs" fill="#9aa0a6" stroke="#9aa0a6" stroke-width="0.42">Bo&#39;ness</text><text x="864.8" y="404.6" font-size="8.6" font-weight="400" text-anchor="middle" textLength="53.7" lengthAdjust="spacingAndGlyphs" fill="#fbfbfa" stroke="#fbfbfa" stroke-width="2.2" stroke-linejoin="round" opacity=".9">Muirhouses</text><text x="864.8" y="404.6" font-size="8.6" font-weight="400" text-anchor="middle" textLength="53.7" lengthAdjust="spacingAndGlyphs" fill="#a4a9ae" stroke="#a4a9ae" stroke-width="0.42">Muirhouses</text><text x="1008.7" y="431.1" font-size="8.6" font-weight="400" text-anchor="middle" textLength="46.3" lengthAdjust="spacingAndGlyphs" fill="#fbfbfa" stroke="#fbfbfa" stroke-width="2.2" stroke-linejoin="round" opacity=".9">Blackness</text><text x="1008.7" y="431.1" font-size="8.6" font-weight="400" text-anchor="middle" textLength="46.3" lengthAdjust="spacingAndGlyphs" fill="#a4a9ae" stroke="#a4a9ae" stroke-width="0.42">Blackness</text><text x="1137.5" y="474.9" font-size="8.6" font-weight="400" text-anchor="middle" textLength="42.9" lengthAdjust="spacingAndGlyphs" fill="#fbfbfa" stroke="#fbfbfa" stroke-width="2.2" stroke-linejoin="round" opacity=".9">Abercorn</text><text x="1137.5" y="474.9" font-size="8.6" font-weight="400" text-anchor="middle" textLength="42.9" lengthAdjust="spacingAndGlyphs" fill="#a4a9ae" stroke="#a4a9ae" stroke-width="0.42">Abercorn</text><text x="1357.2" y="397.1" font-size="8.8" font-weight="400" text-anchor="middle" textLength="26.5" lengthAdjust="spacingAndGlyphs" fill="#fbfbfa" stroke="#fbfbfa" stroke-width="2.2" stroke-linejoin="round" opacity=".9">North</text><text x="1357.2" y="397.1" font-size="8.8" font-weight="400" text-anchor="middle" textLength="26.5" lengthAdjust="spacingAndGlyphs" fill="#a4a9ae" stroke="#a4a9ae" stroke-width="0.42">North</text><text x="1357.2" y="406.6" font-size="8.8" font-weight="400" text-anchor="middle" textLength="56.2" lengthAdjust="spacingAndGlyphs" fill="#fbfbfa" stroke="#fbfbfa" stroke-width="2.2" stroke-linejoin="round" opacity=".9">Queensferry</text><text x="1357.2" y="406.6" font-size="8.8" font-weight="400" text-anchor="middle" textLength="56.2" lengthAdjust="spacingAndGlyphs" fill="#a4a9ae" stroke="#a4a9ae" stroke-width="0.42">Queensferry</text><text x="1350.9" y="492.9" font-size="10.8" font-weight="400" text-anchor="middle" textLength="32.4" lengthAdjust="spacingAndGlyphs" fill="#fbfbfa" stroke="#fbfbfa" stroke-width="2.2" stroke-linejoin="round" opacity=".9">South</text><text x="1350.9" y="492.9" font-size="10.8" font-weight="400" text-anchor="middle" textLength="32.4" lengthAdjust="spacingAndGlyphs" fill="#9aa0a6" stroke="#9aa0a6" stroke-width="0.42">South</text><text x="1350.9" y="504.5" font-size="10.8" font-weight="400" text-anchor="middle" textLength="67.6" lengthAdjust="spacingAndGlyphs" fill="#fbfbfa" stroke="#fbfbfa" stroke-width="2.2" stroke-linejoin="round" opacity=".9">Queensferry</text><text x="1350.9" y="504.5" font-size="10.8" font-weight="400" text-anchor="middle" textLength="67.6" lengthAdjust="spacingAndGlyphs" fill="#9aa0a6" stroke="#9aa0a6" stroke-width="0.42">Queensferry</text><text x="795.3" y="562.2" font-size="10.8" font-weight="400" text-anchor="middle" textLength="59.5" lengthAdjust="spacingAndGlyphs" fill="#fbfbfa" stroke="#fbfbfa" stroke-width="2.2" stroke-linejoin="round" opacity=".9">Linlithgow</text><text x="795.3" y="562.2" font-size="10.8" font-weight="400" text-anchor="middle" textLength="59.5" lengthAdjust="spacingAndGlyphs" fill="#9aa0a6" stroke="#9aa0a6" stroke-width="0.42">Linlithgow</text><text x="995.1" y="564.3" font-size="8.6" font-weight="400" text-anchor="middle" textLength="50.7" lengthAdjust="spacingAndGlyphs" fill="#fbfbfa" stroke="#fbfbfa" stroke-width="2.2" stroke-linejoin="round" opacity=".9">Philpstoun</text><text x="995.1" y="564.3" font-size="8.6" font-weight="400" text-anchor="middle" textLength="50.7" lengthAdjust="spacingAndGlyphs" fill="#a4a9ae" stroke="#a4a9ae" stroke-width="0.42">Philpstoun</text><text x="972.3" y="625.1" font-size="8.6" font-weight="400" text-anchor="middle" textLength="43.1" lengthAdjust="spacingAndGlyphs" fill="#fbfbfa" stroke="#fbfbfa" stroke-width="2.2" stroke-linejoin="round" opacity=".9">Bridgend</text><text x="972.3" y="625.1" font-size="8.6" font-weight="400" text-anchor="middle" textLength="43.1" lengthAdjust="spacingAndGlyphs" fill="#a4a9ae" stroke="#a4a9ae" stroke-width="0.42">Bridgend</text><text x="1160.7" y="644.2" font-size="8.8" font-weight="400" text-anchor="middle" textLength="58.7" lengthAdjust="spacingAndGlyphs" fill="#fbfbfa" stroke="#fbfbfa" stroke-width="2.2" stroke-linejoin="round" opacity=".9">Winchburgh</text><text x="1160.7" y="644.2" font-size="8.8" font-weight="400" text-anchor="middle" textLength="58.7" lengthAdjust="spacingAndGlyphs" fill="#a4a9ae" stroke="#a4a9ae" stroke-width="0.42">Winchburgh</text><text x="1337" y="664.7" font-size="10.8" font-weight="400" text-anchor="middle" textLength="53" lengthAdjust="spacingAndGlyphs" fill="#fbfbfa" stroke="#fbfbfa" stroke-width="2.2" stroke-linejoin="round" opacity=".9">Kirkliston</text><text x="1337" y="664.7" font-size="10.8" font-weight="400" text-anchor="middle" textLength="53" lengthAdjust="spacingAndGlyphs" fill="#9aa0a6" stroke="#9aa0a6" stroke-width="0.42">Kirkliston</text><text x="1411.3" y="537.8" font-size="8.6" font-weight="400" text-anchor="middle" textLength="41.5" lengthAdjust="spacingAndGlyphs" fill="#fbfbfa" stroke="#fbfbfa" stroke-width="2.2" stroke-linejoin="round" opacity=".9">Dalmeny</text><text x="1411.3" y="537.8" font-size="8.6" font-weight="400" text-anchor="middle" textLength="41.5" lengthAdjust="spacingAndGlyphs" fill="#a4a9ae" stroke="#a4a9ae" stroke-width="0.42">Dalmeny</text><text x="1631.6" y="624.3" font-size="8.0" font-weight="400" text-anchor="middle" textLength="41.9" lengthAdjust="spacingAndGlyphs" fill="#fbfbfa" stroke="#fbfbfa" stroke-width="2.2" stroke-linejoin="round" opacity=".9">BARNTON</text><text x="1631.6" y="624.3" font-size="8.0" font-weight="400" text-anchor="middle" textLength="41.9" lengthAdjust="spacingAndGlyphs" fill="#a4a9ae" stroke="#a4a9ae" stroke-width="0.15">BARNTON</text><text x="1781" y="578.0" font-size="8.0" font-weight="400" text-anchor="middle" textLength="38" lengthAdjust="spacingAndGlyphs" fill="#fbfbfa" stroke="#fbfbfa" stroke-width="2.2" stroke-linejoin="round" opacity=".9">PILTON</text><text x="1781" y="578.0" font-size="8.0" font-weight="400" text-anchor="middle" textLength="38" lengthAdjust="spacingAndGlyphs" fill="#a4a9ae" stroke="#a4a9ae" stroke-width="0.15">PILTON</text><pattern id="mkd" width="2" height="2" patternUnits="userSpaceOnUse"><circle cx="1" cy="1" r=".42" fill="#9fd79a"/></pattern><circle cx="1257.7" cy="401.8" r="13" fill="#efecf3" fill-opacity=".4"/><circle cx="1257.7" cy="401.8" r="12.2" fill="url(#mkd)"/><circle cx="1257.7" cy="401.8" r="13" fill="none" stroke="#2f9b2e" stroke-width="1.4"/><text x="1257.1" y="406.8" font-size="16.4" fill="#2f9b2e" stroke="#2f9b2e" stroke-width=".45" text-anchor="middle">3</text><circle cx="1219.0" cy="347.9" r="65.8" fill="#c4162a" fill-opacity=".4" stroke="#d5283d" stroke-width="1.2"/><polygon points="1307.7,454.6 1318.1,458.8 1325.8,482.6 1304.8,485.9 1294.7,479.2" fill="#c4162a" fill-opacity=".4" stroke="#d5283d" stroke-width="1.1" stroke-linejoin="round"/></g></svg>
<div class="abs" style="left:763.1px;top:163.3px;width:19.7px;height:19.5px;background:#c6c9cf;border:1px solid #858a93;border-radius:2.5px"></div>
<div class="abs" style="left:764px;top:182.8px;width:18px;height:19.4px;background:#fff;border-radius:0 0 2.5px 2.5px;box-shadow:0 0 1px rgba(0,0,0,.25)"></div>
<svg style="left:763px;top:163px" width="20" height="40" viewBox="0 0 20 40"><path d="M6.6 11.4H13.6M10.1 7.9V14.9" stroke="#24222e" stroke-width="1.6"/><path d="M6.8 29.9H13.4" stroke="#6d717a" stroke-width="1.7"/></svg>
<div class="abs" style="left:764px;top:615.4px;width:140.8px;height:62.6px;background:#f4f5f5"></div>
<div class="abs" style="left:764px;top:677.8px;width:140.8px;height:2px;background:#8f949c"></div>
<div class="t" style="left:771.5px;top:626.7px;font-size:13.3px;color:#33353c;letter-spacing:.3px">Boats</div>
<div class="abs" style="left:782.7px;top:649.7px;width:13.6px;height:13.6px;border-radius:50%;background:#dce8da"></div>
<div class="abs" style="left:1758.9px;top:661.8px;width:17.6px;height:18.3px;background:#fff;border-radius:2.5px;box-shadow:0 0 1.2px rgba(0,0,0,.35)"></div>
<div class="t" style="left:1765.5px;top:665.2px;font-size:14px;font-weight:700;color:#3a3440">i</div>
<div class="abs" style="left:1762px;top:126.6px;width:22.4px;height:29px;background:#eeefef;border-radius:2px"></div>
<svg style="left:1768px;top:132px" width="10" height="18" viewBox="0 0 10 18"><circle cx="4.75" cy="5.2" r="1.3" fill="#24222e"/><circle cx="4.75" cy="9.6" r="1.3" fill="#24222e"/><circle cx="4.75" cy="14.05" r="1.3" fill="#24222e"/></svg>
<div class="panel" style="left:15px;top:731.7px;width:733px;height:242.2px"><div class="ptitle" style="letter-spacing:.47px">Speeding Events</div><div class="dot" style="left:131.2px;top:8.4px"></div></div>
<div class="panel" style="left:755.6px;top:731.7px;width:1029.4px;height:242.2px"><div class="ptitle" style="letter-spacing:.47px">Exclusion Violations</div><div class="dot" style="left:150.9px;top:8.4px"></div></div>
<div class="t" style="right:1606.8px;top:776.6999999999999px;font-size:13.7px;color:#2a2e33;letter-spacing:0.27px;-webkit-text-stroke:.3px #2a2e33">BoatNumber</div>
<div class="t" style="left:208.2px;top:776.6999999999999px;font-size:13.7px;color:#2a2e33;letter-spacing:0.27px;-webkit-text-stroke:.3px #2a2e33">Location_Name (last)</div>
<div class="t" style="right:1249.1px;top:776.6999999999999px;font-size:13.7px;color:#2a2e33;letter-spacing:0.27px;-webkit-text-stroke:.3px #2a2e33">Max_speed (last)</div>
<div class="t" style="left:566.3px;top:776.6999999999999px;font-size:13.7px;color:#2a2e33;letter-spacing:0.27px;-webkit-text-stroke:.3px #2a2e33">dateTime (last)</div>
<div class="abs" style="left:23px;top:796px;width:717px;height:1px;background:#dfe0e1"></div>
<div class="t" style="right:1604.8px;top:807.6px;font-size:13.6px;color:#3a3e43;letter-spacing:0.26px;-webkit-text-stroke:.12px #3a3e43">4</div>
<div class="t" style="left:208.2px;top:807.6px;font-size:13.6px;color:#3a3e43;letter-spacing:0.26px;-webkit-text-stroke:.12px #3a3e43">Port Edgar Marina</div>
<div class="t" style="right:1246.3px;top:807.6px;font-size:13.6px;color:#3a3e43;letter-spacing:0.45px;-webkit-text-stroke:.12px #3a3e43">6.08</div>
<div class="t" style="left:566.3px;top:807.6px;font-size:13.6px;color:#3a3e43;letter-spacing:0.44px;-webkit-text-stroke:.12px #3a3e43">2018-05-07 15:00:24</div>
<div class="abs" style="left:23px;top:830px;width:717px;height:1px;background:#e3e4e5"></div>
<div class="t" style="right:1604.8px;top:841.35px;font-size:13.6px;color:#3a3e43;letter-spacing:0.26px;-webkit-text-stroke:.12px #3a3e43">1</div>
<div class="t" style="left:208.2px;top:841.35px;font-size:13.6px;color:#3a3e43;letter-spacing:0.26px;-webkit-text-stroke:.12px #3a3e43">Port Edgar Marina</div>
<div class="t" style="right:1246.3px;top:841.35px;font-size:13.6px;color:#3a3e43;letter-spacing:0.45px;-webkit-text-stroke:.12px #3a3e43">5.43</div>
<div class="t" style="left:566.3px;top:841.35px;font-size:13.6px;color:#3a3e43;letter-spacing:0.44px;-webkit-text-stroke:.12px #3a3e43">2017-09-23 14:53:40</div>
<div class="abs" style="left:23px;top:864px;width:717px;height:1px;background:#e3e4e5"></div>
<div class="t" style="right:1604.8px;top:875.1px;font-size:13.6px;color:#3a3e43;letter-spacing:0.26px;-webkit-text-stroke:.12px #3a3e43">3</div>
<div class="t" style="left:208.2px;top:875.1px;font-size:13.6px;color:#3a3e43;letter-spacing:0.26px;-webkit-text-stroke:.12px #3a3e43">Port Edgar Marina</div>
<div class="t" style="right:1246.3px;top:875.1px;font-size:13.6px;color:#3a3e43;letter-spacing:0.45px;-webkit-text-stroke:.12px #3a3e43">6.27</div>
<div class="t" style="left:566.3px;top:875.1px;font-size:13.6px;color:#3a3e43;letter-spacing:0.44px;-webkit-text-stroke:.12px #3a3e43">2017-07-08 13:30:10</div>
<div class="abs" style="left:202px;top:797px;width:1px;height:100px;background:#e3e4e5"></div>
<div class="abs" style="left:381px;top:797px;width:1px;height:100px;background:#e3e4e5"></div>
<div class="abs" style="left:560px;top:797px;width:1px;height:100px;background:#e3e4e5"></div>
<div class="t" style="right:884.8px;top:776.6999999999999px;font-size:13.7px;color:#2a2e33;letter-spacing:0.27px;-webkit-text-stroke:.3px #2a2e33">BoatNumber</div>
<div class="t" style="left:929.7px;top:776.6999999999999px;font-size:13.7px;color:#2a2e33;letter-spacing:0.27px;-webkit-text-stroke:.3px #2a2e33">Location_Name (last)</div>
<div class="t" style="right:459.5px;top:776.6999999999999px;font-size:13.7px;color:#2a2e33;letter-spacing:0.27px;-webkit-text-stroke:.3px #2a2e33">Minimum_Distance (last)</div>
<div class="t" style="left:1356.2px;top:776.6999999999999px;font-size:13.7px;color:#2a2e33;letter-spacing:0.27px;-webkit-text-stroke:.3px #2a2e33">First_dateTime (last)</div>
<div class="t" style="left:1569.1px;top:776.6999999999999px;font-size:13.7px;color:#2a2e33;letter-spacing:0.27px;-webkit-text-stroke:.3px #2a2e33">Last_dateTime (last)</div>
<div class="abs" style="left:764px;top:796px;width:1013px;height:1px;background:#dfe0e1"></div>
<div class="t" style="right:882.5px;top:807.6px;font-size:13.6px;color:#3a3e43;letter-spacing:0.26px;-webkit-text-stroke:.12px #3a3e43">3</div>
<div class="t" style="left:929.7px;top:807.6px;font-size:13.6px;color:#3a3e43;letter-spacing:0.26px;-webkit-text-stroke:.12px #3a3e43">Rosyth Dockyard exclusion zo...</div>
<div class="t" style="right:456.5999999999999px;top:807.6px;font-size:13.6px;color:#3a3e43;letter-spacing:0.45px;-webkit-text-stroke:.12px #3a3e43">594</div>
<div class="t" style="left:1356.2px;top:807.6px;font-size:13.6px;color:#3a3e43;letter-spacing:0.44px;-webkit-text-stroke:.12px #3a3e43">2017-07-08 13:42:29</div>
<div class="t" style="left:1569.1px;top:807.6px;font-size:13.6px;color:#3a3e43;letter-spacing:0.44px;-webkit-text-stroke:.12px #3a3e43">2017-07-08 14:20:15</div>
<div class="abs" style="left:924px;top:797px;width:1px;height:33.5px;background:#e3e4e5"></div>
<div class="abs" style="left:1136px;top:797px;width:1px;height:33.5px;background:#e3e4e5"></div>
<div class="abs" style="left:1351px;top:797px;width:1px;height:33.5px;background:#e3e4e5"></div>
<div class="abs" style="left:1563px;top:797px;width:1px;height:33.5px;background:#e3e4e5"></div>
</div>
</body></html>
